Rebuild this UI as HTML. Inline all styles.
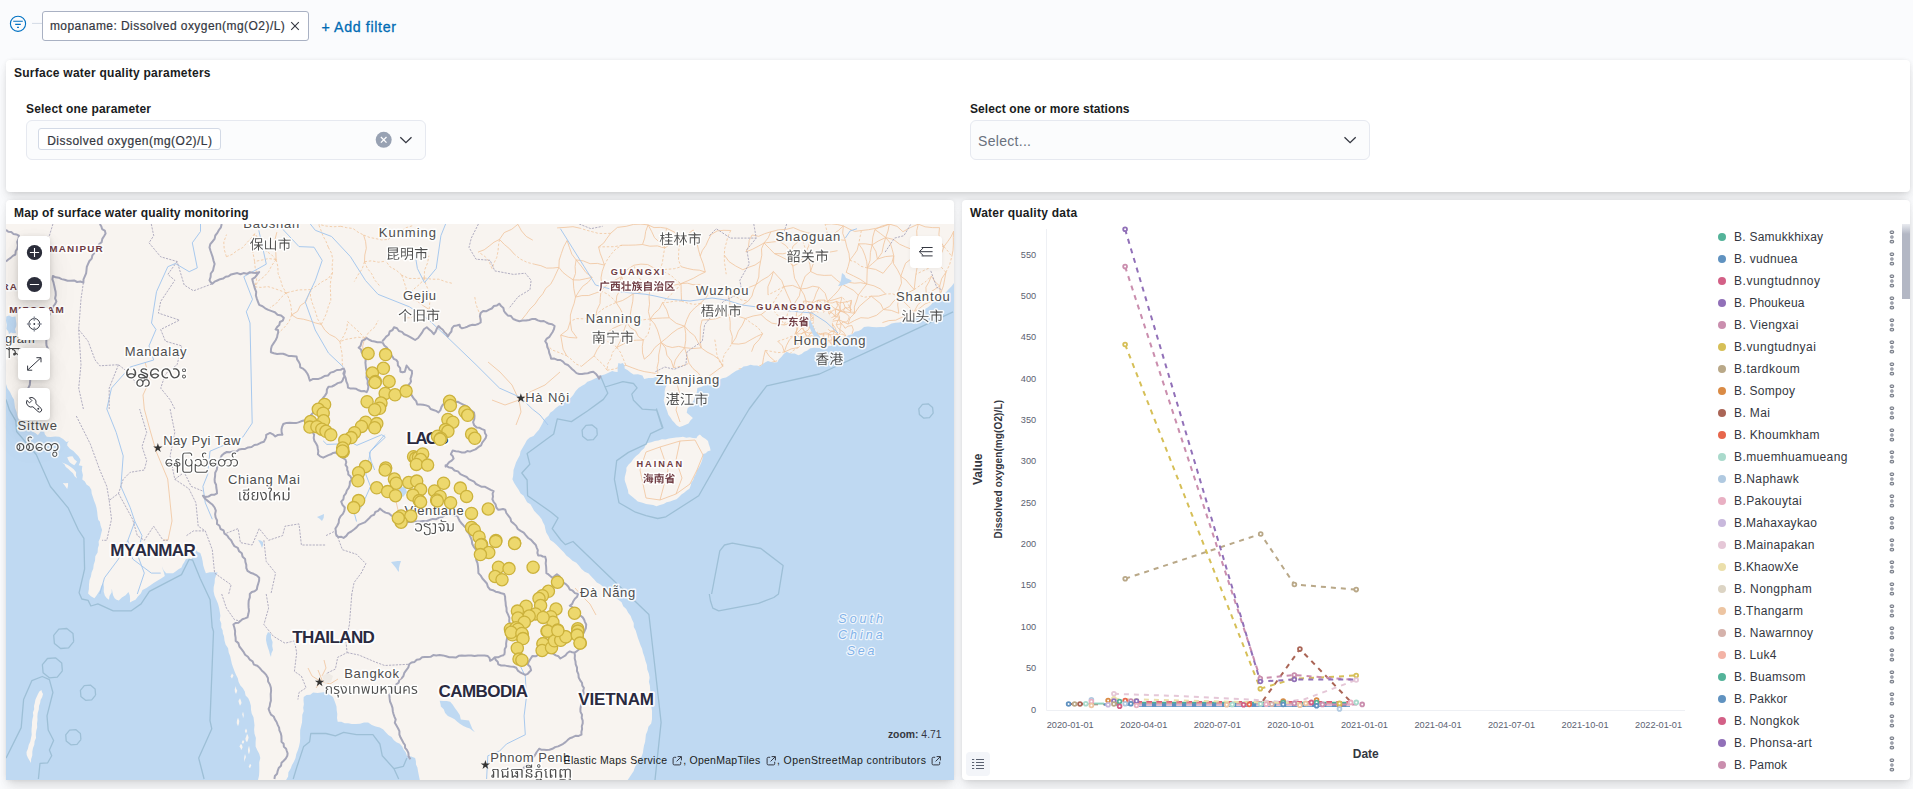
<!DOCTYPE html><html><head><meta charset="utf-8"><title>Dashboard</title><style>
html,body{margin:0;padding:0}
body{width:1913px;height:789px;overflow:hidden;background:#fafbfd;font-family:"Liberation Sans",sans-serif;color:#1a1c21;position:relative}
.abs{position:absolute}
.panel{position:absolute;background:#fff;border-radius:4px;box-shadow:0 .9px 4px -1px rgba(0,0,0,.08),0 2.6px 8px -1px rgba(0,0,0,.06),0 5.7px 12px -1px rgba(0,0,0,.05),0 15px 15px -1px rgba(0,0,0,.04)}
.ptitle{position:absolute;font-weight:700;font-size:12px;line-height:14px;white-space:nowrap;color:#1a1c21}
.lbl{position:absolute;font-weight:700;font-size:12px;line-height:14px;white-space:nowrap;color:#1a1c21}
.combo{position:absolute;height:38px;width:398px;border:1px solid #e6e9f0;border-radius:6px;background:#fbfcfd}
svg{position:absolute;left:0;top:0;overflow:hidden}
.tk{font-size:9.2px;fill:#5b6171;font-family:"Liberation Sans",sans-serif}
.axt{font-size:12px;font-weight:700;fill:#343741;font-family:"Liberation Sans",sans-serif}
.axs{font-size:10px;font-kerning:none;font-weight:700;fill:#343741;font-family:"Liberation Sans",sans-serif}
.lg{font-size:12px;fill:#343741;font-kerning:none;font-family:"Liberation Sans",sans-serif}
.mbtn{position:absolute;width:32px;height:32px;background:#fff;border-radius:4px;box-shadow:0 1px 5px rgba(0,0,0,.1),0 3.6px 13px rgba(0,0,0,.07),0 8.4px 23px rgba(0,0,0,.06),0 23px 35px rgba(0,0,0,.05)}
</style></head><body>
<svg width="60" height="50" viewBox="0 0 60 50"><circle cx="18" cy="23.8" r="7.6" fill="none" stroke="#0071c2" stroke-width="1.1"/><path d="M13.2 21.3h9.6M15.2 24.4h5.6M17.1 27.4h1.8" stroke="#0071c2" stroke-width="1.1" fill="none"/><path d="M32 23.4h10" stroke="#d3dae6" stroke-width="1"/></svg>
<div class="abs" id="fpill" style="left:42.2px;top:11.2px;width:264.6px;height:27.4px;border:1px solid #a9b1c3;border-radius:3px;background:#fff;box-sizing:content-box"><span id="fpt" class="abs" style="left:6.7px;top:7.3px;font-size:12px;line-height:15px;white-space:nowrap;color:#343741;-webkit-text-stroke:.2px #343741;letter-spacing:0.442px">mopaname: Dissolved oxygen(mg(O2)/L)</span><svg style="left:246.9px;top:9.2px" width="10" height="10" viewBox="0 0 10 10"><path d="M1.2 1.2l7.6 7.6M8.8 1.2L1.2 8.8" stroke="#343741" stroke-width="1.1"/></svg></div>
<div class="abs" id="addf" style="left:321.4px;top:18.6px;font-size:14.2px;line-height:17px;color:#006bb4;-webkit-text-stroke:.3px #006bb4;white-space:nowrap;letter-spacing:0.642px">+ Add filter</div>
<div class="panel" style="left:6px;top:60px;width:1904px;height:132px"></div>
<div class="ptitle" id="t1" style="left:14px;top:65.8px;letter-spacing:0.250px">Surface water quality parameters</div>
<div class="lbl" id="l1" style="left:26px;top:102px;letter-spacing:0.190px">Select one parameter</div>
<div class="combo" style="left:26px;top:120px"></div>
<div class="abs" style="left:38px;top:128.3px;width:181px;height:19.4px;border:1px solid #d3dae6;border-radius:3px;background:#fff"><span id="pillt" class="abs" style="left:8.2px;top:5.3px;font-size:12px;line-height:13px;white-space:nowrap;color:#343741;-webkit-text-stroke:.2px #343741;letter-spacing:0.483px">Dissolved oxygen(mg(O2)/L)</span></div>
<div class="lbl" id="l2" style="left:970px;top:102px;letter-spacing:0.081px">Select one or more stations</div>
<div class="combo" style="left:970px;top:120px"></div>
<div class="abs" id="selph" style="left:978px;top:133px;font-size:14px;line-height:17px;color:#6a717d;white-space:nowrap;letter-spacing:0.301px">Select...</div>
<svg width="1913" height="200" viewBox="0 0 1913 200"><circle cx="383.7" cy="139.8" r="8" fill="#98a2b3"/><path d="M380.9 137l5.6 5.6M386.5 137l-5.6 5.6" stroke="#fff" stroke-width="1.3"/><path d="M400.3 137.3l5.6 5.4 5.6-5.4" fill="none" stroke="#343741" stroke-width="1.3"/><path d="M1344.5 137.3l5.6 5.4 5.6-5.4" fill="none" stroke="#343741" stroke-width="1.3"/></svg>
<div class="panel" style="left:6px;top:200px;width:948px;height:580px"></div>
<div class="panel" style="left:962px;top:200px;width:948px;height:580px"></div>
<div class="ptitle" id="t2" style="left:14px;top:205.8px;letter-spacing:0.190px">Map of surface water quality monitoring</div>
<div class="ptitle" id="t3" style="left:970px;top:205.8px;letter-spacing:0.246px">Water quality data</div>
<svg width="1913" height="789" viewBox="0 0 1913 789" style="clip-path:inset(224px 959px 9px 6px)"><rect x="6" y="224" width="948" height="556" fill="#f8f4f0"/>
<path d="M898.8 296.6 906.6 293.4 914.2 289.6M898.8 296.6 903.9 301.7 908.9 306.8 914.0 311.8M898.8 296.6 893.8 301.0 889.5 306.4 883.4 309.5M898.8 296.6 898.7 289.8 901.5 283.2 900.8 276.3M898.8 296.6 897.7 305.0 898.8 313.3M595.7 315.6 597.2 309.5 600.0 303.7 600.3 297.4 601.1 291.1M684.6 347.7 679.6 353.7 675.3 360.0 673.4 367.6M684.6 347.7 685.7 340.5 685.7 333.4 684.6 326.2M684.6 347.7 678.7 346.4 672.2 347.5 666.4 346.0 661.0 342.4M684.6 347.7 686.9 355.5 689.1 363.3M684.6 347.7 692.9 348.5 701.3 347.9M730.8 230.5 723.9 230.3 717.2 230.9 711.1 234.6M702.1 320.0 709.0 319.7 715.8 318.8 722.4 316.4 729.2 315.2M702.1 320.0 700.4 327.0 700.3 333.9 700.1 340.9 701.3 347.9M610.7 233.3 607.0 238.2 603.6 243.2 598.6 246.9M610.7 233.3 617.4 227.4 626.3 226.3M364.5 261.7 364.8 255.0 366.3 248.3 365.6 241.6 363.6 235.0M558.9 267.4 556.3 273.1 553.7 278.7 550.7 284.2 545.8 288.3 542.8 293.8 538.7 298.5M558.9 267.4 552.8 268.0 546.6 268.1 540.9 265.7 534.9 264.3M558.9 267.4 562.9 272.4 567.9 276.3 573.2 279.9M558.9 267.4 559.2 260.1 561.4 253.4 563.7 246.8 567.1 240.5M837.7 334.4 834.9 327.5 830.7 321.5M837.7 334.4 831.6 334.7 825.4 333.9 819.3 334.6M783.9 286.5 786.7 293.2 789.8 299.9 792.4 306.8M783.9 286.5 792.6 285.4 800.6 289.0M783.9 286.5 781.7 280.6 777.5 276.1 773.4 271.5M842.3 284.3 848.4 282.3 854.6 283.2 860.7 282.7 866.8 284.0M842.3 284.3 836.7 279.9 831.4 275.2M842.3 284.3 838.2 290.7 833.1 296.2 827.6 301.4M842.3 284.3 848.0 287.4 853.7 290.4 858.3 295.1M939.7 286.0 934.0 289.8 928.2 293.6 924.3 299.5M939.7 286.0 934.8 281.6 931.3 276.0M939.7 286.0 941.7 278.6 945.9 272.3M939.7 286.0 940.1 292.4 937.5 298.4M792.8 266.1 799.1 263.0 803.1 257.8 806.2 251.7M792.8 266.1 787.8 260.2 781.2 256.8 774.4 253.6M792.8 266.1 790.3 259.2 790.9 252.0M792.8 266.1 793.6 272.2 794.6 278.3 797.6 283.7 800.6 289.0M806.2 251.7 808.8 245.6 810.0 238.9 815.1 234.0M806.2 251.7 808.0 258.3 810.0 264.8 810.6 271.5M806.2 251.7 813.0 253.1 819.9 253.6M633.2 293.8 627.9 297.4 622.3 300.6 616.1 302.5M633.2 293.8 641.6 292.1 649.9 289.4M633.2 293.8 632.8 301.2 631.3 308.4 630.1 315.6 626.9 322.5M633.2 293.8 628.2 288.8 623.8 283.4 621.7 276.5M364.8 338.2 362.7 345.9 363.4 353.6 365.4 361.3M321.3 324.4 315.3 322.9 309.4 320.8 303.4 319.2 297.1 318.3 291.6 314.9M321.3 324.4 324.8 330.1 329.5 334.4 335.4 337.3 340.0 341.7M310.8 289.6 308.3 295.7 305.9 301.8 300.3 305.6 297.5 311.4 291.6 314.9M848.0 324.1 854.3 320.6 860.8 317.7 868.2 318.2M848.0 324.1 850.0 318.0 854.6 313.4M848.0 324.1 839.8 320.1 830.7 321.5M924.3 299.5 917.9 304.6 914.0 311.8M924.3 299.5 926.2 293.6 925.9 287.2 929.1 281.7 931.3 276.0M924.3 299.5 930.9 298.5 937.5 298.4M644.3 359.2 650.3 354.1 654.9 347.5 661.0 342.4M644.3 359.2 642.5 352.9 642.3 346.5 643.3 340.1M868.2 318.2 876.6 315.3 883.4 309.5M532.8 240.2 526.2 236.4 521.5 230.9 517.9 224.3M660.2 269.8 653.8 267.9 647.6 264.5 640.9 264.1 633.9 265.2M276.1 259.6 275.8 252.7 274.7 245.8 275.1 239.0 276.9 232.1M893.8 255.8 892.2 249.3 890.2 242.9 885.7 237.6M893.8 255.8 891.9 262.6 887.4 267.9 883.1 273.3M893.8 255.8 893.5 263.6 897.5 269.8 900.8 276.3M893.8 255.8 885.4 256.6 877.4 259.1M642.5 244.5 635.7 245.0 628.9 245.2 622.0 245.2M642.5 244.5 644.7 238.1 645.7 231.3 648.1 224.9M642.5 244.5 649.8 246.2 657.4 245.9 664.7 248.0M729.2 315.2 730.2 322.3 730.1 329.5 732.3 336.5 731.8 343.7M729.2 315.2 737.4 316.1 745.3 318.5M729.2 315.2 729.8 308.3 729.8 301.5 728.2 294.7M729.2 315.2 735.4 310.2 741.7 305.4 748.3 301.0M729.2 315.2 723.7 312.1 717.4 311.1 711.7 308.4 706.1 305.5 700.2 303.5M577.1 338.0 571.6 330.5 570.3 321.3M577.1 338.0 568.7 337.4 560.7 335.1M762.5 364.4 763.6 357.4 765.3 350.4M762.5 364.4 756.9 367.4 751.2 369.7 744.7 368.3 738.7 369.0M762.5 364.4 768.8 363.1 775.1 361.4M762.6 333.8 759.0 339.8 754.1 345.0 751.6 351.7M762.6 333.8 756.7 336.5 750.9 339.7 745.2 343.0 738.7 344.1 731.8 343.7M854.6 313.4 847.4 312.1 840.2 311.4M854.6 313.4 859.1 306.6 865.1 301.3 871.3 296.2M854.6 313.4 854.3 307.0 856.5 301.0 858.3 295.1M681.0 283.6 681.2 292.3 681.5 301.0M681.0 283.6 674.8 285.0 668.5 285.8 662.1 286.2 656.3 289.2 649.9 289.4M681.0 283.6 687.2 281.0 693.4 278.3 699.2 274.9 705.3 272.0M681.0 283.6 687.2 283.1 693.0 284.7 699.2 284.4 704.8 287.2 710.4 289.4M650.2 319.0 654.3 313.5 659.4 308.9 662.5 302.7M650.2 319.0 654.6 324.0 657.4 329.9 659.3 336.1 661.0 342.4M650.2 319.0 648.4 311.6 649.5 304.2 649.0 296.8 649.9 289.4M650.2 319.0 656.5 318.3 662.8 318.0 669.2 317.8M756.1 284.6 758.8 277.0 759.2 269.0 760.6 261.2M756.1 284.6 761.8 280.2 768.2 276.6 773.4 271.5M756.1 284.6 749.2 287.3 742.0 289.3 734.8 291.2 728.2 294.7M756.1 284.6 753.6 290.1 752.0 296.0 748.3 301.0M761.1 314.6 753.0 316.0 745.3 318.5M761.1 314.6 766.0 310.8 771.2 307.3M761.1 314.6 766.1 319.3 771.8 323.1M576.1 259.9 583.3 260.9 590.1 263.7 597.4 263.4 604.4 265.1M576.1 259.9 575.1 266.6 575.5 273.5 573.2 279.9M576.1 259.9 581.2 266.0 585.9 272.5 592.2 277.4M576.1 259.9 571.8 254.1 569.4 247.3 567.1 240.5M673.4 367.6 671.3 360.8 666.9 355.2 665.6 348.0 661.0 342.4M866.8 284.0 867.0 275.9 867.3 267.9M866.8 284.0 860.4 279.4 853.3 275.8 846.2 272.4M866.8 284.0 862.5 289.4 858.3 295.1M866.8 284.0 873.9 285.8 880.3 288.9 885.7 294.0M861.4 230.5 868.6 229.7 875.6 228.4 882.6 226.8 889.3 224.1M861.4 230.5 854.8 231.4 849.0 228.9 843.3 225.9M557.1 227.9 565.0 227.4 573.0 226.7 580.9 228.4M684.6 326.2 677.8 329.0 672.0 333.1 666.6 338.0 661.0 342.4M684.6 326.2 689.0 331.4 694.6 335.8 697.8 341.9 701.3 347.9M684.6 326.2 686.9 319.4 689.9 313.1 694.6 308.0 700.2 303.5M684.6 326.2 676.2 323.3 669.2 317.8M724.3 255.1 729.1 261.7 735.7 266.0 742.8 269.7M745.9 251.9 748.5 246.5 749.2 240.4 752.1 235.0M745.9 251.9 752.2 249.4 758.2 246.3 764.0 243.0M885.7 237.6 893.4 239.4 899.6 244.2M885.7 237.6 878.7 240.8 872.1 244.9M885.7 237.6 888.0 231.0 889.3 224.1M885.7 237.6 880.4 233.5 874.9 229.5M885.7 237.6 883.5 245.0 882.0 252.6 877.4 259.1M700.2 256.0 703.2 263.8 705.3 272.0M700.2 256.0 698.4 249.5 697.0 242.8 696.1 236.1 693.2 229.9M700.2 256.0 702.4 250.4 705.9 245.4 708.3 239.9 711.1 234.6M616.9 347.4 620.2 341.4 622.6 335.2 624.5 328.7 626.9 322.5M616.9 347.4 623.1 344.2 629.3 340.7 636.2 340.2 643.3 340.1M815.1 234.0 807.5 232.9 800.3 230.6 793.3 227.6M815.1 234.0 822.0 234.7 828.0 238.4M602.0 336.9 607.7 332.4 613.5 328.1 620.1 325.2 626.9 322.5M602.0 336.9 601.1 343.9 597.1 349.7 594.1 355.9M917.0 237.4 916.7 230.7 918.3 224.1M840.2 311.4 840.2 304.2 841.9 297.2M840.2 311.4 833.0 307.4 827.6 301.4M840.2 311.4 836.4 317.3 830.7 321.5M616.1 302.5 620.3 308.9 623.7 315.6 626.9 322.5M616.1 302.5 616.8 295.9 620.2 289.8 619.4 282.8 621.7 276.5M666.6 228.3 674.8 232.3 679.8 240.0M666.6 228.3 660.4 227.4 654.0 227.6 648.1 224.9M899.6 244.2 905.8 247.0 912.1 249.5 918.7 251.1M793.3 227.6 785.9 229.4 778.2 229.9 770.8 231.8M849.7 260.3 849.0 253.5 846.8 246.9 845.3 240.3M849.7 260.3 848.2 266.4 846.2 272.4M849.7 260.3 853.6 255.3 857.1 250.2 858.7 243.9M765.3 350.4 769.5 356.5 775.1 361.4M883.1 273.3 875.6 269.4 867.3 267.9M872.1 244.9 870.4 252.5 870.0 260.5 867.3 267.9M872.1 244.9 872.8 237.1 874.9 229.5M872.1 244.9 875.9 251.6 877.4 259.1M872.1 244.9 865.4 243.8 858.7 243.9M722.8 366.2 717.8 369.7 713.0 373.3 708.0 376.8 701.9 378.3M722.8 366.2 719.2 359.5 713.5 355.3 707.0 352.0 701.3 347.9M931.0 242.0 937.3 244.7 943.9 246.6M601.1 291.1 594.9 293.3 588.7 295.5 581.9 295.6 575.5 297.1M601.1 291.1 601.7 284.6 601.0 277.9 602.2 271.4 604.4 265.1M601.1 291.1 605.4 286.1 610.5 282.5 616.2 279.6 621.7 276.5M662.5 302.7 666.7 309.9 669.2 317.8M819.1 287.3 816.3 292.8 814.3 298.8 811.2 304.1 806.3 308.3M819.1 287.3 812.8 286.2 806.8 288.3 800.6 289.0M819.1 287.3 825.1 293.3 827.6 301.4M731.8 343.7 735.8 337.8 738.3 331.0 742.3 325.1 745.3 318.5M752.1 235.0 758.7 236.3 764.7 233.7 770.8 231.8M939.5 227.6 932.2 227.6 925.1 226.8 918.3 224.1M939.5 227.6 938.9 234.4 940.0 240.8 943.9 246.6M499.5 239.4 504.2 232.6 511.7 229.3 517.9 224.3M499.5 239.4 494.0 242.2 489.1 246.1 484.2 249.8 478.3 252.0M499.5 239.4 504.4 244.5 509.8 249.0 514.5 254.4M661.0 342.4 660.0 348.7 658.7 354.9 658.6 361.3 657.1 367.5 658.0 373.9M914.2 289.6 915.0 281.9 915.9 274.3M914.2 289.6 910.0 284.9 906.0 280.0 900.8 276.3M770.8 231.8 768.2 237.9 764.0 243.0M538.7 298.5 535.0 304.1 530.1 308.9 526.2 314.3 521.9 319.5M934.5 262.0 929.8 257.5 924.5 253.9 918.7 251.1M934.5 262.0 937.5 256.8 942.0 252.5 943.9 246.6M792.4 306.8 795.8 301.2 799.4 295.7 800.6 289.0M792.4 306.8 785.3 305.5 778.2 304.9 771.2 307.3M760.6 261.2 761.8 255.2 761.5 248.8 764.0 243.0M760.6 261.2 755.1 265.0 748.9 267.2 742.8 269.7M797.0 321.5 790.6 322.9 784.3 325.0M797.0 321.5 797.6 328.7 794.4 335.2M797.0 321.5 802.0 326.1 804.5 332.3 807.4 338.2M774.4 253.6 782.8 253.8 790.9 252.0M774.4 253.6 769.3 248.3 764.0 243.0M679.8 240.0 686.6 235.2 693.2 229.9M679.8 240.0 671.8 243.2 664.7 248.0M626.9 322.5 630.2 327.6 635.5 330.8 638.3 336.5 643.3 340.1M815.1 321.3 810.6 314.9 806.3 308.3M701.9 378.3 698.2 372.8 693.0 368.6 689.1 363.3M810.6 271.5 805.2 276.2 802.7 282.5 800.6 289.0M810.6 271.5 817.2 274.6 824.2 275.4 831.4 275.2M810.6 271.5 812.7 265.0 816.3 259.3 819.9 253.6M806.3 308.3 806.1 301.4 804.2 295.0 800.6 289.0M867.3 267.9 872.4 263.6 877.4 259.1M867.3 267.9 866.7 261.4 864.9 255.2 862.5 249.3 858.7 243.9M790.9 252.0 793.1 246.0 797.9 241.9 801.7 237.0M790.9 252.0 786.0 245.7 779.4 241.2M575.5 297.1 573.8 288.6 573.2 279.9M575.5 297.1 574.2 303.2 572.1 309.1 570.4 315.0 570.3 321.3M575.5 297.1 578.9 291.5 582.7 286.3 588.1 282.4 592.2 277.4M914.0 311.8 908.1 315.3 901.8 317.3 895.7 320.2 888.8 320.6 882.4 322.6M914.0 311.8 919.7 308.2 925.1 303.9 931.5 301.4 937.5 298.4M828.0 238.4 836.6 239.5 845.3 240.3M828.0 238.4 833.1 234.2 838.5 230.4 843.3 225.9M784.3 352.1 782.4 345.9 777.8 341.3M784.3 352.1 791.2 348.9 798.6 347.4M784.3 352.1 786.4 345.7 789.4 339.8 794.4 335.2M883.4 309.5 880.7 303.8 876.0 300.0 871.3 296.2M883.4 309.5 891.3 310.4 898.8 313.3M633.9 265.2 626.9 269.9 621.7 276.5M705.3 272.0 699.4 270.2 693.2 269.7 687.2 268.4 681.2 266.7M604.4 265.1 602.4 259.1 600.1 253.1 598.6 246.9M773.4 271.5 771.1 279.2 767.9 286.7 768.0 294.9M918.3 224.1 911.1 222.1 903.8 220.6 896.5 222.9 889.3 224.1M918.3 224.1 910.4 227.6 902.9 231.7M429.2 309.5 423.3 305.7 417.7 301.5 411.1 298.9 404.8 295.9M594.1 355.9 587.8 361.1 581.5 366.3M918.7 251.1 912.6 257.7 905.6 263.2M918.7 251.1 919.7 259.1 917.3 266.6 915.9 274.3M798.6 347.4 803.1 343.0 807.4 338.2M943.9 246.6 947.6 241.7 951.1 236.7 953.7 231.2M871.3 296.2 878.6 296.1 885.7 294.0M905.6 263.2 903.1 269.7 900.8 276.3M710.4 289.4 706.4 297.2 700.2 303.5M625.9 365.3 632.1 367.7 638.4 370.0 644.8 371.7 651.4 372.7 658.0 373.9M845.3 240.3 842.7 233.3 843.3 225.9M573.2 279.9 579.6 280.0 585.9 278.7 592.2 277.4M648.1 224.9 651.5 231.2 654.5 237.7 659.9 242.6 664.7 248.0M648.1 224.9 640.8 224.1 633.5 224.4 626.3 226.3M945.9 272.3 944.7 279.1 943.4 285.9 941.1 292.3 937.5 298.4M570.3 321.3 567.7 329.7 560.7 335.1M784.3 325.0 778.1 324.2 771.8 323.1M841.9 297.2 834.8 299.4 827.6 301.4M566.6 355.7 563.1 349.2 561.9 342.1 560.7 335.1M953.7 231.2 953.3 237.6 953.4 244.0 953.0 250.3 951.8 256.6M827.6 301.4 827.5 308.3 829.4 314.8 830.7 321.5M801.7 237.0 794.5 239.6 787.0 240.7 779.4 241.2M889.3 224.1 897.0 226.3 902.9 231.7M889.3 224.1 881.8 226.1 874.9 229.5M843.3 225.9 837.3 224.5 831.3 223.8 825.1 224.2M819.9 253.6 828.7 252.3 837.5 250.7M764.0 243.0 771.7 242.1 779.4 241.2M805.2 331.7 805.8 334.6 808.1 336.5M805.2 331.7 801.6 333.8 799.7 337.4M805.2 331.7 808.0 330.2 809.6 327.6M805.2 331.7 800.9 333.9 796.0 333.9M805.2 331.7 808.4 332.9 811.7 332.8M805.2 331.7 803.4 329.9 802.4 327.5M831.6 322.0 829.0 325.1 827.2 328.6M831.6 322.0 832.8 326.6 834.3 331.1M831.6 322.0 828.2 320.1 825.0 317.9M831.6 322.0 828.7 322.1 826.3 323.6M808.1 336.5 803.9 337.4 799.7 337.4M808.1 336.5 808.0 340.6 810.1 344.1M808.1 336.5 811.8 335.7 815.2 337.4M808.1 336.5 809.6 334.3 811.7 332.8M841.2 323.6 843.5 325.6 845.0 328.3M841.2 323.6 839.4 320.7 839.5 317.2M841.2 323.6 838.8 324.4 836.3 324.4M841.2 323.6 843.6 321.7 846.7 322.1M841.2 323.6 840.6 326.6 839.7 329.5M824.3 310.9 823.3 308.2 823.9 305.3M824.3 310.9 822.7 314.8 818.9 316.8M824.3 310.9 820.5 309.5 817.0 311.4M824.3 310.9 820.1 309.1 816.7 306.2M824.3 310.9 827.9 310.9 831.1 312.6M796.2 317.1 799.6 319.3 802.9 321.9M796.2 317.1 796.5 313.3 797.6 309.8M796.2 317.1 799.0 316.1 801.3 314.2M796.2 317.1 797.0 319.6 796.6 322.2M828.8 303.2 830.2 307.8 831.1 312.6M828.8 303.2 832.7 302.8 836.5 301.4M828.8 303.2 826.6 301.8 824.6 300.1M840.5 310.7 838.3 313.7 839.5 317.2M840.5 310.7 843.2 309.7 845.1 307.5M840.5 310.7 838.1 309.4 835.4 309.5M840.5 310.7 839.1 305.8 836.5 301.4M840.5 310.7 842.7 311.8 845.0 313.0M840.5 310.7 837.9 313.8 834.6 316.3M809.0 301.9 808.7 305.4 806.1 307.8M809.0 301.9 810.6 304.9 811.7 308.0M809.0 301.9 806.3 301.1 803.3 301.2M809.0 301.9 813.8 302.4 818.0 300.2M851.9 334.0 853.3 329.8 851.9 325.5M845.0 328.3 848.1 326.2 851.9 325.5M823.9 305.3 821.3 302.4 818.0 300.2M823.9 305.3 825.0 302.8 824.6 300.1M849.3 316.9 848.3 319.7 846.7 322.1M849.3 316.9 847.5 314.6 845.0 313.0M803.0 342.7 800.9 340.3 799.7 337.4M803.0 342.7 806.8 342.2 810.1 344.1M803.0 342.7 799.9 343.5 796.7 344.3M821.4 325.4 818.4 323.6 815.2 322.3M821.4 325.4 821.9 320.6 818.9 316.8M821.4 325.4 824.0 327.5 827.2 328.6M821.4 325.4 818.2 328.4 817.2 332.7M821.4 325.4 823.9 324.7 826.3 323.6M815.2 322.3 816.8 319.4 818.9 316.8M815.2 322.3 811.2 323.6 809.6 327.6M815.2 322.3 812.6 320.3 809.3 319.8M838.3 335.1 836.0 333.4 834.3 331.1M838.3 335.1 835.5 337.6 832.1 339.2M838.3 335.1 842.2 334.1 845.9 335.9M838.3 335.1 839.3 337.6 838.6 340.3M838.3 335.1 840.2 332.6 839.7 329.5M828.5 333.6 831.1 331.7 834.3 331.1M828.5 333.6 830.7 336.1 832.1 339.2M828.5 333.6 826.1 332.7 823.5 333.0M828.5 333.6 828.4 336.9 827.0 339.9M802.9 321.9 799.5 324.0 797.3 327.3M802.9 321.9 801.2 318.2 801.3 314.2M802.9 321.9 805.8 325.2 809.6 327.6M802.9 321.9 806.2 321.4 809.3 319.8M802.9 321.9 799.7 321.7 796.6 322.2M802.9 321.9 801.6 324.6 802.4 327.5M818.9 316.8 819.0 313.7 817.0 311.4M818.9 316.8 814.1 316.5 810.4 313.3M818.9 316.8 813.9 317.5 809.3 319.8M797.5 304.3 796.2 307.0 797.6 309.8M827.2 328.6 830.3 331.0 834.3 331.1M806.1 307.8 808.3 310.6 810.4 313.3M806.1 307.8 801.8 308.7 797.6 309.8M806.1 307.8 809.0 306.5 811.7 308.0M806.1 307.8 803.7 311.0 801.3 314.2M806.1 307.8 804.2 304.7 803.3 301.2M815.5 342.6 812.8 343.4 810.1 344.1M815.5 342.6 816.0 340.0 815.2 337.4M815.5 342.6 817.4 344.7 819.8 346.0M815.4 327.5 814.0 330.4 811.7 332.8M799.7 337.4 799.3 341.3 796.7 344.3M799.7 337.4 797.8 335.8 796.0 333.9M839.5 317.2 837.8 320.8 836.3 324.4M839.5 317.2 837.0 316.8 834.6 316.3M834.3 331.1 833.3 335.2 832.1 339.2M817.0 311.4 813.6 311.8 810.4 313.3M817.0 311.4 814.5 309.5 811.7 308.0M845.1 307.5 844.3 304.8 842.9 302.4M845.1 307.5 848.1 309.5 850.8 311.8M845.1 307.5 843.6 310.2 845.0 313.0M845.1 307.5 847.7 308.0 850.2 306.8M842.9 302.4 847.2 301.7 851.4 300.3M842.9 302.4 839.5 302.8 836.5 301.4M810.4 313.3 811.8 310.9 811.7 308.0M810.4 313.3 810.7 316.7 809.3 319.8M810.1 344.1 814.9 345.3 819.8 346.0M797.3 327.3 796.5 330.6 796.0 333.9M797.3 327.3 797.3 324.7 796.6 322.2M797.3 327.3 799.9 326.2 802.4 327.5M832.1 339.2 830.9 341.6 831.4 344.3M832.1 339.2 835.4 339.4 838.6 340.3M832.1 339.2 829.7 340.6 827.0 339.9M817.2 332.7 820.3 333.7 823.5 333.0M817.2 332.7 819.3 336.9 821.4 341.1M817.2 332.7 815.5 334.8 815.2 337.4M817.2 332.7 814.4 333.3 811.7 332.8M825.0 317.9 827.6 314.8 831.1 312.6M825.0 317.9 825.5 320.8 826.3 323.6M825.0 317.9 830.0 318.3 834.6 316.3M831.4 344.3 835.8 343.7 838.6 340.3M831.4 344.3 829.6 341.7 827.0 339.9M823.5 333.0 823.0 337.2 821.4 341.1M823.5 333.0 823.9 337.1 827.0 339.9M845.9 335.9 842.5 338.4 838.6 340.3M845.9 335.9 843.4 332.1 839.7 329.5M851.4 300.3 849.8 306.0 850.8 311.8M851.4 300.3 851.3 303.6 850.2 306.8M835.4 309.5 832.8 310.4 831.1 312.6M835.4 309.5 837.7 305.7 836.5 301.4M835.4 309.5 835.6 312.9 834.6 316.3M811.7 308.0 814.5 307.8 816.7 306.2M821.4 341.1 823.5 343.6 826.4 345.1M821.4 341.1 821.3 343.8 819.8 346.0M816.7 306.2 817.1 303.1 818.0 300.2M818.0 300.2 821.3 300.1 824.6 300.1M809.6 327.6 809.5 323.7 809.3 319.8M809.6 327.6 806.0 327.1 802.4 327.5M836.3 324.4 837.5 327.3 839.7 329.5M831.1 312.6 833.3 313.9 834.6 316.3M850.8 311.8 850.5 309.3 850.2 306.8M826.4 345.1 827.7 342.6 827.0 339.9M826.4 345.1 823.1 345.7 819.8 346.0M796.7 344.3 795.4 339.2 796.0 333.9M796.0 333.9 797.0 328.1 796.6 322.2M796.0 333.9 799.3 330.8 802.4 327.5" fill="none" stroke="#f1c6a0" stroke-width=".85" stroke-linejoin="round"/>
<path d="M898.8 296.6 892.6 293.8 885.7 294.0M595.7 315.6 600.1 311.2 605.0 307.6 610.5 305.0 616.1 302.5M595.7 315.6 601.5 318.9 608.1 318.5 614.0 321.5 620.3 322.6 626.9 322.5M595.7 315.6 589.5 317.8 583.1 318.8 576.3 318.6 570.3 321.3M730.8 230.5 727.9 236.3 726.4 242.5 724.7 248.6 724.3 255.1M340.7 226.3 346.7 227.7 353.0 228.5 358.1 232.2 363.6 235.0M340.7 226.3 333.2 226.8 325.8 226.0 318.6 224.3M610.7 233.3 604.5 233.5 598.4 233.4 592.5 231.8 586.7 230.3 580.9 228.4M364.5 261.7 367.3 268.3 371.7 273.8 374.8 280.1 379.4 285.5M364.5 261.7 362.2 268.9 357.9 275.1 354.3 281.5M364.5 261.7 371.6 260.8 378.7 262.2 385.8 261.1M783.9 286.5 780.7 291.7 777.1 296.6 773.9 301.8 771.2 307.3M783.9 286.5 776.1 290.9 768.0 294.9M226.4 256.7 232.4 254.3 237.1 250.5 242.7 247.6 246.7 242.9 250.9 238.5 254.8 233.5M226.4 256.7 224.2 249.3 223.8 242.0 226.5 234.6M806.2 251.7 803.9 244.4 801.7 237.0M364.8 338.2 358.4 337.2 352.2 338.3 346.0 339.3 340.0 341.7M364.8 338.2 359.4 332.3 353.5 326.9 347.6 321.6M364.8 338.2 368.9 332.1 374.7 327.2 378.1 320.6M321.3 324.4 317.7 319.2 316.0 313.4 314.0 307.7 311.9 302.0 310.4 296.1 310.8 289.6M321.3 324.4 324.1 318.6 326.7 312.8 328.3 306.5 330.8 300.6M310.8 289.6 304.6 289.8 298.4 289.9 292.3 291.4 286.3 292.8M310.8 289.6 316.6 285.8 322.1 281.7 328.4 278.5 332.5 272.5M291.6 314.9 291.2 307.2 289.6 299.8 286.3 292.8M291.6 314.9 288.9 322.0 284.1 327.7 278.6 332.9M402.9 317.8 410.1 317.8 416.5 314.9 423.3 313.8 429.2 309.5M660.2 269.8 665.8 272.7 671.4 275.5 675.8 280.1 681.0 283.6M660.2 269.8 667.3 269.3 674.4 268.7 681.2 266.7M660.2 269.8 662.4 262.6 663.4 255.3 664.7 248.0M276.1 259.6 277.8 266.4 278.1 273.5 280.6 280.0 282.5 286.7 286.3 292.8M276.1 259.6 271.5 254.7 265.6 250.7 261.1 245.8 258.6 239.1 254.8 233.5M276.1 259.6 268.7 258.5 261.7 260.1 254.6 261.5M276.1 259.6 271.9 265.2 268.7 271.4 264.1 276.6 258.4 280.8 254.9 286.9M762.6 333.8 757.9 327.4 751.4 323.2 745.3 318.5M854.6 313.4 850.1 308.2 847.0 301.9 841.9 297.2M681.0 283.6 676.9 288.9 672.1 293.5 667.3 298.0 662.5 302.7M650.2 319.0 642.4 319.9 634.7 321.4 626.9 322.5M650.2 319.0 650.0 326.7 648.1 333.9 643.3 340.1M673.4 367.6 681.4 366.2 689.1 363.3M412.2 225.8 405.4 227.9 400.0 232.3 393.7 235.3 388.1 239.5M681.5 301.0 675.1 301.0 668.9 302.3 662.5 302.7M681.5 301.0 687.6 303.1 693.8 304.4 700.2 303.5M861.4 230.5 860.0 237.2 858.7 243.9M724.3 255.1 724.4 261.5 725.3 267.9 726.2 274.2M424.3 277.9 431.4 279.2 438.9 279.2 445.8 281.8 452.9 283.5M424.3 277.9 425.8 284.2 428.4 290.2 430.8 296.3 429.7 303.0 429.2 309.5M424.3 277.9 416.6 278.5 408.9 278.4 401.7 275.1M424.3 277.9 424.5 270.3 427.5 263.1 428.9 255.7M424.3 277.9 420.5 283.6 415.3 287.8 410.5 292.3 404.8 295.9M616.9 347.4 612.1 343.7 606.4 341.2 602.0 336.9M616.9 347.4 612.5 352.3 610.9 358.3 607.8 363.8 607.0 370.2M616.9 347.4 620.8 352.9 623.4 359.1 625.9 365.3M286.3 292.8 280.2 290.6 274.1 288.4 267.9 286.6 261.3 287.4 254.9 286.9M286.3 292.8 280.8 297.8 276.1 303.6 269.9 307.8M328.3 247.2 331.5 253.2 332.8 259.5 332.1 266.1 332.5 272.5M328.3 247.2 326.0 241.4 323.0 235.9 320.9 230.1 318.6 224.3M616.1 302.5 611.9 297.7 607.0 293.8 601.1 291.1M666.6 228.3 665.2 234.8 664.0 241.3 664.7 248.0M849.7 260.3 855.8 262.2 861.0 266.3 867.3 267.9M765.3 350.4 771.6 351.4 777.9 352.6 784.3 352.1M722.8 366.2 722.7 359.6 724.6 353.9 728.6 348.9 731.8 343.7M722.8 366.2 718.5 360.1 716.6 353.2 715.9 346.1 714.7 339.1M363.6 235.0 369.5 237.4 375.6 238.6 381.7 239.9 388.1 239.5M474.8 297.1 475.8 303.4 477.9 309.5 480.4 315.5 479.7 322.2M499.5 239.4 498.5 245.3 498.0 251.4 496.8 257.3 494.1 262.9 492.1 268.6M914.2 289.6 920.1 285.4 926.1 281.3 931.3 276.0M492.1 268.6 489.1 261.7 484.6 256.1 478.3 252.0M340.0 341.7 344.0 335.5 346.8 328.9 347.6 321.6M340.0 341.7 340.8 347.7 342.1 353.6 342.2 359.6 342.4 365.6M934.5 262.0 929.4 267.9 922.7 271.0 915.9 274.3M934.5 262.0 940.7 266.5 945.9 272.3M607.0 370.2 603.4 364.8 598.6 360.5 594.1 355.9M607.0 370.2 613.5 369.2 619.7 367.3 625.9 365.3M649.9 289.4 644.9 284.1 639.8 278.7 636.5 272.3 633.9 265.2M792.4 306.8 787.8 312.0 786.4 318.7 784.3 325.0M254.8 233.5 252.3 240.5 252.0 247.5 253.3 254.5 254.6 261.5M679.8 240.0 679.1 246.7 678.6 253.5 678.5 260.2 681.2 266.7M815.1 321.3 813.3 327.3 810.5 332.8 807.4 338.2M534.9 264.3 527.4 262.5 520.6 259.2 514.5 254.4M828.0 238.4 827.0 231.2 825.1 224.2M604.4 265.1 607.6 259.1 611.6 253.7 616.0 248.8 622.0 245.2M777.8 341.3 786.2 338.5 794.4 335.2M546.6 344.6 552.3 350.0 559.5 352.7 566.6 355.7M798.6 347.4 792.7 350.8 787.8 356.0 781.8 359.4 775.1 361.4M332.5 272.5 330.8 279.5 330.3 286.5 330.6 293.6 330.8 300.6M943.9 246.6 948.1 251.4 951.8 256.6M254.6 261.5 255.2 267.9 257.0 274.2 256.4 280.5 254.9 286.9M871.3 296.2 864.7 297.2 858.3 295.1M622.0 245.2 614.3 246.7 606.5 246.8 598.6 246.9M771.2 307.3 775.7 313.2 780.8 318.5 784.3 325.0M728.2 294.7 735.1 296.1 741.3 299.9 748.3 301.0M945.9 272.3 949.6 264.7 951.8 256.6M401.7 275.1 404.1 281.8 406.2 288.6 404.8 295.9M401.7 275.1 396.5 270.4 390.1 266.9 385.8 261.1M566.6 355.7 571.4 359.4 575.7 363.9 581.5 366.3M794.4 335.2 800.9 336.5 807.4 338.2" fill="none" stroke="#f1c7a1" stroke-width=".85" stroke-dasharray="2.5 1.8" stroke-linejoin="round"/>
<path d="M6 388 7.8 390.6 10.4 393.2 12 396.5 14 399.5 14.5 403.7 15 407.9 16.6 411.9 17.1 415 18 418 19.3 420.8 21.8 424 25.3 426 28 429 31.2 431.1 34.8 432.7 37.9 435 39.6 433.1 41 431 44.1 431.5 44.9 434.4 46.8 436.8 50.9 436.9 55.1 436.5 59.2 436.8 63.1 439 66.3 442.1 69 441.2 67.4 443.1 67.2 445.6 70 448.7 73.4 451 76 453.7 78.7 456.4 80.5 459.8 79.9 462.6 78.7 465.2 82.3 466.1 81.8 470.5 82.9 475 82.3 479.4 84.9 481.6 86.5 484.6 89.4 486.5 91.3 489.8 91.7 493.6 92.9 497.1 94.1 500.7 95.5 504.2 96.5 507.8 97.2 511.9 97.6 516 98.3 520 99.8 521.5 100.7 525.8 102.1 530 101 534.2 100 538.4 98.6 541.5 98.9 544.9 97.9 548.1 97.6 552.5 95.3 556.3 95 560.7 93.7 564.8 93.2 568.8 91.6 572.5 90.9 576.4 89.5 580.2 89 584.6 88.9 589 88.1 593.4 90.9 596.3 94.4 598.3 96.5 595.6 98.3 592.8 100 589.9 101.1 586.2 103.4 583 103.9 587.2 103.7 591.4 104.8 595.5 106.6 597.9 109 599.7 109.5 595.9 111.6 592.4 111.8 588.5 112.4 591.9 113.1 595.2 114.6 598.3 116.5 599.7 118.8 600.4 121.9 597.4 125.6 595.2 128.5 592 129.8 595.4 130.1 598.9 129.9 602.5 132.6 600.9 135.5 599.7 137.9 596.5 140.8 593.6 142.5 589.9 146.4 587.9 150.1 585.6 153.6 583 157.3 580.7 161.1 578.4 164.8 576 164 572.7 162.8 569.5 162 566.2 163.4 570.1 166.2 573.2 169.6 573.2 173.1 573.2 175.9 571.3 178.5 569.2 181.5 567.6 182.6 564.7 184.4 562.1 185.7 559.3 188.5 558.6 191.3 559.3 192.9 556.2 194.7 553.3 196.1 550.2 197.9 552.1 200.3 553 201.7 557 202.6 561.1 203.2 565.2 204.4 569.3 205.9 573.2 209.8 572.2 213.7 572.3 217.7 572.5 216 575.5 214.9 578.8 214.6 583 213.7 587.1 213.6 591.3 214.5 595.6 216.3 599.7 218 603.7 219.1 608 219.8 611.9 220.4 615.8 219.8 619.8 221.3 623.6 221.2 627.6 222.6 630.3 222.9 633.4 224 636.2 224.5 640.5 225.6 644.6 228.1 648.3 228.7 652.6 230.2 656.3 231 660.1 231.9 664 233.2 667.7 234.6 671.4 236.1 674.9 237.8 678.3 238.6 682 240.4 685.4 242.9 688.3 244.8 691.6 245.6 695.5 248.3 698.3 249.8 701.8 250.9 705.7 251 709.7 251.7 713.6 253.5 717.3 254 721.3 254.5 725.3 254.1 729.6 254.5 733.8 255.9 737.9 255.6 742.2 255.6 746.4 257.3 750.3 259.3 754 260.3 758.1 259.2 762.4 259.3 766.8 259.3 771.3 259 775.7 258 780 6 780ZM286.1 780 288.1 776.5 288.4 772.3 290.6 768.8 292 765.1 294 761.6 295.5 757.9 296.3 753.9 297.8 750.2 299 746.4 299.9 742.3 300.2 738.2 300.1 734.1 300.2 730 301.1 726.3 302 722.6 302.2 718.7 302.3 714.8 303.7 711.2 303.2 707.7 303.9 704.2 303.5 700.6 303.7 697.1 306.5 694.9 310.3 694.7 313.1 692.5 317.4 692.9 321.7 692.5 326 692 329.5 694.6 333 697.1 334.3 700.2 335.4 703.3 336.5 706.5 336.7 710.3 337.3 714.1 337 718 337.7 721.8 341.3 721.8 344.7 723.3 348.3 723.3 351.8 724.1 355.9 724 360 723.8 364.1 722.6 368.2 722.5 371.8 724.9 375.7 726.5 379.9 727.6 383.3 729.4 385.7 732.3 388.3 735.1 391.6 737 393.7 739.9 396.4 742.3 399.8 743.7 402.2 746.4 403.6 749.6 405.8 752.4 406.9 755.7 411.1 756.4 415.1 758.1 415.9 761.2 416 764.5 417.4 767.5 418.1 771.7 418.9 775.8 419.8 780ZM954 283 951.4 286.5 948.4 289.6 945.8 292.5 942.3 294.4 939.9 297.5 937.2 300.4 933.3 301.8 930.8 304.9 927.7 307.4 924.3 309.6 922 313.1 918.2 314.7 915.6 317.8 911.6 319.3 907.5 320.5 903.3 321.3 899.2 322.5 895.3 322.7 891.5 323.6 888 325.6 884.3 326.9 880.4 327.1 876.3 327.2 872.2 327 868.1 326.4 864 327.1 861.4 329.4 858.4 331 854.9 331.8 852.3 334.2 848.2 335.3 844.8 338 840.6 338.9 837.5 341.3 834.1 343.3 831.2 345.9 827 346.2 822.8 347.4 818.6 348 814.3 347.7 810.1 348.2 807.4 350.4 804.3 351.8 801.6 353.9 798.4 355.3 794.7 353.4 790.4 353.5 786.6 351.8 783.7 353.9 781.6 356.8 779 359.2 777.3 362.3 774.1 362.6 771 362.1 767.9 361.1 764.9 362.4 762.4 364.5 760 366.6 757 365.5 753.7 365.5 750.6 364.8 747.1 366.1 743.5 366.6 740.2 369.2 736.2 370.7 732.7 373 729.3 375.5 726 377.4 722.3 378.3 718.8 379.9 715.1 380.8 711.8 382.8 708.1 383.8 704.6 385.3 701.1 386.9 697.4 387.9 696.8 392.2 695.1 396.2 693.8 400.3 691.8 403.1 690.3 406.1 687.6 408.3 686.7 412.7 689.8 415.3 692.9 418 690.4 420.5 688.5 423.4 685.6 424.8 682.7 426.1 679.6 426.9 676.6 425.2 674.3 422.5 672.3 420.5 670.8 418 668.3 414.8 667.2 411 665.8 407.5 664.7 403.9 663.7 400.3 664.7 395.9 664.6 391.4 665.4 387.7 667.2 384.3 664.5 381.6 662.1 378.8 660.1 375.5 656.6 376.8 653 378.1 648.5 378 644.2 379 642.4 375.5 638 374.3 633.5 374.6 630.5 372.6 627.8 370.2 624.7 368.4 624.4 365.5 622.9 363.1 620.6 363.7 618.4 363.1 617.6 367.5 617.6 371.9 614.8 371.8 612.2 371 608.5 372.8 604.7 374.5 600.7 375.5 598 377.3 594.5 378.8 591 380.5 587.4 381.7 584.8 384.3 581.6 386.1 578.5 387.9 575.5 391.2 573.2 395 570.8 397.8 567.5 399.5 564.7 401.8 561.7 403.9 558.5 406 555.5 408.3 553.1 410.8 550.2 412.7 548.5 415.8 545.7 418 543.7 420.4 542.5 423.3 541 426 538.9 429.8 536 433 533.5 435.9 529.8 437.4 527 440 525 443.8 522.8 447.5 520.6 451.2 519.8 455.2 517.9 458.8 516 462.4 514.8 466.2 513.5 470 513.4 473.1 513.1 476.2 512.4 479.3 514.2 483 516.4 486.4 518.6 489.8 520.6 493.4 523.6 495.7 525.3 499 527.1 502.3 530.4 504.3 532.3 507.5 534.1 510.8 536.7 513.6 539.4 516.3 541.7 519.2 542.9 522.3 544.6 525.2 545.2 528.5 546.2 532.6 548.5 536.2 550.2 540 553.3 542.1 556.1 544.4 558.6 547.1 561.2 549.7 563.8 552.2 566.3 555.5 569.6 558 572.5 560.8 576.3 562.7 579 565.8 581.5 569.1 584.7 571.8 588.6 573.5 591.3 576.6 594.2 579.5 596.8 582.4 600.1 584.3 603.1 586.7 606.4 588.6 609.7 591 612.4 594.1 615 597.4 618.3 599.8 621.6 602.3 623.2 606.2 626.2 609.1 628.2 612.7 630.7 616 632 619.6 633.7 623.1 633.8 627.1 635.7 630.5 636.8 634.2 637.9 637.9 639.2 641.5 640.5 645.2 642.1 648.7 642.9 652.5 644.4 656.7 645.5 660.9 646.9 665.1 647.3 669.6 648.9 673.7 649.6 677.7 648.9 681.8 649.9 685.8 650.2 689.9 650.7 693.9 650.5 698 650.8 702.3 651.3 706.5 652 710.7 652 715 652 719.3 651.2 723.4 648.4 726.7 647.5 730.7 645.9 734.5 645.5 738.2 645.1 741.9 644 745.5 643.4 749.1 642.9 752.8 641.6 756.7 638.6 759.8 637.1 763.6 635 767.1 633.7 771 631.7 774 629.7 777 627.7 780 954 780ZM439.7 700.7 443.2 701 446.8 700.9 450.2 701.8 452.8 704.8 454.9 708.1 457.3 711.2 459.8 715 460.8 719.4 464.9 720.1 469 720.6 470.7 724.7 472.3 728.7 474.9 732.3 472.3 730.4 469.8 728.5 466.7 727.6 463.4 725.9 460.2 724 457.3 721.8 454.6 719.2 451.2 717.6 447.9 715.9 445.1 713.1 443.7 709.3 440.9 706.5 440.4 703.6ZM399 487 402.1 487.3 405 486 405.9 489 407 492 405 494.5 403 497 400.5 495.5 398 494 399 490.6ZM391 562 394.3 561.5 397.6 561.1 401 561 399.8 564.6 398.9 568.2 399 572 397.3 570.2 396 568 393.5 565ZM268 632 271 634 271 638.1 272.6 641.9 272.2 646 273 650 271.4 653.3 271 657 269.8 654.1 269.1 651 268 648 266.8 644 266 640 266.3 635.8ZM317 517 320.6 515.6 324 514 323.7 517.7 322 521 319.7 518.7ZM258 540 260.7 540.5 263 542 263 545.1 262 548 260.4 543.8ZM842 273 844.6 275.1 846 278 849.1 279.2 852 281 849.2 282.8 846 284 842.2 285.6 838 286 839.8 283.2 841 280 841.5 276.5ZM6.3 316.5 9 315.5 12 317 15.5 316.5 15.9 320.3 16.5 324 16.2 326.6 15 329 16 333 13.4 333.3 11 332.5 9 334 8.2 331.2 6.3 329 6.8 324.8 6 320.7ZM6 384 7.4 388.3 10 392 11.8 395.8 12.9 399.9 14 404 14.4 408.1 15.5 412 16.1 416 17 420 14.8 416.8 12 414 10.9 410 9.8 406 9 402 7.9 399.7 6 398Z" fill="#bfd9f2"/>
<path d="M624.7 480 624.8 476.9 625.6 473.9 626.4 470.8 626.4 467.7 628.6 464.6 631.3 461.9 633.5 458.8 636.1 456.1 639 453.7 641.3 450.7 644.2 448.2 645.6 445.3 647.7 442.9 651.3 442.2 654.8 440.9 658.4 440.5 661.9 439.3 665.5 439.4 669 438.5 672.5 437.9 676 437.5 679.6 437.2 683 436.8 686.3 437.8 689.7 437.3 693 438 696.4 438.3 697.7 436 699.9 434.5 702.4 436.9 705.4 438.8 708 441 708.8 444.2 709.9 447.3 710.6 450.5 707.8 451.2 705.7 453.3 703 454 702.7 456.7 702.3 459.4 701.5 462 700.2 465.1 698.6 468 696.7 470.8 695.8 474.1 694.1 477 693.2 480.1 691.3 482.7 690.6 485.8 689.4 488.7 686.7 490.6 684.1 492.7 681.4 494.6 679.1 497.1 676.5 499.2 673.3 500.3 670 501.5 666.6 502.2 663.6 503.9 660 504.9 656.5 506.3 653.1 505.1 649.6 504.5 646 504 643.3 503.1 640.6 502.2 637.8 501.6 635.6 499.4 633.2 497.4 630.7 495.5 628.4 493.4 628 490.2 626.9 487.1 626 484 625.2 482ZM41.5 690 41.9 692.1 43 694 42.2 697.1 40.6 699.9 40.1 703 39 706 38.8 709.5 37.7 712.9 37.4 716.4 37.5 720 37 723.6 37.2 727.2 36.3 730.8 35.8 734.4 36 738 34.6 741.2 34.3 744.8 33 748 32.3 751.7 32.3 755.5 31.1 759.2 31 763 29.5 760.5 28 758 26.7 755.1 26.5 752 28 748.6 28.7 745 30.3 741.6 31 738 31.7 734.8 31.5 731.6 31.6 728.4 32 725.2 32 722 32.5 718.8 33.3 715.7 32.9 712.4 34.2 709.3 34 706 34.8 702.9 35.4 699.8 36.6 696.9 38 694 39.3 691.6ZM67.2 457.2 69.8 456.4 72.5 456.3 74.3 459.3 77 461.6 75.7 463.4 74.3 465.2 72 464.1 69.9 462.5 68.3 460ZM61.9 462.5 64.6 463.4 67.8 464.9 70.8 466.9 73.7 469.3 76.1 472.3 76 475.5 77 478.5 74.6 476.2 73 473.2 70.4 471.1 68.1 468.7 65.8 466.9 64.4 464.2ZM62.8 482.9 65.4 483.3 68.1 482.9 68 486 67.2 489.1 65.1 486ZM234.7 689.3 236 686.1 236.1 688.5 237.3 690.7 236 693.9 234.9 691.7ZM238.4 701 240 698.2 240.9 700.6 241.6 703 240 705.8 239.1 703.4ZM242.2 714.2 243 711.8 243.6 713.8 243.8 715.8 243 718.2 242.8 716.2ZM236.7 723 237 720.3 238 717.7 239.3 721 238.9 723.7 238 726.3ZM244.8 730.9 246 728.4 247.2 731.1 246 733.6ZM241.7 742.3 243 740 244.3 741.7 243 744ZM248 749.3 249 745.7 249.6 748.2 250 750.7 249 754.3 248.1 751.9ZM244.1 758.9 244.4 756.4 245 754 245.9 757.1 245 759.5 245 762ZM248.7 766.7 250 763.7 251.3 765.3 250 768.3ZM230.5 676.4 232 673.5 233.5 675.6 232 678.5ZM245.4 738.5 246.3 736.2 247 733.8 248 735.6 248.6 737.5 248 739.9 247 742.2 245.7 740.6ZM239.4 746.6 241 743.7 242.2 745.4 242.6 747.4 241 750.3 240.7 748.2Z" fill="#f8f4f0"/>
<path d="M144.3 409.0 150.0 430.0 156.0 451.0 167.7 479.0 172.0 521.0 168.0 540.0 163.0 540.0M145.0 362.0 150.0 380.0 143.0 395.0 144.3 409.0M519.0 400.0 512.0 385.0 500.0 372.0 488.0 362.0M519.0 400.0 530.0 392.0 545.0 385.0 560.0 372.0M519.0 400.0 521.0 412.0 516.0 425.0M519.0 400.0 505.0 405.0 492.0 400.0M575.0 588.0 582.0 596.0 590.0 604.0 596.0 615.0M318.0 670.0 322.0 680.0 316.0 688.0M320.0 681.0 330.0 684.0 338.0 679.0M320.0 681.0 312.0 676.0 308.0 668.0M322.0 676.0 326.0 668.0 324.0 660.0M646.0 452.0 660.0 447.0 680.0 441.0 695.0 440.0M680.0 441.0 676.0 460.0 682.0 478.0 676.0 494.0M695.0 440.0 703.0 455.0 697.0 470.0 690.0 484.0 676.0 494.0 660.0 500.0 646.0 498.0M646.0 452.0 640.0 470.0 646.0 498.0M660.0 447.0 668.0 470.0 660.0 500.0M676.0 380.0 680.0 395.0 676.0 410.0 680.0 422.0M395.0 497.0 398.0 510.0 396.0 520.0" fill="none" stroke="#f1c6a0" stroke-width=".85" stroke-linejoin="round"/>
<path d="M814 314l7-2 8 2 4 6-2 7-6 5-7 1-4-7z" fill="#f4f0eb"/>
<path d="M806.500 316l2.500 1 3 7 3.500 7 5 6.500 5.500 4.500-6 1-5.500-5.500-4-8-2.500-7z" fill="#bfd9f2"/>
<path d="M322 676l6-3 5 3-2 6-6 2z" fill="#efebe6"/>
<path d="M310.3 224 315.3 230.3 331.6 236.5 350.4 256.6 365.5 280.5 378 294.3 409.4 306.8 428.2 319.3 431.5 322.5 447.9 337.7 476 364.7 499.5 388.1 520.6 397.5 532.3 409 540 415 548 425M281.4 227.8 299 246.6 314 247.2 322.2 260.4 315.3 280.5 305.2 301.8 312.8 323 315.2 330 328.5 353.1 343.6 367.3M258.8 230.3 266.3 264.1 243.8 276.7 252.5 299.3 246.3 311.8 250 323 252.2 423.1 242.8 437.1 210 451.2 207.6 474.6 202.9 486.4 205.3 502.8 212.3 519.2M200.5 224 200.5 231.5 192.3 242.8 197.3 267.9 189.2 271.7 175.4 263.5 167.8 266.7 156.5 291.7 151.5 323 156 329.5 149 345.9 153.7 360 130.2 367 111.5 388.1 106.8 409 106.8 409 116.2 432.4 123.2 455.9 120.9 486.4 130.2 507.5 134.9 521.5 127.9 540.3 118.5 559 104.5 577.8 99.8 594M134.9 521.5 142 535.6 137.3 554.3 144.3 573.1 137.3 594M127.9 540.3 132.6 559 151.3 573.1 160.7 573.1M323.2 440.9 326.8 444.4 353.4 443.5 356.9 445.3 381.8 434.7 385.3 437.3 369.3 452.4 371.1 461.3 374.7 470M384.6 434.8 370.5 451.2 365.9 474.6 370.5 486.4 361.2 507.5 354.1 512.2 356.5 521.5M520.6 666.7 525.3 676.1 526.4 697.2 524.1 715.9 525.3 734.7 506.5 744 499.5 751.1 487.8 755.8 486.6 779M646 294.3 655 296 668 299 690 301 712 298 726 300 742 305 765 308 790 311 812 313 826 322 838 333M445.6 224 440.9 235.7 436.2 268.5 424.5 282.6 417.4 268.5 415.1 254.5M560.4 228.7 583.9 266.2 595.6 285 621.4 292 646 294.3M845.3 238.1 850 231 857 228.7" fill="none" stroke="#a8c9ee" stroke-width="1" stroke-linejoin="round"/>
<path d="M151.3 224 153.7 235.7 149 242.8 160.7 256.8 177.1 261.5 184.2 285 193.5 290.8 212.3 283.8M177.1 261.5 167.8 274.4 174.8 280.3 160.7 301.4 158.4 313.1 179.5 320.1 160.7 329.5 165.4 341.2 181.8 345.9 177.1 364.7 165.4 374 160.7 388.1 170.1 399.8 174.8 409M83.4 282.6 81 299 78.7 329.5 88.1 341.2 95.1 360 99.8 365.8 118.5 364.7 130.2 374 137.3 385.8M78.7 329.5 81 364.7 78.7 388.1 83.4 409M118.5 364.7 109.2 388.1 109.2 409M52.9 224 49.4 235.7 29.4 247.4M76.3 416 90.4 444.2 99.8 470 106.8 486.4 109.2 500.4 118.5 493.4 123.2 479.3 130.2 472.3 144.3 470 146.7 460.6 142 446.5 146.7 432.4 139.6 409M109.2 500.4 111.5 519.2 106.8 540.3 102.1 540.3M118.5 493.4 132.6 519.2 137.3 535.6 144.3 540.3 153.7 526.2 163.1 540.3 167.8 540.3M170.1 409 174.8 432.4 170.1 455.9 174.8 479.3 188.9 488.7 195.9 502.8 198.2 526.2 205.3 530.9 212.3 549.7 214.6 573.1 231.1 584.8 228.7 594M186.5 535.6 193.5 530.9 205.3 530.9M174.8 479.3 184.2 472.3 191.2 486.4 202.9 491.1M226.4 533.2 238.1 528.6 240.4 542.6 252.2 545 259.2 528.6 268.6 540.3 282.6 535.6 285 526.2 299 523.9 301.4 545 326 545M263.9 540.3 266.2 561.4 275.6 573.1 270.9 594M326 535.6 335.4 530.9 342.4 549.7 356.5 554.3 365.9 563.7 361.2 573.1 354.1 582.5 351.8 594M221.7 594 226.4 608.1 234.6 619.8 240.4 621M266.2 594 268.6 608.1 263.9 624.5 273.3 636.2 285 643.2 294.4 640.9 296.7 652.6 294.4 671.4 301.4 676.1 306.1 687.8 299 692.5 297.9 699.5M351.8 594 349.4 624.5 345.9 640.9 347.1 652.6 337.7 657.3 335.4 669 326 673.7M347.1 652.6 358.8 655 375.2 662 384.6 665.5 408.1 664.3M478.4 224 471.3 238.1 469 247.4 476 259.2 490.1 260.3 494.8 270.9 513.5 274.4 525.3 273.2 531.1 280.3 530 289.6 518.2 296.7 508.9 308.4M579.2 224 590.9 228.7 602.6 226.3M753.8 224 756.2 238.1 746.8 249.8 749.2 263.9 739.8 280.3 742.1 292 723.4 301.4 704.6 324.8 702.3 341.2 687 351.8 685.9 364.7 674.1 369.3 664.8 367 655.4 371.7M709.3 235.7 716.3 228.7 730.4 238.1 756.2 238.1M930.8 270.9 936.7 287.3 941.4 289.6M885.1 252.1 894.5 238.1 903.9 235.7 910.9 224M786.7 224 784.3 231 793.7 235.7" fill="none" stroke="#a9a6bb" stroke-width=".9" stroke-dasharray="2.2 1.2" stroke-linejoin="round"/>
<path d="M953.1 311.9 880.4 345.9 819.5 374 766.7 385.8 749.2 409 728.1 444.2 698.7 495.7 665.9 516.8 657.7 518.5 646 515.7 635.5 512.2 619 502.8 614.4 479.3 616.7 460.6 628.4 452.4 646 444.2 650.7 433.6 662.9 427.8 656.5 409 661.9 426.9 656.6 410.1 642.4 409.2 633.5 400.3 631.8 394.1 637.1 387.9 633.5 383.5 622.9 381.7 605.1 387M600.7 376.4 605.1 387 607.8 393.2 603.4 399.4 587.4 411 571.4 421.6 557.3 418.9 553.7 434 527.1 453.5 529.8 464.2 521.8 473 527.1 480 527.6 495.7 551.1 512.2 558.1 518 552.2 528.6 560.8 540 565.3 544.6 573 541.5 648.9 614.5 655 667.7 661.1 722.4 655 780M597.3 434.9 593.4 439.6 587.3 440.1 582.6 436.2 582.1 430.1 586 425.4 592.1 424.9 596.8 428.8 597.3 434.9M933.2 413.2 929.5 417.6 923.8 418.2 919.4 414.5 918.8 408.8 922.5 404.4 928.2 403.8 932.6 407.5 933.2 413.2M73.7 641.6 68.6 647.8 60.6 648.5 54.4 643.4 53.7 635.4 58.8 629.2 66.8 628.5 73 633.6 73.7 641.6M62.4 670.9 57.3 677.1 49.3 677.8 43.1 672.7 42.4 664.7 47.5 658.5 55.5 657.8 61.7 662.9 62.4 670.9M95.6 695.1 91.7 699.8 85.6 700.3 80.9 696.4 80.4 690.3 84.3 685.6 90.4 685.1 95.1 689 95.6 695.1M80.9 739.6 77 744.3 70.9 744.8 66.2 740.9 65.7 734.8 69.6 730.1 75.7 729.6 80.4 733.5 80.9 739.6M711.6 594 719.8 550.8 724.5 545 732.3 543.1 760.9 548.5 783.1 565.6 778.5 594 778.5 594 773.8 597.5 758.5 603.4 718.7 610.9 712.8 608.1 710.5 601 709.3 594M78.4 530 83.9 538.4 84.6 569 79.1 592.7 81.8 599 88.1 600.4 90.9 606 97.9 603.9 113.2 610.8 131.3 610.8 141.1 603.9 149.4 591.3 181.5 574.6 189.2 559.3 192.6 560 200.3 578.8 210.1 599.7 212.2 627.6M6 399.5 9.5 410.2 15.8 420.8 16.6 431.5 36.2 454.5 50.4 486.5 68.1 507.8 78.4 530M212.3 627.5 213.5 631.5 210 720.6 211.8 728.8 198.7 758.1 204.1 779M6 758.1 21.2 727.6 23.6 699.5 31.8 680.7 42.3 676.5 49.4 679.6 52.9 692.5 47 715.9 48.2 730 53.6 740.5 49.4 749.9 51.7 755.8 47.7 762.8 40 763.3 38.4 779M326 733.5 310.8 733.5 309.6 741.7 303.7 746.4 296.7 767.5 293.2 779M326 733.5 335.4 735.8 343.6 732.3 356.5 734.7 372.9 734.7 379.9 744 382.3 755.8 394 768.7 403.4 766.3 406.9 758.1M394 768.7 398.7 779" fill="none" stroke="#9dbfd6" stroke-width="1.3" stroke-linejoin="round"/>
<path d="M99.8 224 101.3 226.3 102.1 229.1 104.8 230.6 105.6 233.4 104 236.2 102.3 238.9 101.6 242.2 99 244.3 97.8 247.3 95.7 249.8 94.4 252.8 92.4 255.3 91.7 258.6 89.4 261 88.1 263.9 86.8 266.9 86.5 270.1 86.1 273.3 84.8 276.3 83.5 279.3 83.4 282.6 80.4 281.5 77.1 282 74.1 280.4 70.9 280.8 67.6 280.8 64.6 279.8 61.6 279.1 58.8 277.7 55.7 277.3 52.9 276 52.4 279.3 53.5 282.4 54.2 285.5 54.9 288.7 55.6 291.8 55.8 295 55.1 298.3 56.4 301.4 55.1 304.2 53.2 306.6 52.2 309.6 50.5 312.1 49.3 314.9 48.2 317.8 47.4 321 47.5 324.5 46.1 327.6 45.9 331 44.7 334.2 45.9 336.9 46.4 339.7 46.3 342.6 46.5 345.5 47.7 348.2 46.4 351.1 44.4 353.4 42.3 355.7 40.4 358 37.9 359.9 35.5 361.9 34.1 364.7 33.6 368.1 32.9 371.5 31.9 374.8 30.4 378 30.1 381.5 29.8 384.9 28.3 388.1 26.9 391 25.4 393.8 24.9 397.1 23.6 400 22.6 403.1 20.8 405.8 20.1 409M6 229.9 8.3 231.7 11.3 232 13.5 233.9 16.4 234.4 18.9 235.7 18.5 238.9 17.2 241.9 17.9 245.2 17.4 248.4 15.7 251.3 15.4 254.5 12.8 255.9 10.7 257.9 8.2 259.5 6 261.5M221.7 224 220.9 227.3 218.9 230 217.4 232.9 215.3 235.5 214.6 238.9 212.5 241.5 210.3 244.1 209.5 247.4 210.5 250.7 211.6 254 212.7 257.2 213.5 260.6 214.6 263.9 213.7 267.2 213 270.6 210.8 273.5 210.6 277 209.5 280.3 210.7 282.2 212.3 283.8 214.6 281.7 217.3 280.5 220.1 279.2 223.1 278.6 225.6 276.8 228.6 276.2 231.1 274.4 234.2 273.7 237.3 273.1 240.5 274.3 243.6 273.1 246.8 273.8 249.8 272.2 253 272.7 256.1 273 259.2 272.1 257.1 274.6 255 277.3 252.2 279.1 253 282.3 254 285.5 254.9 288.7 256.2 291.9 255.9 295.4 256.8 298.6 258 301.8 259.2 304.9 262.5 306.2 265.2 308.3 268.3 309.9 271.7 311.1 274.9 312.3 277.5 314.8 281.1 315.4 283.8 317.8 282.8 320.6 279.9 322 279.3 325.1 277.1 327.1 275.6 329.5 278 330 278.2 332.4 277.5 334.7 277.1 337.1 275.6 340.2 273.7 343.1 271.8 346 271 349 270.9 352.2 273.9 353.3 277.1 353.9 280.1 353.7 283.1 353.7 286 354.8 288.5 355.9 291.3 355.9 293.9 356.2 296.6 356.6 297.1 359.4 298.8 361.8 300 364.4 300.2 367.3 303.1 368.7 305.4 370.8 307.3 373.5 308.4 375.8 309.1 378.2 309.9 380.6 312.6 379.1 315.6 378.9 318.6 378.9 321.4 377.9 324.4 376.1 328 375.5 330.5 372.6 333.9 371.7 336.9 370 340.6 369.8 343.6 368.1M343.6 368.1 344.6 370.7 343.4 373.5 344.5 376.1 343.4 378.2 342.6 380.5 341 382.3 337.7 383.1 334.9 385 331.9 386.5 328.5 386.8 326.9 389.6 326.7 392.9 325 395.6 322.9 398.1 321.4 401 320 403.6 317.7 405.6 316.6 408.4 314.2 410.3 312.9 413 310.8 415.1 309.9 417.2 308.1 418.7 306.2 420.3 303.7 420.5 301.1 421.3 298.5 422.4 295.9 423.1 293.1 423.1 289.8 422.8 286.5 422.9 283.3 424 282.2 426.6 281.5 429.3 281.6 432.1 282.4 434.7 279.9 434.7 277.5 435.1 275.3 436.4 272.9 434.3 270 432.9 268.1 433.8 266.2 434.8 266.1 437.4 265.1 439.6 263.9 441.8 260.7 442.8 257.7 444.4 254.4 445 251.6 447 248.1 447.4 245.1 448.9 242 449 238.9 449.6 236.2 451.7 233 451.5 230 452.2 226.8 452 224 453.5 221.7 455.4 220.6 458.3 218.9 460.7 217 462.9 217.3 466.3 216.8 469.6 215.2 472.7 215.1 476 214.6 479.3 214.8 482.2 216.1 484.8 216.3 487.7 216.8 490.5 217 493.4 214.2 494.8 211.1 494.8 208.4 496.6 205.3 496.9 202.9 495.7 204.8 498.5 207.4 500.6 210 502.7 212.6 504.8 214.6 507.5 215.8 510.7 215.1 514.1 215.6 517.4 217.1 520.5 217 523.9 219.5 525.8 220.5 529 223.6 530.4 224.5 533.7 227.2 535.5 228.9 538.1 231.1 540.3 232.6 543.3 234.4 546.1 237.8 547.8 239 551.1 241.8 553.2 242.6 556.7 245.1 559 245.4 562 246.3 564.9 246.3 568 247.5 570.8 250.4 572.7 253.6 573.8 256.7 575.4 259.2 577.8 259.1 580.8 258.2 583.7 257.3 586.6 256.8 589.5 254.6 591.2 251.8 592 249.8 594 249.8 597.4 248.7 600.6 248.5 604 248.6 607.4 249 610.8 248.3 614.1 247.5 617.4 245 618.4 242.4 619.2 240.4 621 238.4 622.8 235.5 623 233.4 624.5 234.4 627.7 235.1 631 235 634.3 235.6 637.6 235.7 640.9 238.4 643.1 239.4 646.5 241.5 649.1 243.5 651.8 245.1 654.7 247.9 656.8 249.8 659.6 252.6 661.3 253.9 664.6 257.3 665.7 259.6 667.9 261.7 670.4 264 672.5 266.2 674.9 267.9 677.9 268.1 681.5 269.9 684.5 270.9 687.8 271.1 691 270.7 694.2 270.8 697.5 270.9 700.7 270.1 703.4 269.7 706.3 268.6 708.9 269.7 711.8 271 714.6 273.7 716.5 274.9 719.4 276.6 722 277.7 724.9 279.1 727.6 279.4 730.4 280.7 733.1 281.4 735.9 281.5 738.8 281.5 741.7 283.6 743.7 283.9 746.8 286.1 748.7 286.8 751 287.6 753.3 287.3 755.8 285.8 758.5 283.7 760.7 281.5 762.8 281 765.8 278.7 768 277.7 770.8 277.1 773.7 274.9 776 274.4 779M343.6 368.1 344.9 371.3 344.2 374.9 345.7 378.1 346.3 381.4 347.6 384.4 348 387.6 350.6 388.6 353.5 388.5 356.2 388.8 358.7 390.3 361.3 391.3 364.1 391 366.7 392.1 367.9 389.6 368.4 386.8 367.6 383.7 367.8 380.5 366.5 377.5 366.7 374.3 366.7 371.3 366 368.4 365.7 365.5 365.4 362.5 365.8 359.6 365.8 356.6 363.6 354.7 361.7 352.6 361 349.5 358.7 347.7 360.6 345.7 361.3 343.1 362.2 340.6 364.6 339.6 366.7 338 369.1 339.7 371.7 341 374.7 341.5 377.3 342.2 380 342.2 382.6 342.4M382.3 341.2 384.4 339 386.2 336.6 388.8 334.7 389.7 331.5 392.6 330 394 327.2 397 328.2 398.9 331 402 331.9 404.2 334.3 407 335.4 409.8 336.9 412.4 338.4 415.1 340 418.1 338 420.2 335.2 422.2 332.4 423.9 329.2 426.8 327.2 429.2 329.4 431.7 331.6 433.8 334.2 435.7 331.7 436.8 328.7 438.5 326 440.5 328 442.8 329.8 444.4 332.1 446.4 334 447.9 336.5 449.4 333.9 451.4 331.5 451.9 328.4 453.8 326 456.7 325.5 459.6 324.8 460.1 327 462 328.3 464.7 327.6 467.3 326.7 469.8 325.5 472.5 324.8 475.5 324.9 478.2 324 480.7 322.5 480.7 319.4 479.9 316.2 480.7 313.1 483.1 311.1 486.5 311.2 489.1 309.7 491.8 308.5 493.9 306 497 305.4 499.5 303.7 501.1 306.1 503.4 308 504 311 505.7 313.3 507.7 315.4 511 316.1 513.2 319 516.3 320.2 519.4 321.3 522.6 320.5 525.9 320.6 529.2 320 532.3 318.9 535.3 319 537.9 320.4 540.7 321.3 543.8 321 546.4 322.5 549.1 323.8 552.1 324.2 554.6 326 554 329 552.8 331.7 551.1 334.2 549.5 336.8 546.8 338.6 545.2 341.2 546.9 343.9 547.3 347 548.7 349.8 549.2 352.9 550.4 355.8 551.1 358.8 554.3 358.6 557.3 359.9 560.4 360 563 361.6 565 363.8 567.9 365 570.1 367.1 572.2 369.3 574.4 371.1 576.5 373.1 579.2 374 582.1 374 584.9 373.4 587.8 373.2 590.5 372.3 593.3 371.7 595.7 373.7 597.6 376 599.1 378.7 599.9 377.1 600.7 375.5M382.6 342.4 384.3 345.4 387.1 347.7 387.9 351.3 390.3 353.8 392.4 356.6 393.7 358.8 396.2 359.9 397.7 361.9 397.9 365.4 400.2 368.2 400.4 371.7 402.6 372.3 404.8 371.7 405.7 368.6 406.6 365.5 408.2 367.5 409.6 369.6 411.9 370.8 412 373.5 411.4 376.1 410.5 378.7 411 381.4 409.9 383.4 408.4 385 409.3 387.6 410.1 390.3 410.4 393.2 411.9 395.6 413.7 398.5 416.2 401.1 417.2 404.5 420.2 404.4 423.2 404.7 426.1 405.4 428.8 406.4 430.6 409 433.4 410 436.1 410.9 438.5 412.5 440.4 410.1 441.4 407.1 442.9 404.5 445.4 404.1 447.3 402.4 449.2 401 452.2 400.7 455 402.1 458 401.8 460.2 403.2 462.7 404.3 465.1 405.4 467.6 406.8 469.5 409 471.7 410.8 474 412.5 474.5 415.8 474.3 419 473.1 422.2 474.2 425.3 476.7 427.6 479.6 427.8 482 429.1 484.6 430.2 484.9 433 486.4 435.5 485.6 438.2 483.9 440.5 482.2 442.7 481.1 445.3 478.2 447.2 475.5 449.4 472.2 450.6 469.9 451.6 467.3 451 465.1 452.4 461.9 452.5 458.9 451.6 455.8 451.2 452.7 450.6 451.7 452.4 450.9 454.2 452.7 456.1 453.6 458.6 451.7 460.7 449.2 462.2 447.4 464.4 445.6 466.6 445.6 465.3 448.5 467.2 452 468 454.5 470.5 458 471.4 460.4 474.2 463.5 475.6 466.7 477 468.7 479.1 471.4 480.4 474.1 481.7 476 484 478.8 485.4 481.7 486.8 485.1 486.8 487.9 488.3 490.7 489.9 493.6 491.1 492.6 493.7 493 496.6 492.4 499.3 493.7 502 495.6 504.4 496.3 507.5 498.3 509.8 500.6 509.4 503 509 505.3 509.8 506.3 513 508.3 515.6 510.4 518.3 511.2 521.5 513.8 523.6 516.2 525.9 517.8 529 520.6 530.9 523.7 532.6 525.9 535.4 528.2 538 531.1 539.9 533.4 542.5 535.8 545 536.7 547.6 537.8 550.1 537.4 552.9 538.2 555.5 540.6 555.4 542.8 556.5 545.2 556.7 546.1 559.9 545.7 563.3 546.1 566.5 546.3 569.8 546.4 573.1 548.5 574.4 550.3 576.1 552.2 577.8 554.6 576.1 556.9 574.3 559.6 576.4 561.3 579.3 562.8 582.4 565.9 584.1 568.2 586.5 569.8 589.5 572.7 590.7 574.9 593.1 578 594 577.1 596.8 574.9 598.8 573.3 601.2 572.2 603.9 569.8 605.7 572.9 607.5 574.6 610.8 577.2 613.1 580 615.2 582.7 617.4 584.1 619.6 585 622.1 586.2 624.5 585.9 628 584.5 631.2 582.9 634.3 582.4 637.7 581.3 641 580.7 644.4 580.4 647.9 578.6 649.7 576.7 651.3 574.5 652.6M308.1 418.7 309.3 421.3 310.6 423.8 310.6 426.7 311.7 429.3 312.7 432.1 314.1 434.8 313.7 438 314.4 440.9 316.1 443.5 317.4 446 317.8 448.7 318.3 451.4 317.9 454.2 320.2 456.4 323.2 457.7 325.9 456.4 328.5 455.1 330.9 454.3 333.1 452.9 335.6 452.4 338.1 454.1 340.4 456.1 342.7 458 345.4 459.5 346.3 462 345.5 464.9 347.3 467.3 347.2 470 348.2 472.2 348.3 474.6 350.6 476.6 351.8 479.3 349.9 481.8 349.7 485.1 348.7 487.9 346.8 490.5 345.9 493.4 343.9 495.9 343.4 499.2 341.2 501.6 342.5 504.8 344.8 507.5 344.3 510.9 342.9 513.9 340.5 516.4 339 519.4 338.7 522.8 337.2 525.8 335.4 528.6 335.8 530.9 335.8 533.3 336.5 535.6 338.6 537.1 341.4 536.8 343.6 537.9 346.3 535.9 348.3 533.1 351.3 531.5 353.9 529.5 356.5 527.4 358.6 524.9 361.6 523.6 364.7 522.4 367.1 520.2 369.4 518 371.3 515.9 374.1 514.8 375.3 512 378.1 510.9 379.9 508.6 382.6 510.8 385.5 512.6 389 513.5 391.6 515.7 393.5 516.9 394 519.2 396.8 520.6 400.1 520.3 403 521 405.7 522.7 408.5 522.1 411.3 522.1 414.1 521.4 417 521.4 419.8 521.5 423.1 521.1 426.4 521.2 429.6 520 432.8 518.9 436.2 519.2 439 517.6 442.2 517.2 444.7 515 447.9 514.5 451.1 514.1 454.2 515.4 457.3 515.7 458.5 518.5 459.8 521.2 461.7 523.5 463.7 525.7 465.9 527.9 466.7 530.9 469 533.7 470.4 536.9 471.8 540.1 472.2 543.8 473.8 546.9 476 549.7 477 553 476.5 556.4 476.2 559.8 477.5 563.1 478 566.4 478.3 569.7 478.4 573.1 480.7 575.6 482.4 578.5 484.7 581 486.9 583.5 487.9 586.9 490.1 589.5 493 590.2 495.6 591.7 498.5 592.3 501.3 593.3 504.2 594 505.1 596.8 505.2 599.6 505.6 602.4 505.8 605.3 506.5 608.1 506.6 611.5 508.1 614.6 509.4 617.8 509.2 621.2 510 624.5 509 627.7 508.2 631 508.1 634.4 507.2 637.6 506.5 640.9 506.1 643.7 506.2 646.6 504.7 649.3 504.7 652.2 504.2 655M504.2 655 501.1 655.9 498.1 657.3 494.8 657.3 492.7 659.3 490.1 660.8 489.6 658.1 487.8 656.1 484.5 655.6 481.2 655.5 477.9 655.5 474.6 656.1 471.3 655.4 468.2 655.4 465 655.7 461.9 655.6 458.7 655.8 455.8 657.6 452.6 657.3 449.3 657.3 446.1 656.3 442.8 655.4 439.6 655.1 436.2 655.4 433.3 655.1 430.6 656.8 427.8 657.1 424.9 657 422.1 657.3 419.8 659.2 416.7 659.7 414.6 661.9 411.5 662.5 409.2 664.3 408.3 667.5 406.3 670.2 404.3 672.9 403.4 676.1 401.7 678.2 399.4 679.8 398.6 682.7 396.3 684.3 394.8 687.1 392.9 689.6 391.3 692.4 389.3 694.8 389.6 698.2 390 701.5 391.4 704.6 392.5 707.8 392.8 711.2 393.5 714 394.5 716.8 395.7 719.5 394.8 722.7 396.3 725.3 398 728.2 399.4 731.1 399.4 734.6 400.6 737.6 402.2 740.5 403.4 742.8 405 745 405.1 747.8 406.9 749.9 408.4 752.9 408.6 756.4 410.4 759.3M494.8 657.3 495.6 659.8 497.7 661.7 498.3 664.3 501.2 665.5 504.4 665.4 507.4 666.1 510.4 666.5 513.5 666.7 516.2 667.8 517.8 670.6 520.1 672.3 522.7 673.6 525.3 674.9 527.7 673.9 529.3 672 531.1 670.2 530.1 666.8 527.6 664.3 528.9 661.4 530.6 658.8 532.3 656.1 535.6 656.3 538.5 654.6 541.6 653.9 544.8 653.8 547.9 652.7 551.1 652.6 553.6 653.9 555.8 655.4 558.5 656.3 560.4 658.5 562.9 657 565.5 655.4 567.3 653 569.8 651.4 572.1 652.2 574.5 652.6M574.5 652.6 574.9 655.5 574.7 658.5 575.5 661.4 575.7 664.3 577 667.5 577 671 578.4 674.2 578.7 677.6 580.4 680.7 582 682.8 582.3 685.7 583.9 687.8 583.2 690.8 583.8 694 581.7 696.7 581.5 699.8 581.8 702.9 580.9 705.9 580.4 708.9 580.5 711.9 582 714.7 581.7 717.8 582.7 720.6 582.7 723.4 581.8 726.2 582.1 729.1 581.4 731.8 581.5 734.7 578.7 735.9 575.5 735.8 572.7 737.2 569.8 738.2 567.6 740.1 565.5 742.1 563.2 743.8 560.7 745.1 558.1 746.4 555.1 747.1 552.4 748.8 549.5 749.8 546.4 749.9 544 749.8 541.5 749.8 539.3 748.7 537.5 751 535.9 753.4 534.4 756 532.3 758.1 530.8 760.4 529 762.4 527 764.2 525.3 766.3 523.2 768.5 522.4 771.6 520.6 774.1 518.1 776 517.1 779" fill="none" stroke="#a5a6b9" stroke-width="2" stroke-linejoin="round"/>
<g style="font-family:'Liberation Sans',sans-serif;font-kerning:none">
<text x="4.95" y="343.2" fill="#4d4d4d" style="font-size:13px;letter-spacing:0.095px;" stroke="#fff" stroke-opacity="0.85" stroke-width="3.2" stroke-linejoin="round" paint-order="stroke">gram</text>
<path d="M-2.61 350.67 -1.53 351.75 -0.59 351.48 0.76 351.48 1.30 351.88 1.30 352.69 0.63 353.37 -0.72 354.04 -0.18 355.12 0.89 354.71 1.84 354.04 2.51 352.96 2.51 351.75 1.84 350.81 0.49 350.40 -0.99 350.40 -0.05 349.33 0.63 349.06 1.70 349.06 2.78 349.60 4.40 351.48 4.26 357.00 2.91 356.33 -1.26 356.60 -2.20 355.66 -2.07 353.90 -3.01 353.77 -3.28 354.31 -3.28 355.92 -3.01 356.60 -1.80 357.54 0.09 357.68 1.30 357.41 3.32 357.41 4.26 358.21 4.40 358.62 5.47 358.62 5.47 349.19 6.82 349.06 7.63 349.19 8.71 350.54 8.71 358.08 9.78 358.08 9.78 349.19 12.07 349.06 12.07 350.13 13.42 350.27 14.23 350.94 14.77 351.88 14.77 352.69 14.09 352.83 13.15 353.50 13.15 354.85 13.69 355.39 14.77 355.52 15.57 354.98 15.98 354.17 16.65 354.31 17.46 354.85 18.54 356.33 18.54 358.08 19.61 358.08 19.61 349.33 19.88 349.06 21.37 349.06 21.37 348.11 9.92 348.11 9.38 347.04 8.71 347.04 8.57 348.92 7.49 348.11 5.61 348.11 5.07 347.04 4.40 347.04 4.26 349.86 3.32 348.79 2.51 348.25 1.57 347.98 0.36 347.98 -1.26 348.79ZM13.69 349.06 18.54 349.19 18.40 354.71 17.33 353.50 15.98 352.83 15.84 351.75 15.17 350.27 14.36 349.60 13.82 349.46 13.55 349.19ZM-22.00 348.11 -22.00 349.06 -20.38 349.19 -20.25 356.19 -19.85 357.00 -19.17 357.54 -17.15 357.54 -15.80 356.73 -14.73 355.39 -14.19 353.77 -14.19 352.69 -14.86 351.62 -18.09 350.81 -19.04 349.86 -19.17 349.19 -11.23 349.06 -11.09 354.85 -10.69 356.06 -10.15 356.60 -9.34 356.87 -7.99 356.73 -6.92 356.19 -6.65 357.27 -7.32 358.35 -7.99 358.62 -9.21 358.62 -10.42 358.08 -11.36 357.14 -12.03 355.79 -13.11 356.33 -12.71 357.14 -11.09 358.89 -10.01 359.43 -8.80 359.70 -7.05 359.43 -5.84 358.35 -5.57 356.87 -6.11 355.39 -5.17 353.50 -5.17 352.02 -5.70 351.08 -7.05 350.67 -7.72 350.94 -8.13 351.48 -8.13 352.15 -7.72 352.69 -6.24 352.69 -6.38 353.77 -6.78 354.58 -7.59 355.39 -8.40 355.79 -9.34 355.79 -9.74 355.39 -10.01 354.58 -10.01 349.33 -9.74 349.06 -4.09 349.06 -4.09 348.11 -5.97 347.98 -6.11 346.90 -6.92 345.96 -8.26 345.55 -11.36 345.42 -12.17 344.61 -12.17 343.40 -13.25 343.40 -13.25 345.02 -12.44 346.09 -10.82 346.63 -7.72 346.63 -7.05 347.17 -7.05 348.11ZM-19.04 351.21 -17.96 352.02 -16.07 352.29 -15.40 352.83 -15.40 354.04 -15.94 355.12 -16.88 356.19 -17.56 356.60 -18.50 356.60 -19.04 356.19 -19.17 355.79Z" fill="#4d4d4d" fill-rule="evenodd" stroke="#fff" stroke-opacity="0.85" stroke-width="3.2" stroke-linejoin="round" paint-order="stroke"/>
<text x="49.24" y="251.9" fill="#6f3c43" style="font-size:9.9px;letter-spacing:1.228px;font-weight:700;" stroke="#fff" stroke-opacity="0.85" stroke-width="3.2" stroke-linejoin="round" paint-order="stroke">MANIPUR</text>
<text x="9.14" y="313.1" fill="#6f3c43" style="font-size:9.9px;letter-spacing:1.222px;font-weight:700;" stroke="#fff" stroke-opacity="0.85" stroke-width="3.2" stroke-linejoin="round" paint-order="stroke">MIZORAM</text>
<text x="-33.11" y="290.2" fill="#6f3c43" style="font-size:9.9px;letter-spacing:1.012px;font-weight:700;" stroke="#fff" stroke-opacity="0.85" stroke-width="3.2" stroke-linejoin="round" paint-order="stroke">TRIPURA</text>
<text x="610.72" y="274.8" fill="#6f3c43" style="font-size:9.2px;letter-spacing:1.726px;font-weight:700;" stroke="#fff" stroke-opacity="0.85" stroke-width="3.2" stroke-linejoin="round" paint-order="stroke">GUANGXI</text>
<path d="M656.03 286.79 654.04 290.14 654.95 290.96 655.49 290.32 656.94 287.61ZM657.39 286.61 657.39 291.14 658.57 291.14 658.66 290.69 661.65 290.69 661.74 291.05 663.01 291.05 663.01 286.61ZM658.57 287.79 661.65 287.70 661.74 289.51 658.66 289.60ZM654.40 284.07 653.77 284.98 655.76 286.06 656.40 285.07ZM637.91 283.53 637.37 284.89 636.55 285.88 637.46 286.52 638.27 285.52 638.64 285.52 638.82 285.70 638.82 286.70 636.64 286.79 636.64 287.88 638.55 287.88 638.64 288.06 638.27 288.78 637.37 289.69 636.28 290.23 637.00 291.05 637.19 291.05 638.55 290.14 639.45 288.96 640.18 290.05 640.81 290.69 641.44 291.05 642.17 290.14 641.44 289.69 640.63 288.87 640.09 287.97 641.99 287.88 641.99 286.79 639.99 286.79 639.90 285.70 640.09 285.52 641.63 285.52 641.63 284.52 638.91 284.52 638.82 284.34 639.00 283.80ZM673.16 283.44 672.07 282.98 670.44 285.16 668.18 283.44 667.81 283.44 667.18 284.07 669.54 286.06 667.99 287.33 666.73 288.15 667.63 289.06 668.99 288.15 670.44 286.88 672.53 288.96 672.71 288.96 673.52 288.06 671.35 285.88 672.53 284.52ZM610.45 281.53 610.45 282.71 613.54 282.80 613.45 283.98 611.00 283.98 611.00 291.05 612.18 291.05 612.27 290.41 618.43 290.41 618.52 291.05 619.79 291.05 619.79 283.98 617.16 283.98 617.07 282.80 620.15 282.71 620.15 281.53ZM617.16 285.07 618.52 285.16 618.43 286.79 617.25 286.79 617.07 286.61ZM612.18 287.79 612.27 287.70 612.63 288.15 613.35 287.79 613.99 287.15 614.35 286.52 614.62 285.16 615.80 285.07 615.89 287.06 616.07 287.51 616.71 287.88 618.43 287.88 618.52 289.24 612.27 289.33ZM613.45 285.07 613.54 285.52 613.26 286.25 612.27 287.15 612.18 285.16ZM614.62 282.80 615.80 282.71 615.89 283.89 614.71 283.98ZM665.19 281.35 665.19 290.78 674.61 290.78 674.61 289.60 666.36 289.51 666.36 282.62 674.34 282.53 674.34 281.35ZM655.04 281.08 654.49 281.99 656.40 283.17 657.12 282.08 655.49 281.17ZM627.40 280.99 627.40 284.43 624.77 284.52 624.77 285.70 627.40 285.79 627.40 289.51 625.13 289.60 625.13 290.78 630.93 290.78 630.93 289.60 628.58 289.51 628.58 285.79 631.21 285.70 631.21 284.52 628.67 284.52 628.58 280.99ZM656.67 284.71 657.12 285.79 658.93 285.52 662.29 285.34 662.65 285.97 663.74 285.34 663.19 284.25 661.65 282.17 660.56 282.71 661.56 283.98 661.56 284.25 658.66 284.43 658.57 284.25 659.48 282.98 660.38 281.26 659.11 280.90 657.94 283.26 657.39 284.07ZM644.07 282.35 644.07 291.14 645.34 291.14 645.43 290.51 650.51 290.51 650.60 291.05 651.87 291.05 651.87 282.35 648.24 282.35 648.15 282.26 648.69 281.08 647.15 280.90 647.06 281.72 646.79 282.35ZM645.34 288.24 650.51 288.15 650.60 289.33 645.43 289.42ZM645.34 285.88 650.51 285.79 650.60 286.97 645.43 287.06ZM645.34 283.62 650.51 283.53 650.60 284.62 645.43 284.71ZM641.99 282.17 638.36 282.17 638.27 282.08 638.64 281.17 637.55 280.90 637.28 281.81 636.37 283.35 636.28 282.62 634.47 282.53 635.10 282.17 634.11 280.90 633.20 281.26 633.20 281.53 633.92 282.53 632.02 282.62 632.02 283.71 633.02 283.80 633.02 285.97 632.66 288.60 631.93 290.23 632.66 291.05 633.02 290.69 633.65 289.15 634.01 287.24 634.01 286.34 634.20 286.16 635.01 286.25 634.83 289.51 634.65 289.78 633.65 289.87 633.92 290.87 635.10 290.87 635.46 290.69 635.83 290.23 636.01 289.06 636.10 285.07 634.20 285.07 634.20 283.71 635.92 283.71 635.92 283.98 636.82 284.62 637.82 283.26 641.99 283.26ZM623.23 280.90 623.14 284.43 622.23 282.35 621.15 282.71 621.60 283.71 621.96 285.07 622.96 284.62 623.23 284.71 623.23 286.61 622.69 287.06 621.15 287.88 621.06 288.06 621.60 289.15 623.14 288.06 623.23 291.14 624.41 291.14 624.41 280.99ZM609.19 282.53 605.83 282.53 605.29 280.90 604.02 281.08 604.29 282.17 604.20 282.53 600.49 282.53 600.40 287.70 600.12 288.96 599.40 290.41 600.40 291.23 601.30 289.60 601.76 287.24 601.85 283.71 609.19 283.71Z" fill="#6f3c43" fill-rule="evenodd" stroke="#fff" stroke-opacity="0.85" stroke-width="3.2" stroke-linejoin="round" paint-order="stroke"/>
<text x="756.22" y="310.0" fill="#6f3c43" style="font-size:9.2px;letter-spacing:1.575px;font-weight:700;" stroke="#fff" stroke-opacity="0.85" stroke-width="3.2" stroke-linejoin="round" paint-order="stroke">GUANGDONG</text>
<path d="M791.61 323.13 790.37 322.87 789.93 323.84 788.69 325.44 789.66 326.15 790.99 324.46ZM795.07 323.31 796.22 324.73 797.02 325.97 798.08 325.44 797.28 324.20 796.04 322.78ZM802.33 317.37 801.09 317.11 800.56 318.17 799.41 319.41 800.47 320.12 801.45 318.97ZM803.22 316.49 803.22 320.03 801.00 320.74 798.88 321.10 799.59 322.07 800.47 321.89 800.83 321.98 800.83 326.50 801.98 326.50 802.07 326.06 806.14 326.06 806.23 326.41 807.47 326.41 807.47 321.01 804.02 320.92 806.14 319.68 806.85 318.97 807.65 319.94 808.71 319.32 808.27 318.70 806.67 317.11 806.41 317.02 805.52 317.55 806.67 318.70 806.41 318.79 805.70 318.44 805.08 319.06 804.46 319.41 804.37 316.49ZM801.98 324.73 806.14 324.64 806.23 325.08 802.07 325.17ZM801.98 323.31 806.14 323.22 806.23 323.75 802.07 323.84ZM801.98 321.98 806.14 321.89 806.23 322.34 802.07 322.43ZM787.27 318.08 783.99 318.08 783.46 316.49 782.22 316.67 782.48 317.73 782.40 318.08 778.76 318.08 778.67 323.13 778.41 324.37 777.70 325.79 778.67 326.59 779.56 324.99 780.00 322.69 780.09 319.24 787.27 319.24ZM792.23 316.40 791.52 317.91 788.78 317.91 788.78 319.06 790.90 319.15 790.19 320.21 789.31 321.01 789.75 322.25 790.19 322.07 793.21 322.16 793.21 324.99 792.85 325.26 791.70 325.17 792.05 326.41 793.03 326.41 793.91 326.15 794.36 325.61 794.36 322.16 797.28 322.07 797.28 320.92 794.45 320.92 794.36 319.59 793.21 319.59 793.12 320.92 791.17 320.83 792.50 319.06 797.81 319.06 797.81 317.91 793.21 317.91 793.12 317.82 793.56 316.93Z" fill="#6f3c43" fill-rule="evenodd" stroke="#fff" stroke-opacity="0.85" stroke-width="3.2" stroke-linejoin="round" paint-order="stroke"/>
<text x="636.48" y="467.4" fill="#6f3c43" style="font-size:9.2px;letter-spacing:1.972px;font-weight:700;" stroke="#fff" stroke-opacity="0.85" stroke-width="3.2" stroke-linejoin="round" paint-order="stroke">HAINAN</text>
<path d="M645.02 479.19 643.57 482.54 644.48 483.26 644.84 482.81 645.93 479.91ZM643.93 476.65 643.30 477.47 645.02 478.55 645.65 477.74ZM668.39 474.21 667.12 473.93 666.58 475.02 665.40 476.29 666.49 477.01 667.48 475.84ZM644.57 473.48 643.84 474.30 645.65 475.47 646.38 474.57ZM654.35 474.21 654.35 475.29 658.43 475.38 658.33 476.29 654.71 476.29 654.71 483.44 655.98 483.44 656.07 477.38 657.97 477.47 657.16 477.74 657.61 478.82 656.70 478.92 656.70 479.82 658.43 479.82 658.52 480.55 658.33 480.73 656.52 480.73 656.52 481.63 658.43 481.63 658.52 483.17 659.60 483.17 659.69 481.63 661.69 481.63 661.69 480.73 659.78 480.73 659.60 480.55 659.69 479.82 661.50 479.82 661.50 478.92 660.60 478.82 661.14 477.74 660.15 477.56 659.78 478.46 659.42 478.92 658.06 478.92 658.06 478.73 658.70 478.55 658.06 477.47 662.14 477.38 662.23 482.27 662.05 482.45 660.60 482.45 661.05 483.44 662.05 483.44 663.14 483.17 663.50 482.54 663.50 476.29 659.87 476.29 659.78 475.47 659.97 475.29 663.86 475.29 663.86 474.21 659.87 474.21 659.78 473.39 658.43 473.39 658.33 474.21ZM669.29 473.30 669.29 476.92 667.03 477.65 664.86 478.01 665.58 479.01 666.49 478.82 666.85 478.92 666.85 483.53 668.03 483.53 668.12 483.08 672.28 483.08 672.37 483.44 673.64 483.44 673.64 477.92 670.11 477.83 672.28 476.56 673.01 475.84 673.82 476.83 674.91 476.20 674.46 475.56 672.83 473.93 672.55 473.84 671.65 474.39 672.83 475.56 672.55 475.65 671.83 475.29 671.20 475.93 670.56 476.29 670.47 473.30ZM668.03 481.72 672.28 481.63 672.37 482.09 668.12 482.18ZM668.03 480.27 672.28 480.18 672.37 480.73 668.12 480.82ZM668.03 478.92 672.28 478.82 672.37 479.28 668.12 479.37ZM647.47 473.30 647.29 474.02 646.56 475.47 645.84 476.47 646.83 477.19 647.19 476.74 647.29 476.83 647.10 478.37 646.02 478.46 646.02 479.55 646.92 479.64 646.56 481.81 651.00 481.81 651.00 482.18 650.64 482.45 649.46 482.45 649.73 483.35 651.54 483.26 651.99 482.81 652.36 481.81 653.08 481.81 653.08 480.82 652.36 480.73 652.45 479.64 653.35 479.55 653.35 478.46 652.54 478.37 652.63 476.38 647.65 476.38 647.56 476.11 647.92 475.47 652.99 475.47 652.99 474.39 648.55 474.39 648.46 474.12 648.64 473.57ZM649.55 479.64 651.27 479.55 651.27 480.73 650.27 480.82 650.18 480.73 650.46 480.46ZM648.01 479.64 648.92 479.55 649.01 479.64 648.73 479.91 649.55 480.73 648.01 480.82ZM649.82 477.47 651.45 477.38 651.45 478.37 650.46 478.46 650.36 478.37 650.55 478.28 650.55 478.10ZM648.28 477.56 648.46 477.38 649.19 477.38 649.28 477.47 649.01 477.65 649.73 478.37 648.28 478.46Z" fill="#6f3c43" fill-rule="evenodd" stroke="#fff" stroke-opacity="0.85" stroke-width="3.2" stroke-linejoin="round" paint-order="stroke"/>
<text x="243.33" y="228.4" fill="#4d4d4d" style="font-size:13px;letter-spacing:0.748px;" stroke="#fff" stroke-opacity="0.85" stroke-width="3.2" stroke-linejoin="round" paint-order="stroke">Baoshan</text>
<path d="M255.00 238.30 255.00 242.71 257.90 242.71 258.02 244.46 253.95 244.57 253.95 245.39 257.32 245.50 256.63 246.55 255.11 248.06 253.60 249.11 254.18 249.81 255.00 249.34 256.74 247.71 257.90 246.20 258.02 250.50 258.95 250.50 259.07 246.20 260.23 247.83 261.74 249.34 262.55 249.81 263.14 249.11 261.97 248.29 260.35 246.67 259.53 245.50 262.79 245.39 262.79 244.57 258.95 244.46 259.07 242.71 262.09 242.71 262.09 238.30ZM255.81 239.23 261.04 239.11 261.16 241.78 255.93 241.90ZM265.11 240.62 265.11 249.34 274.88 249.34 274.99 250.39 275.92 250.39 275.92 240.62 274.99 240.62 274.88 248.41 271.04 248.29 271.04 237.83 269.99 237.83 269.88 248.41 266.04 248.29 266.04 240.62ZM253.49 237.72 251.86 240.97 250.00 243.18 250.58 244.11 251.98 242.48 252.09 242.60 252.09 250.39 252.91 250.39 252.91 240.97 254.30 238.18 254.30 237.95ZM283.94 237.60 283.36 237.95 284.17 239.46 284.06 239.69 278.25 239.69 278.25 240.62 283.94 240.74 283.83 242.60 279.64 242.60 279.64 248.76 280.57 248.76 280.57 243.64 283.83 243.53 283.94 250.39 284.87 250.39 284.99 243.53 288.48 243.64 288.48 247.71 288.01 247.95 286.15 247.83 286.50 248.76 288.36 248.76 289.06 248.53 289.41 248.06 289.41 242.60 284.99 242.60 284.87 240.74 290.68 240.62 290.68 239.69 285.45 239.69 284.29 237.60Z" fill="#4d4d4d" fill-rule="evenodd" stroke="#fff" stroke-opacity="0.85" stroke-width="3.2" stroke-linejoin="round" paint-order="stroke"/>
<text x="378.83" y="237.2" fill="#4d4d4d" style="font-size:13px;letter-spacing:0.966px;" stroke="#fff" stroke-opacity="0.85" stroke-width="3.2" stroke-linejoin="round" paint-order="stroke">Kunming</text>
<path d="M393.53 253.37 393.65 259.26 394.59 259.73 398.60 259.61 399.19 258.79 399.31 257.37 398.48 257.02 398.36 258.32 397.77 258.91 394.94 258.91 394.47 258.67 394.47 256.55 397.54 255.37 398.72 254.54 398.01 253.96 396.48 254.90 394.59 255.61 394.47 253.37ZM388.11 253.37 388.11 258.32 387.75 258.79 387.40 258.91 387.75 259.73 392.82 258.91 392.82 258.08 389.76 258.55 389.17 258.44 389.17 255.84 392.59 255.72 392.59 254.90 389.29 254.90 389.17 253.48ZM405.67 247.94 401.19 247.94 401.19 257.61 402.02 257.61 402.14 256.31 405.67 256.31ZM402.14 252.42 404.61 252.42 404.85 252.66 404.85 255.25 404.61 255.49 402.25 255.49 402.02 255.25ZM402.02 248.89 404.73 248.77 404.85 251.48 402.14 251.60ZM407.09 247.71 407.09 254.31 406.85 255.72 406.14 257.61 404.49 259.50 405.08 260.09 405.32 260.09 406.26 259.14 407.21 257.61 407.91 255.49 411.92 255.49 412.04 258.91 411.80 259.14 409.68 259.14 410.03 260.09 412.51 259.85 412.98 259.38 412.98 247.71ZM408.03 252.07 411.92 251.95 412.04 254.54 408.03 254.66ZM408.03 248.65 411.92 248.53 412.04 251.01 408.15 251.13ZM387.99 247.59 387.99 252.66 397.89 252.66 397.89 247.59ZM388.93 250.54 396.71 250.42 396.83 251.83 389.05 251.95ZM388.93 248.41 396.71 248.30 396.83 249.59 389.05 249.71ZM420.64 247.00 420.06 247.35 420.88 248.89 420.76 249.12 414.87 249.12 414.87 250.07 420.64 250.18 420.53 252.07 416.28 252.07 416.28 258.32 417.23 258.32 417.23 253.13 420.53 253.01 420.64 259.97 421.59 259.97 421.71 253.01 425.24 253.13 425.24 257.26 424.77 257.49 422.88 257.37 423.24 258.32 425.12 258.32 425.83 258.08 426.19 257.61 426.19 252.07 421.71 252.07 421.59 250.18 427.48 250.07 427.48 249.12 422.18 249.12 421.00 247.00Z" fill="#4d4d4d" fill-rule="evenodd" stroke="#fff" stroke-opacity="0.85" stroke-width="3.2" stroke-linejoin="round" paint-order="stroke"/>
<text x="403.05" y="299.9" fill="#4d4d4d" style="font-size:13px;letter-spacing:0.642px;" stroke="#fff" stroke-opacity="0.85" stroke-width="3.2" stroke-linejoin="round" paint-order="stroke">Gejiu</text>
<path d="M404.55 312.91 404.55 321.56 405.60 321.56 405.60 312.91ZM417.05 309.75 417.05 321.56 417.99 321.56 417.99 320.74 418.22 320.51 423.37 320.51 423.48 321.44 424.54 321.44 424.54 309.75ZM417.99 315.60 418.22 315.36 423.37 315.36 423.48 319.57 418.11 319.69ZM417.99 310.69 423.37 310.57 423.48 314.43 418.11 314.55ZM413.78 309.28 413.78 321.68 414.72 321.68 414.72 309.28ZM411.56 314.31 409.81 313.38 407.82 311.97 405.71 309.87 405.95 309.17 405.36 308.82 405.01 308.93 403.96 310.45 402.09 312.21 400.22 313.49 398.70 314.19 399.28 315.13 400.34 314.66 403.38 312.44 405.13 310.57 407.00 312.56 410.27 314.90 410.86 315.13ZM432.60 308.70 432.02 309.05 432.84 310.57 432.72 310.80 426.87 310.80 426.87 311.74 432.60 311.86 432.49 313.73 428.28 313.73 428.28 319.92 429.21 319.92 429.21 314.78 432.49 314.66 432.60 321.56 433.54 321.56 433.65 314.66 437.16 314.78 437.16 318.87 436.69 319.10 434.82 318.99 435.17 319.92 437.04 319.92 437.75 319.69 438.10 319.22 438.10 313.73 433.65 313.73 433.54 311.86 439.38 311.74 439.38 310.80 434.12 310.80 432.95 308.70Z" fill="#4d4d4d" fill-rule="evenodd" stroke="#fff" stroke-opacity="0.85" stroke-width="3.2" stroke-linejoin="round" paint-order="stroke"/>
<path d="M665.01 240.46 665.01 241.28 668.07 241.40 668.07 243.76 664.06 243.88 664.06 244.70 672.79 244.70 672.79 243.88 669.14 243.76 669.14 241.40 672.20 241.28 672.20 240.46 669.25 240.46 669.14 238.81 668.07 238.81 667.96 240.46ZM665.24 234.21 665.24 235.03 668.07 235.15 668.07 237.15 664.65 237.27 664.65 238.10 672.67 238.10 672.67 237.27 669.14 237.15 669.25 235.03 671.97 235.03 671.97 234.21 669.25 234.21 669.14 232.32 668.07 232.32 667.96 234.21ZM694.14 232.20 693.55 232.55 694.38 234.09 694.26 234.32 688.36 234.32 688.36 235.27 694.14 235.38 694.02 237.27 689.78 237.27 689.78 243.52 690.72 243.52 690.72 238.33 694.02 238.22 694.14 245.17 695.08 245.17 695.20 238.22 698.74 238.33 698.74 242.46 698.27 242.70 696.38 242.58 696.74 243.52 698.62 243.52 699.33 243.29 699.68 242.82 699.68 237.27 695.20 237.27 695.08 235.38 700.98 235.27 700.98 234.32 695.67 234.32 694.49 232.20ZM683.05 232.20 683.05 235.15 682.82 235.38 680.46 235.38 680.46 236.21 682.82 236.33 681.52 239.51 679.52 242.23 679.99 243.05 680.58 242.58 681.64 241.05 682.94 238.33 683.05 245.17 684.00 245.17 684.00 238.45 684.23 238.45 684.82 240.22 686.36 242.82 687.06 242.11 685.41 239.51 684.23 236.33 686.71 236.21 686.71 235.38 684.12 235.38 684.00 232.20ZM676.80 232.20 676.80 235.27 674.21 235.38 674.21 236.21 676.45 236.21 676.57 236.56 675.51 239.28 673.97 241.75 674.44 242.58 675.62 240.81 676.68 238.33 676.80 245.17 677.75 245.17 677.75 237.98 677.98 237.98 679.40 239.98 679.99 239.28 677.75 236.56 677.75 236.33 679.75 236.21 679.75 235.38 677.75 235.27 677.75 232.20ZM662.06 232.20 662.06 234.79 661.82 235.03 660.17 235.03 660.17 235.86 661.94 235.97 660.76 239.51 659.70 241.40 660.17 242.34 661.12 240.57 661.82 238.45 662.06 238.45 662.06 245.17 662.88 245.17 662.88 237.98 663.12 237.98 663.95 239.75 664.54 239.04 662.88 236.56 662.88 235.97 664.54 235.86 664.54 235.03 662.88 234.91 662.88 232.20Z" fill="#4d4d4d" fill-rule="evenodd" stroke="#fff" stroke-opacity="0.85" stroke-width="3.2" stroke-linejoin="round" paint-order="stroke"/>
<text x="775.61" y="240.9" fill="#4d4d4d" style="font-size:13px;letter-spacing:0.765px;" stroke="#fff" stroke-opacity="0.85" stroke-width="3.2" stroke-linejoin="round" paint-order="stroke">Shaoguan</text>
<path d="M793.93 256.82 793.93 262.60 794.76 262.60 794.87 261.90 798.30 261.90 798.41 262.49 799.36 262.49 799.36 256.82ZM794.76 257.76 798.30 257.65 798.41 260.95 794.87 261.07ZM787.91 256.47 787.91 262.49 788.73 262.49 788.73 262.01 788.97 261.78 792.39 261.78 792.39 256.47ZM788.73 259.53 791.45 259.42 791.57 260.95 788.85 261.07ZM788.73 257.29 791.45 257.17 791.57 258.59 788.85 258.71ZM787.20 254.34 787.20 255.17 792.98 255.17 792.98 254.34 791.33 254.22 792.04 252.45 791.92 252.22 791.33 252.10 791.10 252.33 790.51 254.34 788.85 254.22 789.56 253.87 788.85 252.10 788.14 252.33 788.73 254.22ZM793.46 250.33 793.46 251.15 795.58 251.27 795.35 252.57 794.76 253.87 793.57 255.17 793.10 255.40 793.69 256.11 794.28 255.76 795.46 254.46 796.05 253.28 796.41 251.39 796.64 251.15 798.77 251.27 798.53 254.58 797.94 255.05 796.53 254.93 796.76 255.76 798.65 255.76 799.24 255.28 799.60 253.51 799.71 250.33ZM811.75 249.85 810.81 249.62 809.98 251.39 809.16 252.57 805.50 252.57 805.50 252.33 806.21 251.98 805.62 250.80 804.79 249.74 803.96 250.09 805.38 252.45 802.55 252.57 802.55 253.51 807.15 253.51 807.27 256.11 801.72 256.23 801.72 257.17 807.03 257.29 806.44 258.59 805.03 260.01 802.66 261.31 801.48 261.66 802.19 262.49 803.61 262.01 805.85 260.71 807.39 259.18 807.98 258.00 808.92 259.42 810.46 260.95 812.46 262.13 813.41 262.49 813.64 262.37 814.23 261.54 812.70 261.07 810.93 260.01 809.39 258.47 808.69 257.29 813.88 257.17 813.88 256.23 808.33 256.11 808.57 253.51 813.17 253.51 813.17 252.57 810.34 252.45 811.75 250.21ZM821.43 249.50 820.84 249.85 821.67 251.39 821.55 251.62 815.65 251.62 815.65 252.57 821.43 252.69 821.32 254.58 817.07 254.58 817.07 260.83 818.01 260.83 818.01 255.64 821.32 255.52 821.43 262.49 822.38 262.49 822.50 255.52 826.04 255.64 826.04 259.77 825.57 260.01 823.68 259.89 824.03 260.83 825.92 260.83 826.63 260.60 826.98 260.12 826.98 254.58 822.50 254.58 822.38 252.69 828.28 252.57 828.28 251.62 822.97 251.62 821.79 249.50ZM787.44 251.15 787.44 251.86 792.87 251.86 792.87 251.15 790.98 251.15 790.27 249.50 789.44 249.74 789.80 250.68 789.68 251.15Z" fill="#4d4d4d" fill-rule="evenodd" stroke="#fff" stroke-opacity="0.85" stroke-width="3.2" stroke-linejoin="round" paint-order="stroke"/>
<text x="695.94" y="295.3" fill="#4d4d4d" style="font-size:13px;letter-spacing:0.946px;" stroke="#fff" stroke-opacity="0.85" stroke-width="3.2" stroke-linejoin="round" paint-order="stroke">Wuzhou</text>
<path d="M706.37 312.32 706.37 317.02 707.17 317.02 707.40 316.33 711.76 316.33 711.87 316.90 712.79 316.90 712.79 312.32ZM707.29 313.24 711.76 313.12 711.87 315.41 707.40 315.53ZM718.97 308.31 719.78 310.37 720.00 311.63 720.81 311.40 720.81 311.06 719.78 308.08ZM722.98 308.20 722.98 308.42 723.79 309.91 724.36 311.52 724.59 311.52 725.16 311.17 723.67 307.97ZM716.80 307.97 715.99 307.97 715.88 308.88 714.85 311.40 715.65 311.63 716.45 309.80ZM721.61 304.99 721.61 315.99 722.52 315.99 722.52 304.99ZM725.62 304.64 725.62 316.67 726.53 316.79 726.53 304.64ZM718.51 304.64 717.60 304.64 717.48 311.75 717.03 313.47 716.45 314.61 715.19 316.10 715.88 316.90 717.25 315.18 718.29 312.43 718.51 310.95ZM734.44 304.30 733.87 304.64 734.67 306.13 734.55 306.36 728.83 306.36 728.83 307.28 734.44 307.39 734.33 309.23 730.20 309.23 730.20 315.30 731.12 315.30 731.12 310.26 734.33 310.14 734.44 316.90 735.36 316.90 735.47 310.14 738.91 310.26 738.91 314.27 738.45 314.50 736.62 314.38 736.96 315.30 738.79 315.30 739.48 315.07 739.83 314.61 739.83 309.23 735.47 309.23 735.36 307.39 741.09 307.28 741.09 306.36 735.93 306.36 734.78 304.30ZM713.24 304.87 705.91 304.87 705.91 305.67 708.43 305.79 708.09 307.28 706.26 307.28 706.26 308.08 707.97 308.20 707.63 310.14 705.45 310.37 704.08 308.54 704.08 307.97 705.68 307.85 705.68 307.05 704.08 306.94 704.08 304.30 703.28 304.30 703.28 306.82 703.05 307.05 701.33 307.05 701.33 307.85 703.16 307.97 702.25 310.95 701.10 313.01 701.44 313.81 701.67 313.81 702.47 312.21 702.93 310.72 703.16 310.49 703.28 310.60 703.28 316.90 704.08 316.90 704.19 309.80 704.88 310.95 705.45 310.37 705.57 311.06 713.70 311.06 713.70 310.26 712.33 310.14 712.56 307.28 709.12 307.16 709.23 306.02 709.46 305.67 713.36 305.67ZM708.89 308.20 711.53 308.08 711.64 308.31 711.41 310.14 708.66 310.26 708.55 309.68Z" fill="#4d4d4d" fill-rule="evenodd" stroke="#fff" stroke-opacity="0.85" stroke-width="3.2" stroke-linejoin="round" paint-order="stroke"/>
<text x="585.63" y="322.5" fill="#4d4d4d" style="font-size:13px;letter-spacing:1.096px;" stroke="#fff" stroke-opacity="0.85" stroke-width="3.2" stroke-linejoin="round" paint-order="stroke">Nanning</text>
<path d="M607.05 336.40 607.05 337.23 612.50 337.35 612.50 342.44 612.26 342.68 609.89 342.68 610.25 343.63 612.74 343.51 613.33 343.16 613.56 337.23 619.13 337.23 619.13 336.40ZM596.27 336.05 597.10 337.71 595.56 337.83 595.56 338.54 598.17 338.54 598.29 340.08 595.21 340.19 595.21 340.90 598.17 340.90 598.29 343.39 599.23 343.39 599.35 340.90 602.43 340.90 602.43 340.19 599.35 340.19 599.23 338.65 602.19 338.54 602.19 337.83 600.42 337.71 601.36 336.17 600.77 335.81 600.54 335.81 599.59 337.83 597.34 337.83 597.34 337.59 597.81 337.47 597.46 336.40 596.98 335.81ZM626.71 330.60 626.12 330.96 626.95 332.50 626.83 332.73 620.91 332.73 620.91 333.68 626.71 333.80 626.59 335.69 622.33 335.69 622.33 341.97 623.28 341.97 623.28 336.76 626.59 336.64 626.71 343.63 627.66 343.63 627.78 336.64 631.33 336.76 631.33 340.90 630.86 341.14 628.96 341.02 629.32 341.97 631.21 341.97 631.92 341.73 632.28 341.26 632.28 335.69 627.78 335.69 627.66 333.80 633.58 333.68 633.58 332.73 628.25 332.73 627.07 330.60ZM607.41 332.73 607.41 335.34 608.35 335.34 608.47 333.68 617.59 333.68 617.71 335.34 618.66 335.34 618.66 332.73 613.09 332.73 613.09 332.50 613.92 332.26 613.09 330.60 612.14 330.84 612.97 332.38 612.85 332.73ZM592.60 332.14 592.60 332.97 598.29 333.09 598.17 334.63 593.43 334.63 593.43 343.75 594.38 343.75 594.50 335.46 603.14 335.46 603.26 342.68 603.02 342.92 601.01 343.04 601.36 343.75 603.02 343.75 604.09 343.39 604.33 342.56 604.33 334.63 599.47 334.63 599.35 333.09 605.04 332.97 605.04 332.14 599.47 332.14 599.35 330.60 598.29 330.60 598.29 331.90 598.05 332.14Z" fill="#4d4d4d" fill-rule="evenodd" stroke="#fff" stroke-opacity="0.85" stroke-width="3.2" stroke-linejoin="round" paint-order="stroke"/>
<text x="896.01" y="300.5" fill="#4d4d4d" style="font-size:13px;letter-spacing:0.903px;" stroke="#fff" stroke-opacity="0.85" stroke-width="3.2" stroke-linejoin="round" paint-order="stroke">Shantou</text>
<path d="M923.04 318.97 925.26 320.26 927.95 322.24 928.54 321.54 926.20 319.79 923.63 318.38ZM905.04 317.10 902.47 321.54 903.29 322.24 905.62 317.92 905.62 317.68ZM902.47 313.59 902.00 314.29 904.46 315.81 905.04 314.99ZM916.96 313.36 920.00 315.23 920.59 314.53 919.30 313.59 917.55 312.77ZM918.13 310.90 920.24 311.84 921.17 312.54 921.76 311.96 921.76 311.72 921.29 311.37 918.83 310.20 918.60 310.20ZM923.86 309.73 922.81 309.73 922.81 313.94 922.58 315.70 922.34 316.05 916.26 316.05 916.26 316.87 921.99 316.87 922.22 317.10 921.41 318.62 920.00 320.02 918.60 320.84 916.26 321.54 916.85 322.36 919.54 321.42 920.82 320.61 922.11 319.32 923.39 316.87 928.54 316.87 928.54 316.05 923.51 315.93 923.74 314.18ZM909.83 309.73 909.83 320.61 907.38 320.61 907.38 312.89 906.44 312.89 906.44 321.54 913.22 321.54 913.34 322.36 914.28 322.36 914.28 312.77 913.34 312.77 913.34 320.49 913.11 320.72 910.88 320.72 910.77 309.73ZM902.82 310.32 905.27 311.96 905.86 311.25 905.62 310.90 903.40 309.73ZM935.90 309.50 935.32 309.85 936.14 311.37 936.02 311.60 930.17 311.60 930.17 312.54 935.90 312.66 935.79 314.53 931.58 314.53 931.58 320.72 932.51 320.72 932.51 315.58 935.79 315.46 935.90 322.36 936.84 322.36 936.95 315.46 940.46 315.58 940.46 319.67 939.99 319.90 938.12 319.79 938.47 320.72 940.34 320.72 941.05 320.49 941.40 320.02 941.40 314.53 936.95 314.53 936.84 312.66 942.68 312.54 942.68 311.60 937.42 311.60 936.25 309.50Z" fill="#4d4d4d" fill-rule="evenodd" stroke="#fff" stroke-opacity="0.85" stroke-width="3.2" stroke-linejoin="round" paint-order="stroke"/>
<text x="793.53" y="345.2" fill="#4d4d4d" style="font-size:13px;letter-spacing:0.869px;" stroke="#fff" stroke-opacity="0.85" stroke-width="3.2" stroke-linejoin="round" paint-order="stroke">Hong Kong</text>
<path d="M818.24 359.86 818.24 365.23 819.05 365.23 819.29 364.77 825.48 364.77 825.60 365.23 826.53 365.23 826.53 359.86ZM819.05 362.78 825.48 362.66 825.60 363.95 819.17 364.06ZM819.05 360.68 825.48 360.56 825.60 361.84 819.17 361.96ZM830.38 356.35 829.92 357.06 831.09 357.64 832.14 358.46 832.72 357.64ZM830.73 352.97 830.62 353.32 831.79 353.90 832.72 354.72 832.95 354.72 833.42 354.02 831.32 352.62ZM835.52 352.50 835.41 354.14 833.66 354.14 833.66 354.95 835.52 355.07 835.52 356.59 833.07 356.71 833.07 357.52 835.41 357.52 835.52 357.76 834.71 359.04 833.07 360.56 832.72 360.21 832.37 360.21 830.27 364.53 831.09 365.12 832.95 361.14 833.19 361.03 833.66 361.38 835.17 359.98 835.29 364.30 835.64 364.88 836.23 365.12 841.25 365.00 841.83 364.18 841.95 363.13 841.13 362.78 841.01 363.95 840.55 364.30 836.46 364.30 836.11 363.95 836.11 362.31 840.43 362.20 840.55 359.74 842.18 361.26 842.88 360.56 841.13 359.04 840.31 357.76 840.43 357.52 842.77 357.52 842.77 356.71 840.20 356.59 840.20 355.07 842.30 354.95 842.30 354.14 840.43 354.14 840.20 353.90 840.20 352.50 839.38 352.50 839.38 353.90 839.15 354.14 836.58 354.14 836.46 352.50ZM836.11 359.98 839.38 359.86 839.50 361.38 836.23 361.49ZM835.76 359.04 836.69 357.52 839.26 357.52 840.08 358.92 839.96 359.16ZM836.46 355.07 839.26 354.95 839.38 356.59 836.58 356.71ZM828.40 355.65 822.79 355.54 822.91 353.90 826.88 353.32 826.18 352.50 822.67 353.20 817.30 353.55 817.54 354.37 821.62 354.14 821.74 355.54 816.13 355.65 816.13 356.47 820.57 356.59 818.94 358.11 817.07 359.27 815.90 359.74 816.48 360.44 817.89 359.86 819.87 358.46 821.62 356.71 821.74 359.27 822.79 359.27 822.91 356.71 824.78 358.46 826.76 359.74 828.05 360.33 828.63 359.51 826.30 358.46 823.96 356.59 828.40 356.47Z" fill="#4d4d4d" fill-rule="evenodd" stroke="#fff" stroke-opacity="0.85" stroke-width="3.2" stroke-linejoin="round" paint-order="stroke"/>
<text x="655.79" y="384.3" fill="#4d4d4d" style="font-size:13px;letter-spacing:0.782px;" stroke="#fff" stroke-opacity="0.85" stroke-width="3.2" stroke-linejoin="round" paint-order="stroke">Zhanjiang</text>
<path d="M668.82 400.72 666.56 404.78 667.27 405.37 667.51 405.25 669.42 401.44 669.42 401.20ZM683.72 400.37 681.10 404.66 681.10 404.90 681.81 405.49 684.32 401.08 684.32 400.84ZM680.50 397.39 683.01 398.94 683.60 398.10 681.34 396.79 680.98 396.79ZM666.68 396.67 666.20 397.39 668.70 398.82 669.18 397.98ZM685.27 393.93 685.27 394.88 688.37 395.00 688.37 403.70 684.56 403.82 684.56 404.78 693.50 404.78 693.50 403.82 689.44 403.70 689.44 395.00 692.66 394.88 692.66 393.93ZM681.81 392.74 681.34 393.45 683.72 395.12 684.32 394.29ZM667.27 392.74 666.80 393.45 669.18 394.88 669.66 394.17ZM671.68 392.62 671.56 394.05 670.01 394.05 670.13 394.88 671.68 395.00 671.68 400.01 669.66 400.13 669.66 400.96 670.73 401.08 670.73 405.02 678.95 405.02 678.95 404.18 671.68 404.06 671.80 400.96 674.07 401.08 672.52 403.59 672.99 403.94 673.23 403.94 674.78 401.56 674.07 401.08 674.19 400.96 676.21 400.96 676.33 401.08 675.74 401.56 677.29 403.94 678.00 403.47 676.33 401.08 679.19 400.96 679.19 400.13 677.40 400.01 677.40 395.00 679.07 394.88 679.07 394.05 677.52 394.05 677.40 392.62 676.45 392.62 676.33 394.05 672.76 394.05 672.64 392.62ZM672.64 398.94 676.33 398.82 676.45 400.01 672.76 400.13ZM672.64 396.91 676.33 396.79 676.45 397.98 672.76 398.10ZM672.64 395.00 676.33 394.88 676.45 395.96 672.76 396.08ZM700.77 392.50 700.17 392.86 701.01 394.41 700.89 394.65 694.93 394.65 694.93 395.60 700.77 395.72 700.65 397.63 696.36 397.63 696.36 403.94 697.31 403.94 697.31 398.70 700.65 398.58 700.77 405.61 701.72 405.61 701.84 398.58 705.42 398.70 705.42 402.87 704.94 403.11 703.03 402.99 703.39 403.94 705.30 403.94 706.01 403.70 706.37 403.23 706.37 397.63 701.84 397.63 701.72 395.72 707.68 395.60 707.68 394.65 702.32 394.65 701.12 392.50Z" fill="#4d4d4d" fill-rule="evenodd" stroke="#fff" stroke-opacity="0.85" stroke-width="3.2" stroke-linejoin="round" paint-order="stroke"/>
<text x="525.13" y="402.4" fill="#4d4d4d" style="font-size:13px;letter-spacing:0.841px;" stroke="#fff" stroke-opacity="0.85" stroke-width="3.2" stroke-linejoin="round" paint-order="stroke">Hà Nội</text>
<path d="M520.85 393.20 519.90 396.37 519.58 396.69 516.20 396.69 519.05 398.80 518.00 402.18 520.85 400.07 523.80 402.18 522.75 399.11 522.75 398.69 525.49 396.69 522.11 396.69 521.90 396.47Z" fill="#333" fill-rule="evenodd"/>
<text x="124.63" y="355.5" fill="#4d4d4d" style="font-size:13px;letter-spacing:0.789px;" stroke="#fff" stroke-opacity="0.85" stroke-width="3.2" stroke-linejoin="round" paint-order="stroke">Mandalay</text>
<path d="M136.33 382.04 136.33 383.72 136.63 384.79 137.55 386.01 139.08 386.77 140.60 386.77 142.28 386.01 142.89 385.40 143.50 384.18 143.66 381.74 144.73 380.67 145.64 380.21 146.71 380.21 147.93 381.12 148.39 382.04 148.54 383.26 148.08 384.64 147.47 385.25 146.41 385.70 145.03 385.40 144.57 386.47 145.34 386.77 147.47 386.62 148.85 385.70 149.76 384.03 149.76 382.19 149.15 380.67 148.08 379.60 146.71 379.14 144.88 379.29 143.96 379.75 143.05 380.67 141.21 379.29 138.62 379.29 136.94 380.67ZM139.38 380.21 140.45 380.21 141.52 380.82 142.28 382.19 142.28 383.87 141.98 384.48 141.06 385.40 140.30 385.70 138.77 385.40 138.01 384.64 137.55 383.41 138.01 381.28ZM182.89 374.86 182.13 375.78 182.28 377.61 183.50 378.38 185.03 378.22 185.95 377.00 185.79 375.63 184.73 374.71ZM183.66 375.48 184.27 375.48 185.03 376.09 185.03 376.85 184.57 377.46 183.50 377.46 183.05 377.00 183.05 376.09ZM182.74 368.76 182.13 369.52 182.28 371.35 183.20 372.12 184.73 372.12 185.49 371.66 185.95 370.74 185.79 369.37 185.18 368.76 184.42 368.45ZM183.50 369.37 184.42 369.37 185.03 369.98 184.88 370.90 184.27 371.35 183.66 371.35 183.05 370.74 182.89 370.28ZM161.37 372.12 161.37 374.56 162.13 376.54 163.20 377.61 165.18 378.38 167.02 378.38 168.24 377.92 167.78 376.85 167.02 377.15 165.49 377.15 164.42 376.70 163.35 375.63 162.89 374.41 162.89 372.12 163.35 371.05 164.57 369.83 165.49 369.52 167.17 369.67 168.54 370.74 169.46 372.27 170.83 376.09 172.21 377.61 172.97 378.07 174.04 378.38 176.94 378.07 178.62 376.85 179.69 374.71 179.69 371.96 178.92 370.13 177.40 368.76 176.02 368.30 174.04 368.30 172.82 368.76 173.28 369.83 174.04 369.52 175.41 369.52 176.63 369.98 177.55 370.74 178.01 371.66 178.31 373.34 177.86 375.32 176.48 376.85 174.50 377.15 173.58 376.85 172.36 375.78 170.07 370.28 168.08 368.61 167.02 368.30 165.34 368.30 163.35 369.06 162.13 370.28ZM154.04 368.30 152.05 369.06 150.83 370.28 149.92 372.42 149.92 374.10 150.53 375.93 152.05 377.61 153.89 378.38 155.87 378.38 157.70 377.61 158.62 376.70 159.38 375.02 157.25 373.64 155.87 373.34 153.89 373.49 151.75 374.56 151.44 374.10 151.44 372.42 151.75 371.51 152.51 370.44 154.34 369.52 155.57 369.52 156.79 369.98 157.55 370.74 158.01 371.66 159.23 371.20 158.62 369.98 157.70 369.06 155.87 368.30ZM152.21 375.93 152.66 375.32 154.50 374.56 156.63 374.71 157.70 375.32 156.94 376.54 155.57 377.15 153.58 377.00ZM141.37 368.91 140.45 370.28 140.45 371.20 140.76 371.81 141.37 372.42 146.10 374.41 146.71 375.17 146.56 376.24 146.10 376.39 144.42 375.02 142.59 374.10 140.15 373.80 138.92 374.25 138.16 375.02 138.01 376.24 138.31 377.00 139.38 377.92 141.37 378.38 144.88 378.38 145.95 378.07 146.86 378.38 147.78 377.92 147.32 377.46 148.08 376.24 148.08 374.56 147.78 373.95 146.25 372.88 142.59 371.66 141.83 370.90 141.98 370.13 142.89 369.52 144.73 369.52 146.25 370.44 146.56 370.44 147.32 369.52 145.49 368.45 142.89 368.30ZM139.23 375.93 140.15 375.02 141.21 375.02 142.89 375.63 144.73 377.00 140.91 377.15 139.69 376.70ZM128.24 368.30 126.71 370.13 126.10 371.96 126.10 374.41 126.86 376.24 128.08 377.46 129.61 378.22 131.90 378.38 133.73 377.77 135.41 376.24 136.18 374.41 136.18 371.96 135.41 369.98 133.89 368.30 132.97 369.37 134.04 370.44 134.50 371.35 134.50 374.41 133.12 373.49 131.75 373.19 129.61 373.34 127.78 374.41 127.63 371.81 127.93 370.90 129.15 369.37ZM128.24 375.63 128.85 375.02 130.22 374.41 132.21 374.41 132.97 374.71 134.04 375.63 133.43 376.39 131.90 377.15 129.92 377.00 128.85 376.39Z" fill="#4d4d4d" fill-rule="evenodd" stroke="#fff" stroke-opacity="0.85" stroke-width="3.2" stroke-linejoin="round" paint-order="stroke"/>
<text x="163.13" y="445.3" fill="#4d4d4d" style="font-size:13px;letter-spacing:0.427px;" stroke="#fff" stroke-opacity="0.85" stroke-width="3.2" stroke-linejoin="round" paint-order="stroke">Nay Pyi Taw</text>
<path d="M217.95 462.10 218.06 463.82 218.75 465.19 219.90 466.11 221.16 466.45 222.30 466.45 223.45 466.11 224.70 465.08 225.39 463.59 225.39 461.42 226.54 460.27 227.57 459.81 228.60 459.81 229.28 460.04 230.09 460.73 230.54 461.76 230.66 463.13 230.31 464.28 229.28 465.31 228.71 465.54 227.45 465.54 226.77 465.31 226.42 466.11 226.88 466.34 228.94 466.45 230.31 465.88 231.12 465.08 231.69 463.71 231.80 462.22 231.46 460.96 232.49 460.16 233.52 459.81 234.78 459.81 235.58 460.16 236.27 460.73 236.84 461.87 236.84 463.48 236.50 464.39 235.70 465.19 234.89 465.54 233.75 465.54 233.18 465.31 232.72 466.11 233.75 466.45 235.12 466.45 235.92 466.22 237.07 465.42 237.99 463.59 237.99 461.87 237.41 460.50 236.50 459.58 234.78 458.90 233.41 458.90 232.49 459.13 230.89 460.16 230.20 459.47 228.71 458.90 227.45 458.90 225.85 459.47 224.82 460.50 224.02 459.58 223.22 459.13 222.30 458.90 221.04 458.90 219.55 459.47 218.87 460.04 218.18 461.19ZM221.16 459.81 222.19 459.81 222.87 460.04 223.67 460.73 224.25 461.99 224.25 463.48 224.02 464.16 223.10 465.19 222.19 465.54 221.38 465.54 220.35 465.19 219.32 464.05 219.09 463.25 219.09 462.10 219.32 461.30 220.01 460.39ZM212.45 458.90 211.65 459.13 210.74 459.70 209.94 460.61 209.48 461.76 209.48 463.59 210.28 465.19 211.42 466.11 212.45 466.45 213.94 466.45 214.86 466.11 216.00 465.08 216.46 463.82 215.20 463.02 213.83 462.67 212.34 462.79 210.74 463.59 210.51 462.67 210.74 461.42 211.65 460.27 212.68 459.81 213.60 459.81 214.74 460.27 215.55 461.53 216.35 461.07 216.35 460.84 215.89 460.04 215.09 459.35 213.83 458.90ZM211.08 464.51 211.65 464.05 212.80 463.59 214.40 463.71 215.32 464.28 214.52 465.19 213.71 465.54 212.11 465.42ZM195.85 459.58 195.05 460.39 194.71 461.07 195.62 461.53 195.97 460.84 196.54 460.27 197.23 459.93 198.95 459.93 199.40 460.16 200.20 461.07 200.55 462.90 200.09 464.39 199.29 465.19 198.49 465.54 197.57 465.54 196.77 465.19 195.97 464.51 195.62 463.82 194.71 464.28 194.71 470.35 194.94 471.38 195.40 472.06 196.08 472.52 196.88 472.75 205.81 472.75 206.73 472.41 207.65 471.26 207.76 469.89 206.73 469.89 206.50 471.15 205.70 471.83 196.88 471.83 196.43 471.61 195.85 470.69 195.85 465.88 195.97 465.77 197.00 466.34 198.72 466.45 200.20 465.88 201.12 464.85 201.92 465.77 203.07 466.34 204.67 466.45 206.27 465.88 207.30 464.85 207.88 463.02 207.65 461.19 206.96 459.93 206.27 459.35 205.01 458.90 203.52 458.90 202.61 459.24 202.95 460.04 203.64 459.81 204.67 459.81 205.59 460.16 206.39 461.07 206.73 462.10 206.62 463.59 206.04 464.74 205.13 465.42 203.64 465.54 202.72 465.19 201.69 464.05 201.58 461.53 201.12 460.50 200.32 459.58 198.72 458.90 197.34 458.90ZM168.49 458.90 167.23 459.35 166.09 460.39 165.40 462.22 165.51 463.59 166.20 465.08 167.23 466.00 168.38 466.45 169.98 466.45 170.90 466.11 171.93 465.19 172.50 463.82 171.24 463.02 169.87 462.67 168.38 462.79 166.77 463.59 166.54 463.02 166.66 461.64 167.00 460.96 167.80 460.16 168.72 459.81 169.64 459.81 170.55 460.16 171.24 460.84 171.47 461.42 172.38 460.96 171.81 459.93 170.67 459.13 169.87 458.90ZM167.12 464.51 167.69 464.05 168.83 463.59 169.98 463.59 171.24 464.16 171.12 464.62 170.55 465.19 169.64 465.54 168.15 465.42ZM177.19 458.78 176.39 459.01 175.59 459.70 175.36 460.16 175.36 461.19 175.59 461.64 176.28 462.22 178.91 463.36 179.37 463.93 179.25 464.96 178.91 465.31 178.11 465.54 177.54 463.59 176.85 462.90 176.16 462.67 175.25 462.67 174.33 463.13 173.76 463.93 173.64 464.62 173.76 465.19 174.56 466.11 176.85 466.57 176.85 472.75 177.99 472.75 177.99 466.45 179.02 466.22 180.17 465.42 180.40 464.85 180.40 463.59 179.94 462.79 179.48 462.45 177.08 461.53 176.39 460.96 176.39 460.27 177.08 459.70 178.22 459.81 179.14 460.50 179.83 459.81 178.80 459.01ZM174.67 464.16 175.36 463.59 176.16 463.71 176.73 464.39 176.85 465.42 175.70 465.54 175.13 465.31 174.67 464.85ZM235.35 452.83 234.55 452.60 233.29 452.71 232.60 453.06 231.92 453.86 231.69 454.66 231.80 455.92 232.15 456.72 233.18 457.64 233.75 456.95 232.83 455.92 232.83 454.20 233.86 453.40 234.55 453.40 235.47 454.20 236.15 453.74 236.15 453.52ZM205.59 452.83 204.78 452.60 203.52 452.71 202.84 453.06 202.15 453.86 201.92 454.66 202.04 455.92 202.38 456.72 203.41 457.64 203.98 456.95 203.07 455.92 203.07 454.20 204.10 453.40 204.78 453.40 205.70 454.20 206.39 453.74 206.39 453.52ZM183.83 452.71 182.69 453.63 182.34 454.43 182.23 455.46 182.23 469.89 182.46 471.26 183.26 472.29 184.41 472.75 190.01 472.75 190.82 472.52 191.73 471.83 192.19 470.69 192.19 464.39 192.53 463.48 192.53 461.64 192.30 460.84 191.73 459.81 190.82 458.90 190.13 459.70 190.93 460.50 191.27 461.19 191.39 463.36 191.05 464.28 190.47 464.96 189.33 465.54 188.30 465.54 187.04 464.96 186.47 464.28 186.12 463.36 186.12 461.53 186.35 460.84 187.27 459.70 186.69 458.90 185.78 459.70 185.32 460.50 184.98 461.64 184.98 463.48 185.55 464.85 186.47 465.77 187.27 466.22 188.18 466.45 189.33 466.45 190.24 466.22 190.93 465.77 191.16 465.88 191.16 470.35 190.93 471.15 190.01 471.83 184.41 471.83 183.49 470.92 183.37 454.89 183.60 454.20 184.41 453.52 190.01 453.52 190.93 454.20 191.16 455.81 192.19 455.81 192.08 454.20 191.27 453.06 190.01 452.60Z" fill="#4d4d4d" fill-rule="evenodd" stroke="#fff" stroke-opacity="0.85" stroke-width="3.2" stroke-linejoin="round" paint-order="stroke"/>
<path d="M157.85 443.00 156.90 446.17 156.58 446.49 153.20 446.49 156.05 448.60 155.00 451.98 157.85 449.87 160.80 451.98 159.75 448.91 159.75 448.49 162.49 446.49 159.11 446.49 158.90 446.27Z" fill="#333" fill-rule="evenodd"/>
<text x="17.61" y="429.6" fill="#4d4d4d" style="font-size:13px;letter-spacing:0.793px;" stroke="#fff" stroke-opacity="0.85" stroke-width="3.2" stroke-linejoin="round" paint-order="stroke">Sittwe</text>
<path d="M53.74 451.73 52.91 452.32 52.32 453.39 52.20 454.21 52.55 455.63 53.03 456.22 53.85 456.70 55.74 456.70 56.81 455.87 57.28 455.04 57.16 453.15 56.93 452.68 55.86 451.73ZM54.44 452.44 55.15 452.44 55.63 452.68 56.34 453.86 56.34 454.69 55.98 455.39 55.15 455.99 53.97 455.75 53.50 455.28 53.26 454.69 53.26 453.74 53.50 453.15ZM44.40 446.06 44.40 447.95 44.99 449.37 46.17 450.43 47.59 450.90 48.77 450.90 49.72 450.67 51.25 449.60 51.84 448.54 52.08 447.59 51.96 445.82 53.14 444.52 54.21 444.05 55.74 444.17 56.93 445.11 57.40 446.17 57.40 447.83 57.16 448.54 56.22 449.60 55.51 449.96 54.09 449.96 53.50 449.72 53.14 450.31 53.26 450.67 54.09 450.90 55.63 450.90 56.93 450.43 57.75 449.72 58.58 447.95 58.58 446.17 58.11 444.87 56.81 443.57 55.39 443.10 54.09 443.10 52.91 443.46 52.20 443.93 51.49 444.76 51.02 444.17 49.72 443.34 48.77 443.10 47.00 443.22 45.82 443.81 45.11 444.52ZM47.71 444.05 48.65 444.05 49.60 444.40 50.43 445.23 50.90 446.77 50.78 448.07 50.31 449.01 49.60 449.60 48.65 449.96 47.00 449.72 46.05 448.89 45.58 447.95 45.58 446.17 45.82 445.47 46.76 444.40ZM38.72 443.10 37.19 443.69 36.24 444.64 35.53 446.29 35.53 447.59 36.00 449.01 37.19 450.31 38.60 450.90 40.14 450.90 41.56 450.31 42.27 449.60 42.86 448.30 41.21 447.24 40.14 447.00 38.60 447.12 36.95 447.95 36.71 447.59 36.71 446.29 36.95 445.58 37.54 444.76 38.96 444.05 39.91 444.05 40.85 444.40 41.44 444.99 41.80 445.70 42.74 445.35 42.27 444.40 41.56 443.69 40.14 443.10ZM37.30 449.01 37.66 448.54 39.08 447.95 40.73 448.07 41.56 448.54 40.97 449.48 39.91 449.96 38.37 449.84ZM28.68 443.22 27.49 443.81 26.31 445.35 26.07 446.06 26.07 447.95 26.67 449.37 27.49 450.19 28.32 450.67 29.38 450.90 30.57 450.90 31.51 450.67 32.69 449.96 33.64 448.66 33.88 447.83 33.88 446.17 33.64 445.35 33.17 444.52 31.87 443.46 30.68 443.10ZM27.97 444.87 28.44 445.35 28.91 446.65 28.79 447.95 28.08 449.13 27.49 448.66 27.02 447.36 27.26 445.82ZM28.91 444.17 30.92 444.17 31.75 444.64 32.58 445.82 32.58 448.18 32.10 449.01 31.04 449.84 29.50 449.96 28.91 449.72 29.62 448.66 29.98 447.36 29.86 446.06 29.50 445.23 28.79 444.40ZM19.10 443.22 17.92 443.81 16.74 445.35 16.50 446.06 16.50 447.95 17.09 449.37 17.92 450.19 18.75 450.67 19.81 450.90 20.99 450.90 21.94 450.67 23.12 449.96 24.07 448.66 24.30 447.83 24.30 446.17 24.07 445.35 23.59 444.52 22.29 443.46 21.11 443.10ZM18.39 444.87 18.86 445.35 19.34 446.65 19.22 447.95 18.51 449.13 17.92 448.66 17.45 447.36 17.68 445.82ZM19.34 444.17 21.35 444.17 22.17 444.64 23.00 445.82 23.00 448.18 22.53 449.01 21.46 449.84 19.93 449.96 19.34 449.72 20.05 448.66 20.40 447.36 20.28 446.06 19.93 445.23 19.22 444.40ZM31.16 436.84 30.33 436.60 29.03 436.72 28.20 437.19 27.61 438.02 27.61 440.26 28.08 441.09 28.91 441.80 29.38 441.45 29.50 441.09 28.56 439.91 28.56 438.49 28.79 438.02 29.62 437.43 30.33 437.43 31.39 438.25 32.10 437.66Z" fill="#4d4d4d" fill-rule="evenodd" stroke="#fff" stroke-opacity="0.85" stroke-width="3.2" stroke-linejoin="round" paint-order="stroke"/>
<text x="228.04" y="483.5" fill="#4d4d4d" style="font-size:13px;letter-spacing:0.676px;" stroke="#fff" stroke-opacity="0.85" stroke-width="3.2" stroke-linejoin="round" paint-order="stroke">Chiang Mai</text>
<path d="M282.67 491.99 282.67 500.20 283.70 500.32 283.96 499.04 284.85 500.07 286.01 500.45 287.04 500.45 288.32 500.07 289.09 499.30 289.47 498.02 289.47 491.99 288.19 491.99 288.19 498.02 287.93 498.66 287.42 499.17 286.78 499.43 285.11 499.17 284.34 498.40 283.96 497.25 283.96 491.99ZM273.70 491.99 273.70 500.32 274.98 500.32 274.98 497.12 276.65 495.45 277.80 495.58 278.70 496.35 278.96 497.25 278.96 500.32 280.11 500.32 280.11 496.48 279.85 495.84 278.96 494.94 277.67 494.43 279.98 491.99 278.57 491.99 275.11 495.58 274.98 492.12ZM259.72 492.12 262.16 500.20 263.82 500.32 265.36 499.68 266.26 498.66 266.90 496.86 266.90 494.94 266.39 493.40 265.87 492.76 264.72 492.12 262.54 492.12 262.80 493.14 263.95 493.01 265.23 493.91 265.75 495.84 265.49 497.37 264.98 498.40 264.34 499.04 263.31 499.30 262.93 498.66 261.00 492.25ZM239.20 491.99 239.20 499.55 239.71 500.20 240.23 500.45 241.76 500.32 241.64 499.43 240.74 499.43 240.35 498.91 240.35 491.99ZM252.92 491.99 251.77 492.89 251.51 493.66 251.51 494.30 251.90 495.19 252.92 495.84 251.77 496.73 251.64 498.79 252.15 499.68 253.44 500.32 256.51 500.32 257.80 499.43 258.18 498.53 258.31 491.99 257.03 491.99 257.03 498.02 256.64 498.91 255.62 499.43 254.20 499.43 253.56 499.17 252.92 498.53 252.79 497.50 253.05 496.86 253.95 496.35 254.85 496.35 254.97 495.45 254.08 495.45 253.18 495.07 252.79 494.55 252.79 493.78 253.31 493.01 255.10 493.01 255.23 492.50 255.10 491.99ZM242.92 492.12 243.18 493.01 244.07 492.89 244.59 493.53 243.18 496.22 243.18 498.14 243.69 499.55 244.59 500.20 245.61 500.45 246.89 500.45 248.05 500.07 248.69 499.43 249.07 498.53 249.07 495.19 248.82 494.68 248.18 494.17 249.07 493.27 249.20 491.99 248.05 491.99 247.92 493.01 247.15 493.78 246.64 493.78 246.64 494.55 247.15 494.55 247.79 495.32 247.79 498.53 247.15 499.30 246.77 499.43 245.23 499.30 244.46 498.27 244.46 496.22 245.61 494.17 245.74 493.53 245.36 492.25 244.33 491.86ZM249.20 488.40 248.05 488.40 247.92 489.68 243.69 489.68 242.79 490.06 242.79 490.58 249.20 490.58ZM288.19 487.50 288.19 490.58 289.47 490.58 289.47 487.50ZM269.34 487.50 268.18 487.88 268.18 488.91 269.08 488.53 270.11 488.53 270.75 489.04 270.75 489.94 269.59 491.48 269.21 492.37 269.21 499.30 269.47 499.94 269.98 500.32 271.39 500.45 271.90 500.20 271.77 499.43 270.88 499.43 270.49 499.04 270.49 492.37 271.90 490.19 272.03 489.04 271.65 488.14 271.13 487.76Z" fill="#4d4d4d" fill-rule="evenodd" stroke="#fff" stroke-opacity="0.85" stroke-width="3.2" stroke-linejoin="round" paint-order="stroke"/>
<text x="404.44" y="515.0" fill="#4d4d4d" style="font-size:13px;letter-spacing:0.628px;" stroke="#fff" stroke-opacity="0.85" stroke-width="3.2" stroke-linejoin="round" paint-order="stroke">Vientiane</text>
<path d="M446.31 523.30 446.31 524.17 447.18 524.17 447.43 524.42 447.43 529.54 446.68 530.91 447.56 531.53 448.31 530.41 449.43 531.29 450.18 531.53 451.43 531.53 452.68 531.04 453.43 530.16 453.68 529.41 453.68 523.30 452.55 523.30 452.55 528.79 452.30 529.66 451.18 530.54 449.93 530.54 448.81 529.54 448.68 524.42 448.43 523.67 447.68 523.17ZM438.82 523.42 438.20 523.79 438.20 524.79 439.82 524.17 441.57 524.17 442.31 524.42 443.06 525.17 443.44 526.29 443.31 529.04 442.94 529.79 441.94 530.41 441.32 530.29 441.07 528.29 440.69 527.17 439.82 526.67 438.82 526.67 438.44 526.92 438.69 527.66 439.44 527.66 439.94 528.29 440.32 531.29 441.94 531.41 443.31 530.91 444.06 530.16 444.56 528.91 444.69 526.92 444.19 524.79 443.19 523.67 442.31 523.30 440.19 523.17ZM433.33 523.17 432.33 523.55 432.45 524.17 434.08 524.17 434.82 524.79 434.82 532.03 434.57 532.53 433.83 533.03 432.70 533.03 431.45 532.53 431.45 533.66 432.70 534.03 434.20 534.03 435.32 533.53 435.95 532.53 436.07 524.67 435.82 523.92 435.07 523.30ZM425.09 523.17 423.84 523.92 423.59 524.79 423.84 525.92 424.46 526.54 425.46 527.04 428.46 528.04 429.21 528.79 429.46 529.54 429.46 532.66 429.33 533.16 428.58 533.91 427.96 534.16 426.46 534.16 425.71 533.91 425.21 533.41 425.21 532.16 424.09 531.66 423.84 532.28 423.84 533.16 424.34 534.16 425.46 534.91 426.34 535.16 428.58 535.03 429.46 534.66 430.21 533.91 430.58 533.16 430.58 528.91 430.21 528.16 429.46 527.42 425.21 525.79 424.84 525.29 424.84 524.54 425.34 524.17 426.21 524.17 428.58 525.17 429.58 525.17 430.46 524.54 430.58 523.30 429.46 523.30 429.21 524.17 428.46 524.17 426.71 523.30ZM415.47 523.67 415.35 524.79 417.10 524.17 418.85 524.17 419.97 524.67 420.47 525.29 420.84 526.29 420.84 528.41 420.34 529.66 419.47 530.41 417.47 530.54 416.47 529.91 416.22 529.41 416.35 528.66 415.22 528.29 415.10 529.79 415.35 530.29 416.60 531.29 417.60 531.53 419.22 531.53 420.72 530.91 421.72 529.66 422.09 528.04 421.97 525.79 421.34 524.42 420.34 523.55 418.85 523.17 417.22 523.17ZM440.57 520.17 440.69 521.30 441.57 521.80 446.31 521.80 446.31 520.92 442.19 520.92 441.69 520.42 441.82 519.80 440.69 519.80Z" fill="#4d4d4d" fill-rule="evenodd" stroke="#fff" stroke-opacity="0.85" stroke-width="3.2" stroke-linejoin="round" paint-order="stroke"/>
<text x="580.01" y="597.1" fill="#4d4d4d" style="font-size:13px;letter-spacing:0.653px;" stroke="#fff" stroke-opacity="0.85" stroke-width="3.2" stroke-linejoin="round" paint-order="stroke">Đà Nẵng</text>
<text x="344.13" y="678.4" fill="#4d4d4d" style="font-size:13px;letter-spacing:0.726px;" stroke="#fff" stroke-opacity="0.85" stroke-width="3.2" stroke-linejoin="round" paint-order="stroke">Bangkok</text>
<path d="M337.12 694.83 337.12 695.66 337.48 695.54 337.71 695.78 337.71 697.44 338.78 697.44 338.78 695.42 338.54 694.94 337.95 694.71ZM394.60 686.04 394.60 691.14 394.72 692.21 395.07 692.93 395.90 693.64 397.92 693.88 399.23 693.28 399.71 692.57 399.94 692.93 399.94 693.76 400.89 693.76 400.89 686.04 399.71 686.04 399.59 691.50 398.64 692.69 397.92 692.93 396.74 692.81 395.90 691.98 395.79 686.04ZM380.58 686.04 380.58 693.76 381.77 693.76 381.77 690.91 383.32 689.24 384.39 689.36 385.22 690.08 385.45 690.67 385.45 693.76 386.64 693.76 386.64 690.91 386.40 689.84 385.69 688.89 384.27 688.29 386.52 686.04 385.10 686.04 381.89 689.36 381.77 686.04ZM371.92 686.04 371.92 693.76 372.75 693.76 372.98 692.45 373.82 693.52 374.88 693.88 375.95 693.88 377.38 693.28 378.09 691.86 378.09 686.04 376.90 686.04 376.90 691.74 376.55 692.45 375.72 692.93 374.41 692.81 373.93 692.57 373.22 691.74 372.98 690.67 372.98 686.04ZM361.35 686.04 362.65 693.76 363.84 693.76 365.62 687.82 367.28 693.64 368.47 693.76 369.90 686.04 368.71 686.04 367.76 691.98 366.10 686.04 365.03 686.16 363.60 691.74 363.37 691.98 362.53 686.16ZM349.23 686.04 349.23 693.04 349.71 693.64 350.18 693.88 351.61 693.76 351.49 692.93 350.66 692.93 350.30 692.45 350.30 686.04ZM340.21 686.16 342.58 693.76 344.01 693.76 345.31 693.28 346.26 692.21 346.86 690.67 346.86 688.65 346.15 686.99 344.84 686.16 342.82 686.16 343.06 687.11 344.13 686.99 344.72 687.23 345.43 687.94 345.79 689.13 345.67 690.67 345.31 691.62 344.48 692.57 343.53 692.81 341.39 686.16ZM413.24 686.04 411.94 686.87 411.70 687.34 411.70 688.53 411.94 689.01 412.77 689.72 415.50 690.79 416.09 691.50 416.09 692.09 415.74 692.57 414.91 692.93 413.48 692.93 411.94 692.45 411.58 693.40 413.36 693.88 415.62 693.76 416.92 692.93 417.28 691.98 417.16 690.91 416.33 689.96 415.74 689.60 413.24 688.65 412.89 688.29 412.77 687.82 412.89 687.46 413.72 686.87 415.62 686.87 416.81 687.34 416.81 686.28 415.50 685.92ZM387.95 686.28 387.83 687.34 389.02 686.87 390.09 686.87 390.92 687.46 391.04 693.76 392.22 693.76 392.22 687.46 391.99 686.87 391.39 686.28 390.09 685.92 389.25 685.92ZM353.27 686.04 353.27 693.76 354.34 693.76 354.46 688.41 355.29 687.23 356.12 686.87 357.31 686.99 358.14 687.70 358.26 693.76 359.45 693.76 359.45 688.06 358.85 686.63 357.43 685.92 356.24 685.92 355.05 686.39 354.34 687.23 353.98 686.04ZM335.46 686.04 334.15 686.87 333.91 687.34 333.91 688.53 334.15 689.01 334.98 689.72 337.71 690.79 338.31 691.50 338.31 692.09 337.95 692.57 337.12 692.93 335.69 692.93 334.15 692.45 333.79 693.40 335.58 693.88 337.83 693.76 339.14 692.93 339.49 691.98 339.38 690.91 338.54 689.96 337.95 689.60 335.46 688.65 335.10 688.29 334.98 687.82 335.10 687.46 335.93 686.87 337.83 686.87 339.02 687.34 339.02 686.28 337.71 685.92ZM326.31 686.63 325.60 687.70 325.60 688.53 327.14 689.24 326.19 689.72 325.84 690.19 325.72 693.76 326.91 693.76 326.91 690.55 327.62 689.72 328.21 689.60 328.33 689.01 327.03 688.41 326.79 687.94 327.50 687.11 328.21 686.87 329.28 686.87 330.47 687.58 330.83 688.65 330.83 693.76 331.89 693.76 331.89 687.94 331.66 687.23 330.83 686.39 329.04 685.92 327.14 686.16ZM404.46 686.28 403.74 686.99 403.39 688.06 403.39 693.64 404.57 693.64 404.57 691.62 405.29 690.67 406.00 690.43 407.07 690.43 407.07 689.48 405.52 689.60 404.69 690.31 404.57 690.19 404.69 687.70 405.17 687.11 406.00 686.75 407.07 686.75 408.26 687.46 408.61 688.77 408.61 693.64 409.68 693.64 409.68 687.94 409.09 686.63 408.14 686.04 406.83 685.80 405.29 685.92Z" fill="#4d4d4d" fill-rule="evenodd" stroke="#fff" stroke-opacity="0.85" stroke-width="3.2" stroke-linejoin="round" paint-order="stroke"/>
<path d="M319.55 677.20 318.60 680.37 318.28 680.69 314.90 680.69 317.75 682.80 316.70 686.18 319.55 684.07 322.50 686.18 321.45 683.11 321.45 682.69 324.19 680.69 320.81 680.69 320.60 680.47Z" fill="#333" fill-rule="evenodd"/>
<text x="490.23" y="762.3" fill="#4d4d4d" style="font-size:13px;letter-spacing:0.550px;" stroke="#fff" stroke-opacity="0.85" stroke-width="3.2" stroke-linejoin="round" paint-order="stroke">Phnom Penh</text>
<path d="M570.87 778.63 568.57 778.63 568.57 779.40 569.72 779.52 569.72 779.91 568.95 780.67 567.42 780.55 565.37 779.52 563.45 779.14 559.49 779.14 559.49 779.91 564.09 779.91 565.12 780.16 567.67 781.44 568.83 781.44 569.72 781.19 570.49 780.55 570.87 779.65ZM542.09 779.27 541.32 779.27 541.19 778.63 540.04 778.63 540.04 779.01 539.79 779.27 536.59 779.27 535.69 779.65 535.56 780.80 536.33 781.31 539.91 781.19 540.55 781.83 541.32 781.83 541.70 781.31 541.70 780.93 541.19 780.42 541.19 779.91 542.09 779.78ZM536.59 780.29 536.84 779.91 539.79 779.78 540.04 780.04 540.04 780.42 539.40 780.67 536.97 780.67ZM536.33 771.59 535.56 772.87 535.56 774.15 536.08 776.33 535.56 776.58 535.05 775.94 534.54 776.07 534.41 776.58 534.80 777.35 535.44 777.73 536.33 777.73 536.97 777.35 537.35 776.58 537.35 775.56 536.84 774.15 536.84 773.00 537.87 771.98 539.40 771.85 540.17 772.10 540.81 772.74 540.81 777.73 542.09 777.73 542.09 772.62 541.70 771.85 540.68 771.21 539.79 770.95 538.12 770.95ZM550.40 769.16 549.76 770.06 549.89 777.48 550.40 777.73 551.43 777.73 551.94 777.48 552.58 776.58 552.45 775.17 551.94 774.66 551.04 774.41 551.04 770.31 551.43 769.93 551.81 769.93 552.83 770.82 553.22 770.82 554.11 769.93 554.63 769.93 555.01 770.44 555.01 777.73 556.29 777.73 556.29 770.18 556.03 769.55 555.26 768.91 553.99 769.03 553.09 769.80 551.68 768.91 550.92 768.91ZM551.17 775.43 551.81 775.94 551.81 776.33 551.30 776.84 551.04 776.71ZM545.16 768.91 544.26 770.06 544.26 770.57 545.29 771.85 545.29 777.35 545.93 777.73 547.72 777.73 547.72 776.84 546.95 776.84 546.57 776.58 546.57 771.59 545.16 769.93 546.95 769.80 546.95 768.91ZM535.56 768.91 535.56 769.80 542.09 769.80 542.09 768.91ZM526.86 769.29 526.22 769.80 525.84 770.57 525.97 772.23 526.35 772.74 527.63 773.51 530.57 774.28 531.21 775.05 531.21 776.07 530.57 776.84 530.06 776.84 528.91 775.81 527.76 775.30 527.12 775.30 526.99 774.15 525.71 774.15 525.71 777.73 526.99 777.73 527.12 776.20 527.89 776.33 529.81 777.73 530.83 777.73 531.47 777.48 532.11 776.97 532.49 776.20 532.49 774.92 532.24 774.28 530.96 773.38 529.04 773.00 527.76 772.49 527.25 771.98 526.99 771.21 527.25 770.44 527.89 769.93 529.93 769.80 530.57 770.06 531.09 770.57 531.09 771.08 530.57 771.59 530.32 771.59 530.32 772.36 530.96 772.36 531.73 772.10 532.24 771.59 532.24 770.06 531.60 769.42 530.06 768.91 528.02 768.91ZM511.00 770.06 510.87 770.82 511.64 771.98 511.64 777.73 513.18 777.73 514.84 776.20 516.63 777.73 518.17 777.73 518.04 771.46 517.14 771.08 516.25 771.21 515.73 771.46 515.22 772.23 515.22 773.00 515.48 773.51 516.12 773.89 516.89 774.02 516.89 776.33 516.63 776.45 515.09 774.92 514.84 774.92 513.05 776.58 512.92 771.72 511.77 770.31 512.02 769.80 520.98 769.93 521.36 770.57 521.36 777.73 522.64 777.73 522.64 770.18 522.13 769.16 521.62 768.91 512.02 768.91ZM516.76 771.98 516.89 772.87 516.37 773.00 516.12 772.74 516.12 772.36ZM492.84 768.91 491.94 770.31 492.96 771.72 492.96 774.41 491.94 774.79 491.30 775.69 491.30 776.58 491.56 777.22 492.58 777.73 493.60 777.73 494.24 777.22 494.24 771.46 492.84 769.93 496.80 769.80 497.44 770.44 497.44 777.73 498.72 777.73 498.72 770.06 498.46 769.42 497.70 768.91ZM492.71 775.43 492.96 775.56 492.84 776.84 492.20 776.33 492.32 775.69ZM570.62 769.80 569.98 769.16 568.70 768.78 567.29 768.78 565.75 769.55 564.99 768.91 564.22 768.91 563.32 769.29 562.81 769.80 561.53 768.91 560.64 768.91 560.13 769.16 559.49 770.18 559.49 777.22 560.13 777.73 561.15 777.73 561.92 777.35 562.30 776.71 562.17 775.17 561.66 774.66 560.77 774.41 560.77 770.31 561.15 769.93 561.66 769.93 562.56 770.82 562.94 770.82 563.84 769.93 564.35 769.93 564.73 770.31 564.73 777.73 566.01 777.73 566.01 770.44 567.29 769.67 568.44 769.67 569.21 770.06 569.59 770.70 569.59 777.73 570.87 777.73 570.87 770.44ZM560.89 775.43 561.53 775.81 561.53 776.33 561.02 776.84 560.77 776.71ZM508.44 767.63 507.16 767.63 507.16 768.65 506.78 768.91 502.30 768.91 501.15 770.31 501.15 770.95 501.92 771.98 501.92 777.73 503.45 777.73 505.12 776.20 506.91 777.73 508.44 777.73 508.44 770.95 507.16 770.95 507.16 776.45 507.04 776.58 505.24 774.92 503.33 776.45 503.20 771.72 502.05 770.44 502.05 770.06 502.30 769.80 507.80 769.67 508.44 769.03ZM532.11 764.43 531.21 764.43 531.09 765.71 529.04 764.81 526.86 764.94 526.10 765.58 525.84 766.09 525.84 767.11 526.22 767.63 532.11 767.63ZM526.86 766.22 527.63 765.58 528.53 765.58 530.32 766.35 530.57 766.73 526.99 766.86ZM538.51 764.30 537.87 764.56 537.35 765.07 537.10 765.96 537.48 766.99 538.38 767.63 539.27 767.63 540.17 766.99 540.42 766.47 540.42 765.45 539.79 764.56ZM538.63 765.07 539.27 765.20 539.66 765.71 539.53 766.47 538.89 766.86 538.38 766.73 537.99 766.35 537.99 765.58Z" fill="#4d4d4d" fill-rule="evenodd" stroke="#fff" stroke-opacity="0.85" stroke-width="3.2" stroke-linejoin="round" paint-order="stroke"/>
<path d="M485.35 760.00 484.40 763.17 484.08 763.49 480.70 763.49 483.55 765.60 482.50 768.98 485.35 766.87 488.30 768.98 487.25 765.91 487.25 765.49 489.99 763.49 486.61 763.49 486.40 763.27Z" fill="#333" fill-rule="evenodd"/>
<text x="406.46" y="444.2" fill="#2a2a40" style="font-size:17px;letter-spacing:-1.707px;font-weight:700;" stroke="#fff" stroke-opacity="0.9" stroke-width="3.6" stroke-linejoin="round" paint-order="stroke">LAOS</text>
<text x="110.36" y="555.5" fill="#2a2a40" style="font-size:17px;letter-spacing:-0.564px;font-weight:700;" stroke="#fff" stroke-opacity="0.9" stroke-width="3.6" stroke-linejoin="round" paint-order="stroke">MYANMAR</text>
<text x="292.31" y="643.2" fill="#2a2a40" style="font-size:17px;letter-spacing:-0.624px;font-weight:700;" stroke="#fff" stroke-opacity="0.9" stroke-width="3.6" stroke-linejoin="round" paint-order="stroke">THAILAND</text>
<text x="438.50" y="696.7" fill="#2a2a40" style="font-size:17px;letter-spacing:-0.564px;font-weight:700;" stroke="#fff" stroke-opacity="0.9" stroke-width="3.6" stroke-linejoin="round" paint-order="stroke">CAMBODIA</text>
<text x="578.28" y="705.3" fill="#2a2a40" style="font-size:17px;letter-spacing:-0.124px;font-weight:700;" stroke="#fff" stroke-opacity="0.9" stroke-width="3.6" stroke-linejoin="round" paint-order="stroke">VIETNAM</text>
<text x="838.35" y="623.3" fill="#7fb2ea" style="font-size:12.4px;letter-spacing:3.029px;font-style:italic;" stroke="#fff" stroke-opacity="0.75" stroke-width="2.4" stroke-linejoin="round" paint-order="stroke">South</text>
<text x="838.02" y="638.7" fill="#7fb2ea" style="font-size:12.4px;letter-spacing:3.077px;font-style:italic;" stroke="#fff" stroke-opacity="0.75" stroke-width="2.4" stroke-linejoin="round" paint-order="stroke">China</text>
<text x="846.75" y="654.5" fill="#7fb2ea" style="font-size:12.4px;letter-spacing:2.756px;font-style:italic;" stroke="#fff" stroke-opacity="0.75" stroke-width="2.4" stroke-linejoin="round" paint-order="stroke">Sea</text>
</g>
<g fill="#edd86d" stroke="#ccb23c" stroke-width="1.3"><circle cx="368.1" cy="353.5" r="6.1"/><circle cx="385.6" cy="354.6" r="6.1"/><circle cx="383.4" cy="368.3" r="6.1"/><circle cx="372.4" cy="373.0" r="6.1"/><circle cx="375.4" cy="381.5" r="6.1"/><circle cx="375.0" cy="382.5" r="6.1"/><circle cx="389.1" cy="381.5" r="6.1"/><circle cx="385.2" cy="393.4" r="6.1"/><circle cx="395.0" cy="394.8" r="6.1"/><circle cx="406.1" cy="391.1" r="6.1"/><circle cx="367.1" cy="401.7" r="6.1"/><circle cx="381.0" cy="403.0" r="6.1"/><circle cx="379.6" cy="408.3" r="6.1"/><circle cx="374.7" cy="409.7" r="6.1"/><circle cx="324.6" cy="404.4" r="6.1"/><circle cx="318.3" cy="409.3" r="6.1"/><circle cx="323.2" cy="413.2" r="6.1"/><circle cx="310.6" cy="421.5" r="6.1"/><circle cx="323.6" cy="420.8" r="6.1"/><circle cx="309.9" cy="427.1" r="6.1"/><circle cx="316.9" cy="426.7" r="6.1"/><circle cx="321.8" cy="429.2" r="6.1"/><circle cx="326.0" cy="431.3" r="6.1"/><circle cx="330.8" cy="434.8" r="6.1"/><circle cx="365.7" cy="422.2" r="6.1"/><circle cx="376.8" cy="423.6" r="6.1"/><circle cx="361.5" cy="426.4" r="6.1"/><circle cx="374.7" cy="427.8" r="6.1"/><circle cx="354.5" cy="432.7" r="6.1"/><circle cx="351.1" cy="437.6" r="6.1"/><circle cx="344.8" cy="440.3" r="6.1"/><circle cx="342.7" cy="448.0" r="6.1"/><circle cx="449.6" cy="401.3" r="6.1"/><circle cx="450.4" cy="405.5" r="6.1"/><circle cx="464.9" cy="411.8" r="6.1"/><circle cx="467.7" cy="415.3" r="6.1"/><circle cx="447.9" cy="419.4" r="6.1"/><circle cx="452.8" cy="422.2" r="6.1"/><circle cx="445.4" cy="429.6" r="6.1"/><circle cx="447.9" cy="431.3" r="6.1"/><circle cx="437.5" cy="436.2" r="6.1"/><circle cx="440.9" cy="438.3" r="6.1"/><circle cx="471.6" cy="434.1" r="6.1"/><circle cx="474.8" cy="438.3" r="6.1"/><circle cx="343.2" cy="451.8" r="6.1"/><circle cx="342.5" cy="450.9" r="6.1"/><circle cx="440.1" cy="439.3" r="6.1"/><circle cx="413.6" cy="456.7" r="6.1"/><circle cx="415.7" cy="458.1" r="6.1"/><circle cx="418.5" cy="457.4" r="6.1"/><circle cx="422.7" cy="453.9" r="6.1"/><circle cx="420.6" cy="459.5" r="6.1"/><circle cx="416.4" cy="464.4" r="6.1"/><circle cx="427.6" cy="465.1" r="6.1"/><circle cx="365.5" cy="466.5" r="6.1"/><circle cx="358.6" cy="472.8" r="6.1"/><circle cx="357.9" cy="480.8" r="6.1"/><circle cx="385.7" cy="467.9" r="6.1"/><circle cx="385.1" cy="470.0" r="6.1"/><circle cx="394.4" cy="479.0" r="6.1"/><circle cx="396.2" cy="483.2" r="6.1"/><circle cx="376.7" cy="487.8" r="6.1"/><circle cx="387.6" cy="491.6" r="6.1"/><circle cx="395.5" cy="495.7" r="6.1"/><circle cx="358.6" cy="500.6" r="6.1"/><circle cx="353.7" cy="507.6" r="6.1"/><circle cx="408.7" cy="482.5" r="6.1"/><circle cx="416.7" cy="481.1" r="6.1"/><circle cx="420.6" cy="489.5" r="6.1"/><circle cx="412.9" cy="495.1" r="6.1"/><circle cx="419.2" cy="500.6" r="6.1"/><circle cx="420.6" cy="502.0" r="6.1"/><circle cx="434.5" cy="490.9" r="6.1"/><circle cx="440.1" cy="496.4" r="6.1"/><circle cx="436.6" cy="499.9" r="6.1"/><circle cx="437.3" cy="500.9" r="6.1"/><circle cx="443.6" cy="483.2" r="6.1"/><circle cx="450.6" cy="502.7" r="6.1"/><circle cx="460.3" cy="488.1" r="6.1"/><circle cx="466.6" cy="496.4" r="6.1"/><circle cx="488.2" cy="509.0" r="6.1"/><circle cx="471.5" cy="513.4" r="6.1"/><circle cx="401.1" cy="516.0" r="6.1"/><circle cx="410.8" cy="516.0" r="6.1"/><circle cx="401.1" cy="522.2" r="6.1"/><circle cx="398.3" cy="518.0" r="6.1"/><circle cx="471.5" cy="527.4" r="6.1"/><circle cx="474.3" cy="529.9" r="6.1"/><circle cx="479.1" cy="536.9" r="6.1"/><circle cx="481.6" cy="544.5" r="6.1"/><circle cx="495.9" cy="540.6" r="6.1"/><circle cx="514.7" cy="543.1" r="6.1"/><circle cx="481.1" cy="544.9" r="6.1"/><circle cx="495.7" cy="541.4" r="6.1"/><circle cx="514.6" cy="543.5" r="6.1"/><circle cx="488.8" cy="552.5" r="6.1"/><circle cx="480.4" cy="554.6" r="6.1"/><circle cx="498.5" cy="567.2" r="6.1"/><circle cx="509.0" cy="568.6" r="6.1"/><circle cx="533.1" cy="567.2" r="6.1"/><circle cx="495.1" cy="576.5" r="6.1"/><circle cx="502.0" cy="579.7" r="6.1"/><circle cx="557.5" cy="582.2" r="6.1"/><circle cx="548.4" cy="591.3" r="6.1"/><circle cx="542.4" cy="595.7" r="6.1"/><circle cx="539.0" cy="598.5" r="6.1"/><circle cx="540.6" cy="605.5" r="6.1"/><circle cx="526.1" cy="606.2" r="6.1"/><circle cx="517.4" cy="611.1" r="6.1"/><circle cx="556.0" cy="609.0" r="6.1"/><circle cx="535.5" cy="613.9" r="6.1"/><circle cx="518.0" cy="618.0" r="6.1"/><circle cx="529.2" cy="616.0" r="6.1"/><circle cx="550.8" cy="616.7" r="6.1"/><circle cx="552.9" cy="622.2" r="6.1"/><circle cx="543.1" cy="617.4" r="6.1"/><circle cx="574.5" cy="613.2" r="6.1"/><circle cx="524.3" cy="622.2" r="6.1"/><circle cx="510.4" cy="629.2" r="6.1"/><circle cx="516.0" cy="627.8" r="6.1"/><circle cx="518.0" cy="629.2" r="6.1"/><circle cx="522.2" cy="634.1" r="6.1"/><circle cx="522.2" cy="637.6" r="6.1"/><circle cx="512.5" cy="634.8" r="6.1"/><circle cx="547.0" cy="631.3" r="6.1"/><circle cx="557.8" cy="629.9" r="6.1"/><circle cx="577.7" cy="628.8" r="6.1"/><circle cx="577.3" cy="634.8" r="6.1"/><circle cx="565.4" cy="636.9" r="6.1"/><circle cx="560.6" cy="639.7" r="6.1"/><circle cx="554.3" cy="640.3" r="6.1"/><circle cx="580.3" cy="643.1" r="6.1"/><circle cx="543.1" cy="643.8" r="6.1"/><circle cx="511.1" cy="632.3" r="6.1"/><circle cx="521.9" cy="633.4" r="6.1"/><circle cx="523.0" cy="638.6" r="6.1"/><circle cx="517.3" cy="648.2" r="6.1"/><circle cx="519.0" cy="659.1" r="6.1"/><circle cx="521.9" cy="660.2" r="6.1"/><circle cx="543.0" cy="643.7" r="6.1"/><circle cx="542.1" cy="650.5" r="6.1"/><circle cx="551.5" cy="647.7" r="6.1"/><circle cx="554.4" cy="640.8" r="6.1"/><circle cx="560.7" cy="640.3" r="6.1"/><circle cx="565.8" cy="636.8" r="6.1"/><circle cx="547.5" cy="631.1" r="6.1"/><circle cx="577.8" cy="631.1" r="6.1"/><circle cx="577.2" cy="635.1" r="6.1"/><circle cx="580.0" cy="643.1" r="6.1"/><circle cx="557.8" cy="630.6" r="6.1"/></g></svg>
<div class="mbtn" style="left:18px;top:236px;height:64px"></div><div class="mbtn" style="left:18px;top:308px"></div><div class="mbtn" style="left:18px;top:348px"></div><div class="mbtn" style="left:18px;top:388px"></div><div class="mbtn" style="left:910px;top:236px;box-shadow:0 1px 4px rgba(0,0,0,.05)"></div>
<svg width="1913" height="789" viewBox="0 0 1913 789" style="pointer-events:none">
<g fill="#2b2d3a"><circle cx="34.5" cy="252.5" r="7.6"/><circle cx="34.5" cy="284.5" r="7.6"/></g>
<path d="M29.9 252.5h9.2M34.5 247.9v9.2M29.9 284.5h9.2" stroke="#fff" stroke-width="1.1" fill="none"/>
<g fill="none" stroke="#343741" stroke-width="1">
<circle cx="34.3" cy="324" r="5.5"/>
<path d="M34.3 316.6v4.1M34.3 327.3v4.1M26.9 324h4.1M37.600 324h4.1" stroke="#8e939e" stroke-width="1.5"/>
<path d="M27.7 370L40.9 357.8M36.4 357.7h4.6v4.6M27.6 365.6v4.6h4.6"/>
<path d="M29.3 397.9A4.8 4.8 0 0 1 35.9 403.6L41.1 408.4A2.2 2.2 0 0 1 38.1 411.6L32.9 406.8A4.8 4.8 0 0 1 26.9 400.3L29.5 402.9L31.9 400.5Z" stroke-linejoin="round"/>
<path d="M921.6 247.5h11M919.4 251.7h13.200M921.600 255.900h11M923.300 247.900l-4 3.800 4 3.800"/>
</g>
<circle cx="34.3" cy="324" r=".9" fill="#343741"/><circle cx="38.3" cy="408.7" r=".95" fill="#343741"/>
</svg>

<div class="abs" id="zoomt" style="left:800px;top:727.7px;width:141.6px;text-align:right;font-size:10.4px;line-height:14px;color:#343741;white-space:nowrap"><b>zoom:</b> 4.71</div>
<div class="abs" id="attr1" style="left:563.6px;top:753.2px;font-size:10.5px;line-height:14px;color:#1a1c21;white-space:nowrap;letter-spacing:0.318px">Elastic Maps Service</div>
<div class="abs" id="attr2" style="left:683.2px;top:753.2px;font-size:10.5px;line-height:14px;color:#1a1c21;white-space:nowrap;letter-spacing:0.251px">, OpenMapTiles</div>
<div class="abs" id="attr3" style="left:776.9px;top:753.2px;font-size:10.5px;line-height:14px;color:#1a1c21;white-space:nowrap;letter-spacing:0.420px">, OpenStreetMap contributors</div>
<div class="abs" style="left:672.4px;top:756.1px;width:10px;height:10px;line-height:0"><svg style="position:static;vertical-align:-1px" width="10" height="10" viewBox="0 0 10 10"><path d="M4.2 1.3H2.3a1.2 1.2 0 0 0-1.2 1.2v5.2a1.2 1.2 0 0 0 1.200 1.200h5.200a1.200 1.200 0 0 0 1.200-1.200V5.800M5.600.600h3.800v3.800M9.200.800L4.600 5.400" fill="none" stroke="#343741" stroke-width="1"/></svg></div>
<div class="abs" style="left:765.9px;top:756.1px;width:10px;height:10px;line-height:0"><svg style="position:static;vertical-align:-1px" width="10" height="10" viewBox="0 0 10 10"><path d="M4.2 1.3H2.3a1.2 1.2 0 0 0-1.2 1.2v5.2a1.2 1.2 0 0 0 1.200 1.200h5.200a1.200 1.200 0 0 0 1.200-1.200V5.800M5.600.600h3.800v3.800M9.200.800L4.600 5.400" fill="none" stroke="#343741" stroke-width="1"/></svg></div>
<div class="abs" style="left:931.3px;top:756.1px;width:10px;height:10px;line-height:0"><svg style="position:static;vertical-align:-1px" width="10" height="10" viewBox="0 0 10 10"><path d="M4.2 1.3H2.3a1.2 1.2 0 0 0-1.2 1.2v5.2a1.2 1.2 0 0 0 1.200 1.200h5.200a1.200 1.200 0 0 0 1.200-1.200V5.800M5.600.600h3.800v3.800M9.200.800L4.600 5.400" fill="none" stroke="#343741" stroke-width="1"/></svg></div>
<svg width="1913" height="789" viewBox="0 0 1913 789" style="clip-path:inset(224px 3px 9px 962px)"><path d="M1046.5 229V710.5H1685" fill="none" stroke="#eef0f4" stroke-width="1"/>
<path d="M1068.6 704H1091M1093 704.2H1104" fill="none" stroke="#aa6556" stroke-width="2" stroke-dasharray="5 5"/>
<path d="M1094 703.6H1104" fill="none" stroke="#8fd0bd" stroke-width="2"/>
<path d="M1104 704.5H1140" fill="none" stroke="#6092c0" stroke-width="2.4" stroke-dasharray="5 5"/>
<path d="M1108 703H1140" fill="none" stroke="#e7664c" stroke-width="1.6" stroke-dasharray="5 5" stroke-dashoffset="5"/>
<path d="M1136.3 706.5H1350" fill="none" stroke="#7ba5cc" stroke-width="1"/>
<path d="M1136.3 704.1H1350" fill="none" stroke="#eaaabb" stroke-width="3.4" stroke-dasharray="5.7 4.3"/>
<path d="M1136.3 703.4H1350" fill="none" stroke="#d9a38d" stroke-width=".9" stroke-dasharray="5.7 4.3"/>
<path d="M1136.3 704.6H1350" fill="none" stroke="#c3b6dc" stroke-width=".8" stroke-dasharray="5.7 4.3"/>
<path d="M1136.3 701.9H1350" fill="none" stroke="#db5d72" stroke-width="1.7" stroke-dasharray="5.7 4.3"/>
<path d="M1142.0 704.9H1350" fill="none" stroke="#5b8fc0" stroke-width="3.6" stroke-dasharray="4.3 5.7"/>
<path d="M1142.0 702.5H1350" fill="none" stroke="#4fb096" stroke-width="1.7" stroke-dasharray="4.3 5.7"/>
<path d="M1322 704.6H1362" fill="none" stroke="#ca8eae" stroke-width="2" stroke-dasharray="5 5"/>
<path d="M1113.9 693.8 L1180.0 696.0 L1250.0 699.5 L1283.0 702.0 L1304.5 699.3 L1356.2 680.0" fill="none" stroke="#e5c7d7" stroke-width="2" stroke-dasharray="5 5"/>
<path d="M1113.9 698.8 L1180.0 700.5 L1240.0 702.0 L1300.0 703.0" fill="none" stroke="#ebdfab" stroke-width="2" stroke-dasharray="5 5"/>
<path d="M1125.2 578.7 L1260.7 534.0 L1294.4 584.5 L1356.2 589.6" fill="none" stroke="#b9a888" stroke-width="2" stroke-dasharray="5 5"/>
<path d="M1262.9 700.8 L1299.9 649.1 L1350.0 701.0" fill="none" stroke="#aa6556" stroke-width="2" stroke-dasharray="5 5"/>
<path d="M1125.1 344.5 L1260.3 688.7 L1294.3 678.7 L1356.2 675.5" fill="none" stroke="#d6bf57" stroke-width="2" stroke-dasharray="5 5"/>
<path d="M1125.1 266.6 L1260.3 678.5 L1294.3 675.0 L1356.2 680.0" fill="none" stroke="#ca8eae" stroke-width="2" stroke-dasharray="5 5"/>
<path d="M1125.1 229.3 L1260.3 681.5 L1294.3 679.5 L1356.2 679.5" fill="none" stroke="#9170b8" stroke-width="2" stroke-dasharray="5 5"/>
<circle cx="1125.2" cy="578.7" r="1.9" fill="#fff" stroke="#b9a888" stroke-width="1.8"/>
<circle cx="1260.7" cy="534.0" r="1.9" fill="#fff" stroke="#b9a888" stroke-width="1.8"/>
<circle cx="1294.4" cy="584.5" r="1.9" fill="#fff" stroke="#b9a888" stroke-width="1.8"/>
<circle cx="1356.2" cy="589.6" r="1.9" fill="#fff" stroke="#b9a888" stroke-width="1.8"/>
<circle cx="1299.9" cy="649.1" r="1.9" fill="#fff" stroke="#aa6556" stroke-width="1.8"/>
<circle cx="1125.1" cy="344.5" r="1.9" fill="#fff" stroke="#d6bf57" stroke-width="1.8"/>
<circle cx="1260.3" cy="688.7" r="1.9" fill="#fff" stroke="#d6bf57" stroke-width="1.8"/>
<circle cx="1294.3" cy="678.7" r="1.9" fill="#fff" stroke="#d6bf57" stroke-width="1.8"/>
<circle cx="1356.2" cy="675.5" r="1.9" fill="#fff" stroke="#d6bf57" stroke-width="1.8"/>
<circle cx="1125.1" cy="266.6" r="1.9" fill="#fff" stroke="#ca8eae" stroke-width="1.8"/>
<circle cx="1260.3" cy="678.5" r="1.9" fill="#fff" stroke="#ca8eae" stroke-width="1.8"/>
<circle cx="1294.3" cy="675.0" r="1.9" fill="#fff" stroke="#ca8eae" stroke-width="1.8"/>
<circle cx="1125.1" cy="229.3" r="1.9" fill="#fff" stroke="#9170b8" stroke-width="1.8"/>
<circle cx="1260.3" cy="681.5" r="1.9" fill="#fff" stroke="#9170b8" stroke-width="1.8"/>
<circle cx="1294.3" cy="679.5" r="1.9" fill="#fff" stroke="#9170b8" stroke-width="1.8"/>
<circle cx="1356.2" cy="680.0" r="1.9" fill="#fff" stroke="#e5c7d7" stroke-width="1.8"/>
<circle cx="1113.9" cy="693.8" r="1.9" fill="#fff" stroke="#e5c7d7" stroke-width="1.8"/>
<circle cx="1113.9" cy="698.8" r="1.9" fill="#fff" stroke="#ebdfab" stroke-width="1.8"/>
<circle cx="1068.6" cy="704.0" r="1.9" fill="#fff" stroke="#6092c0" stroke-width="1.8"/>
<circle cx="1074.6" cy="704.0" r="1.9" fill="#fff" stroke="#b9a888" stroke-width="1.8"/>
<circle cx="1080.0" cy="704.0" r="1.9" fill="#fff" stroke="#aa6556" stroke-width="1.8"/>
<circle cx="1085.8" cy="703.7" r="1.9" fill="#fff" stroke="#aadacc" stroke-width="1.8"/>
<circle cx="1091.4" cy="699.7" r="1.9" fill="#fff" stroke="#b0c9e0" stroke-width="1.8"/>
<circle cx="1091.4" cy="701.5" r="1.9" fill="#fff" stroke="#e9b0c3" stroke-width="1.8"/>
<circle cx="1091.4" cy="705.5" r="1.9" fill="#fff" stroke="#edc5a2" stroke-width="1.8"/>
<circle cx="1108.1" cy="700.5" r="1.9" fill="#fff" stroke="#da8b45" stroke-width="1.8"/>
<circle cx="1108.1" cy="704.7" r="1.9" fill="#fff" stroke="#c8b8dc" stroke-width="1.8"/>
<circle cx="1113.9" cy="701.0" r="1.9" fill="#fff" stroke="#9170b8" stroke-width="1.8"/>
<circle cx="1113.9" cy="704.0" r="1.9" fill="#fff" stroke="#b9a888" stroke-width="1.8"/>
<circle cx="1119.6" cy="701.5" r="1.9" fill="#fff" stroke="#54b399" stroke-width="1.8"/>
<circle cx="1119.6" cy="706.3" r="1.9" fill="#fff" stroke="#d36086" stroke-width="1.8"/>
<circle cx="1125.2" cy="700.5" r="1.9" fill="#fff" stroke="#e7664c" stroke-width="1.8"/>
<circle cx="1125.2" cy="703.8" r="1.9" fill="#fff" stroke="#b0c9e0" stroke-width="1.8"/>
<circle cx="1130.9" cy="701.0" r="1.9" fill="#fff" stroke="#ca8eae" stroke-width="1.8"/>
<circle cx="1130.9" cy="703.8" r="1.9" fill="#fff" stroke="#6092c0" stroke-width="1.8"/>
<circle cx="1136.5" cy="701.0" r="1.9" fill="#fff" stroke="#9170b8" stroke-width="1.8"/>
<circle cx="1136.5" cy="705.5" r="1.9" fill="#fff" stroke="#e9b0c3" stroke-width="1.8"/>
<circle cx="1226.7" cy="704.7" r="1.9" fill="#fff" stroke="#edc5a2" stroke-width="1.8"/>
<circle cx="1232.3" cy="704.4" r="1.9" fill="#fff" stroke="#aadacc" stroke-width="1.8"/>
<circle cx="1243.6" cy="704.7" r="1.9" fill="#fff" stroke="#d36086" stroke-width="1.8"/>
<circle cx="1249.3" cy="704.5" r="1.9" fill="#fff" stroke="#e7664c" stroke-width="1.8"/>
<circle cx="1260.6" cy="704.0" r="1.9" fill="#fff" stroke="#aadacc" stroke-width="1.8"/>
<circle cx="1266.2" cy="704.3" r="1.9" fill="#fff" stroke="#e9b0c3" stroke-width="1.8"/>
<circle cx="1271.9" cy="704.3" r="1.9" fill="#fff" stroke="#d5b2ab" stroke-width="1.8"/>
<circle cx="1283.2" cy="701.0" r="1.9" fill="#fff" stroke="#da8b45" stroke-width="1.8"/>
<circle cx="1283.2" cy="702.5" r="1.9" fill="#fff" stroke="#54b399" stroke-width="1.8"/>
<circle cx="1283.2" cy="704.5" r="1.9" fill="#fff" stroke="#6092c0" stroke-width="1.8"/>
<circle cx="1294.3" cy="703.4" r="1.9" fill="#fff" stroke="#ca8eae" stroke-width="1.8"/>
<circle cx="1299.9" cy="705.3" r="1.9" fill="#fff" stroke="#edc5a2" stroke-width="1.8"/>
<circle cx="1305.8" cy="703.4" r="1.9" fill="#fff" stroke="#edc5a2" stroke-width="1.8"/>
<circle cx="1311.4" cy="702.4" r="1.9" fill="#fff" stroke="#d36086" stroke-width="1.8"/>
<circle cx="1316.6" cy="700.0" r="1.9" fill="#fff" stroke="#da8b45" stroke-width="1.8"/>
<circle cx="1316.6" cy="702.6" r="1.9" fill="#fff" stroke="#54b399" stroke-width="1.8"/>
<circle cx="1316.6" cy="705.8" r="1.9" fill="#fff" stroke="#6092c0" stroke-width="1.8"/>
<circle cx="1322.5" cy="704.4" r="1.9" fill="#fff" stroke="#ca8eae" stroke-width="1.8"/>
<circle cx="1339.5" cy="705.5" r="1.9" fill="#fff" stroke="#da8b45" stroke-width="1.8"/>
<circle cx="1339.5" cy="703.4" r="1.9" fill="#fff" stroke="#d6bf57" stroke-width="1.8"/>
<circle cx="1339.5" cy="708.9" r="1.9" fill="#fff" stroke="#b0c9e0" stroke-width="1.8"/>
<circle cx="1350.7" cy="702.4" r="1.9" fill="#fff" stroke="#e9b0c3" stroke-width="1.8"/>
<circle cx="1356.3" cy="702.4" r="1.9" fill="#fff" stroke="#aadacc" stroke-width="1.8"/>
<circle cx="1362.2" cy="704.4" r="1.9" fill="#fff" stroke="#ca8eae" stroke-width="1.8"/>
<text x="1036.2" y="712.5" text-anchor="end" class="tk">0</text>
<text x="1036.2" y="671.1" text-anchor="end" class="tk">50</text>
<text x="1036.2" y="629.8" text-anchor="end" class="tk">100</text>
<text x="1036.2" y="588.4" text-anchor="end" class="tk">150</text>
<text x="1036.2" y="547.0" text-anchor="end" class="tk">200</text>
<text x="1036.2" y="505.7" text-anchor="end" class="tk">250</text>
<text x="1036.2" y="464.3" text-anchor="end" class="tk">300</text>
<text x="1036.2" y="422.9" text-anchor="end" class="tk">350</text>
<text x="1036.2" y="381.6" text-anchor="end" class="tk">400</text>
<text x="1036.2" y="340.2" text-anchor="end" class="tk">450</text>
<text x="1036.2" y="298.8" text-anchor="end" class="tk">500</text>
<text x="1036.2" y="257.5" text-anchor="end" class="tk">550</text>
<text x="1070.2" y="728" text-anchor="middle" class="tk">2020-01-01</text>
<text x="1143.8" y="728" text-anchor="middle" class="tk">2020-04-01</text>
<text x="1217.3" y="728" text-anchor="middle" class="tk">2020-07-01</text>
<text x="1290.8" y="728" text-anchor="middle" class="tk">2020-10-01</text>
<text x="1364.4" y="728" text-anchor="middle" class="tk">2021-01-01</text>
<text x="1438.0" y="728" text-anchor="middle" class="tk">2021-04-01</text>
<text x="1511.5" y="728" text-anchor="middle" class="tk">2021-07-01</text>
<text x="1585.1" y="728" text-anchor="middle" class="tk">2021-10-01</text>
<text x="1658.6" y="728" text-anchor="middle" class="tk">2022-01-01</text>
<text x="1365.8" y="758" text-anchor="middle" class="axt">Date</text>
<text transform="translate(982.2 469.3) rotate(-90)" text-anchor="middle" class="axt">Value</text>
<text transform="translate(1001.8 538.57) rotate(-90)" class="axs" style="letter-spacing:0.120px">Dissolved oxygen(mg(O2)/L)</text>
<circle cx="1722" cy="237" r="4" fill="#54b399"/><text x="1734.12" y="241.2" class="lg" style="letter-spacing:0.229px">B. Samukkhixay</text>
<g stroke="#5a606c" stroke-width=".9" fill="#d3d6dc"><rect x="1890.2" y="231" width="3.4" height="2.5" rx=".7"/><rect x="1890.2" y="240.4" width="3.4" height="2.5" rx=".7"/></g><circle cx="1891.9" cy="237" r="1.55" fill="#a2a6b0" stroke="#8a8f9a" stroke-width=".5"/>
<circle cx="1722" cy="259" r="4" fill="#6092c0"/><text x="1734.12" y="263.2" class="lg" style="letter-spacing:0.297px">B. vudnuea</text>
<g stroke="#5a606c" stroke-width=".9" fill="#d3d6dc"><rect x="1890.2" y="253" width="3.4" height="2.5" rx=".7"/><rect x="1890.2" y="262.4" width="3.4" height="2.5" rx=".7"/></g><circle cx="1891.9" cy="259" r="1.55" fill="#a2a6b0" stroke="#8a8f9a" stroke-width=".5"/>
<circle cx="1722" cy="281" r="4" fill="#d36086"/><text x="1734.12" y="285.2" class="lg" style="letter-spacing:0.487px">B.vungtudnnoy</text>
<g stroke="#5a606c" stroke-width=".9" fill="#d3d6dc"><rect x="1890.2" y="275" width="3.4" height="2.5" rx=".7"/><rect x="1890.2" y="284.4" width="3.4" height="2.5" rx=".7"/></g><circle cx="1891.9" cy="281" r="1.55" fill="#a2a6b0" stroke="#8a8f9a" stroke-width=".5"/>
<circle cx="1722" cy="303" r="4" fill="#9170b8"/><text x="1734.12" y="307.2" class="lg" style="letter-spacing:0.157px">B. Phoukeua</text>
<g stroke="#5a606c" stroke-width=".9" fill="#d3d6dc"><rect x="1890.2" y="297" width="3.4" height="2.5" rx=".7"/><rect x="1890.2" y="306.4" width="3.4" height="2.5" rx=".7"/></g><circle cx="1891.9" cy="303" r="1.55" fill="#a2a6b0" stroke="#8a8f9a" stroke-width=".5"/>
<circle cx="1722" cy="325" r="4" fill="#ca8eae"/><text x="1734.12" y="329.2" class="lg" style="letter-spacing:0.349px">B. Viengxai</text>
<g stroke="#5a606c" stroke-width=".9" fill="#d3d6dc"><rect x="1890.2" y="319" width="3.4" height="2.5" rx=".7"/><rect x="1890.2" y="328.4" width="3.4" height="2.5" rx=".7"/></g><circle cx="1891.9" cy="325" r="1.55" fill="#a2a6b0" stroke="#8a8f9a" stroke-width=".5"/>
<circle cx="1722" cy="347" r="4" fill="#d6bf57"/><text x="1734.12" y="351.2" class="lg" style="letter-spacing:0.470px">B.vungtudnyai</text>
<g stroke="#5a606c" stroke-width=".9" fill="#d3d6dc"><rect x="1890.2" y="341" width="3.4" height="2.5" rx=".7"/><rect x="1890.2" y="350.4" width="3.4" height="2.5" rx=".7"/></g><circle cx="1891.9" cy="347" r="1.55" fill="#a2a6b0" stroke="#8a8f9a" stroke-width=".5"/>
<circle cx="1722" cy="369" r="4" fill="#b9a888"/><text x="1734.12" y="373.2" class="lg" style="letter-spacing:0.480px">B.tardkoum</text>
<g stroke="#5a606c" stroke-width=".9" fill="#d3d6dc"><rect x="1890.2" y="363" width="3.4" height="2.5" rx=".7"/><rect x="1890.2" y="372.4" width="3.4" height="2.5" rx=".7"/></g><circle cx="1891.9" cy="369" r="1.55" fill="#a2a6b0" stroke="#8a8f9a" stroke-width=".5"/>
<circle cx="1722" cy="391" r="4" fill="#da8b45"/><text x="1734.12" y="395.2" class="lg" style="letter-spacing:0.264px">B. Sompoy</text>
<g stroke="#5a606c" stroke-width=".9" fill="#d3d6dc"><rect x="1890.2" y="385" width="3.4" height="2.5" rx=".7"/><rect x="1890.2" y="394.4" width="3.4" height="2.5" rx=".7"/></g><circle cx="1891.9" cy="391" r="1.55" fill="#a2a6b0" stroke="#8a8f9a" stroke-width=".5"/>
<circle cx="1722" cy="413" r="4" fill="#aa6556"/><text x="1734.12" y="417.2" class="lg" style="letter-spacing:0.337px">B. Mai</text>
<g stroke="#5a606c" stroke-width=".9" fill="#d3d6dc"><rect x="1890.2" y="407" width="3.4" height="2.5" rx=".7"/><rect x="1890.2" y="416.4" width="3.4" height="2.5" rx=".7"/></g><circle cx="1891.9" cy="413" r="1.55" fill="#a2a6b0" stroke="#8a8f9a" stroke-width=".5"/>
<circle cx="1722" cy="435" r="4" fill="#e7664c"/><text x="1734.12" y="439.2" class="lg" style="letter-spacing:0.313px">B. Khoumkham</text>
<g stroke="#5a606c" stroke-width=".9" fill="#d3d6dc"><rect x="1890.2" y="429" width="3.4" height="2.5" rx=".7"/><rect x="1890.2" y="438.4" width="3.4" height="2.5" rx=".7"/></g><circle cx="1891.9" cy="435" r="1.55" fill="#a2a6b0" stroke="#8a8f9a" stroke-width=".5"/>
<circle cx="1722" cy="457" r="4" fill="#aadacc"/><text x="1734.12" y="461.2" class="lg" style="letter-spacing:0.371px">B.muemhuamueang</text>
<g stroke="#5a606c" stroke-width=".9" fill="#d3d6dc"><rect x="1890.2" y="451" width="3.4" height="2.5" rx=".7"/><rect x="1890.2" y="460.4" width="3.4" height="2.5" rx=".7"/></g><circle cx="1891.9" cy="457" r="1.55" fill="#a2a6b0" stroke="#8a8f9a" stroke-width=".5"/>
<circle cx="1722" cy="479" r="4" fill="#b0c9e0"/><text x="1734.12" y="483.2" class="lg" style="letter-spacing:0.400px">B.Naphawk</text>
<g stroke="#5a606c" stroke-width=".9" fill="#d3d6dc"><rect x="1890.2" y="473" width="3.4" height="2.5" rx=".7"/><rect x="1890.2" y="482.4" width="3.4" height="2.5" rx=".7"/></g><circle cx="1891.9" cy="479" r="1.55" fill="#a2a6b0" stroke="#8a8f9a" stroke-width=".5"/>
<circle cx="1722" cy="501" r="4" fill="#e9b0c3"/><text x="1734.12" y="505.2" class="lg" style="letter-spacing:0.346px">B.Pakouytai</text>
<g stroke="#5a606c" stroke-width=".9" fill="#d3d6dc"><rect x="1890.2" y="495" width="3.4" height="2.5" rx=".7"/><rect x="1890.2" y="504.4" width="3.4" height="2.5" rx=".7"/></g><circle cx="1891.9" cy="501" r="1.55" fill="#a2a6b0" stroke="#8a8f9a" stroke-width=".5"/>
<circle cx="1722" cy="523" r="4" fill="#c8b8dc"/><text x="1734.12" y="527.2" class="lg" style="letter-spacing:0.310px">B.Mahaxaykao</text>
<g stroke="#5a606c" stroke-width=".9" fill="#d3d6dc"><rect x="1890.2" y="517" width="3.4" height="2.5" rx=".7"/><rect x="1890.2" y="526.4" width="3.4" height="2.5" rx=".7"/></g><circle cx="1891.9" cy="523" r="1.55" fill="#a2a6b0" stroke="#8a8f9a" stroke-width=".5"/>
<circle cx="1722" cy="545" r="4" fill="#e5c7d7"/><text x="1734.12" y="549.2" class="lg" style="letter-spacing:0.332px">B.Mainapakan</text>
<g stroke="#5a606c" stroke-width=".9" fill="#d3d6dc"><rect x="1890.2" y="539" width="3.4" height="2.5" rx=".7"/><rect x="1890.2" y="548.4" width="3.4" height="2.5" rx=".7"/></g><circle cx="1891.9" cy="545" r="1.55" fill="#a2a6b0" stroke="#8a8f9a" stroke-width=".5"/>
<circle cx="1722" cy="567" r="4" fill="#ebdfab"/><text x="1734.12" y="571.2" class="lg" style="letter-spacing:0.214px">B.KhaowXe</text>
<g stroke="#5a606c" stroke-width=".9" fill="#d3d6dc"><rect x="1890.2" y="561" width="3.4" height="2.5" rx=".7"/><rect x="1890.2" y="570.4" width="3.4" height="2.5" rx=".7"/></g><circle cx="1891.9" cy="567" r="1.55" fill="#a2a6b0" stroke="#8a8f9a" stroke-width=".5"/>
<circle cx="1722" cy="589" r="4" fill="#dcd4c4"/><text x="1734.12" y="593.2" class="lg" style="letter-spacing:0.420px">B. Nongpham</text>
<g stroke="#5a606c" stroke-width=".9" fill="#d3d6dc"><rect x="1890.2" y="583" width="3.4" height="2.5" rx=".7"/><rect x="1890.2" y="592.4" width="3.4" height="2.5" rx=".7"/></g><circle cx="1891.9" cy="589" r="1.55" fill="#a2a6b0" stroke="#8a8f9a" stroke-width=".5"/>
<circle cx="1722" cy="611" r="4" fill="#edc5a2"/><text x="1734.12" y="615.2" class="lg" style="letter-spacing:0.327px">B.Thangarm</text>
<g stroke="#5a606c" stroke-width=".9" fill="#d3d6dc"><rect x="1890.2" y="605" width="3.4" height="2.5" rx=".7"/><rect x="1890.2" y="614.4" width="3.4" height="2.5" rx=".7"/></g><circle cx="1891.9" cy="611" r="1.55" fill="#a2a6b0" stroke="#8a8f9a" stroke-width=".5"/>
<circle cx="1722" cy="633" r="4" fill="#d5b2ab"/><text x="1734.12" y="637.2" class="lg" style="letter-spacing:0.313px">B. Nawarnnoy</text>
<g stroke="#5a606c" stroke-width=".9" fill="#d3d6dc"><rect x="1890.2" y="627" width="3.4" height="2.5" rx=".7"/><rect x="1890.2" y="636.4" width="3.4" height="2.5" rx=".7"/></g><circle cx="1891.9" cy="633" r="1.55" fill="#a2a6b0" stroke="#8a8f9a" stroke-width=".5"/>
<circle cx="1722" cy="655" r="4" fill="#f3b3a6"/><text x="1734.12" y="659.2" class="lg" style="letter-spacing:0.274px">B. Luk4</text>
<g stroke="#5a606c" stroke-width=".9" fill="#d3d6dc"><rect x="1890.2" y="649" width="3.4" height="2.5" rx=".7"/><rect x="1890.2" y="658.4" width="3.4" height="2.5" rx=".7"/></g><circle cx="1891.9" cy="655" r="1.55" fill="#a2a6b0" stroke="#8a8f9a" stroke-width=".5"/>
<circle cx="1722" cy="677" r="4" fill="#54b399"/><text x="1734.12" y="681.2" class="lg" style="letter-spacing:0.298px">B. Buamsom</text>
<g stroke="#5a606c" stroke-width=".9" fill="#d3d6dc"><rect x="1890.2" y="671" width="3.4" height="2.5" rx=".7"/><rect x="1890.2" y="680.4" width="3.4" height="2.5" rx=".7"/></g><circle cx="1891.9" cy="677" r="1.55" fill="#a2a6b0" stroke="#8a8f9a" stroke-width=".5"/>
<circle cx="1722" cy="699" r="4" fill="#6092c0"/><text x="1734.12" y="703.2" class="lg" style="letter-spacing:0.146px">B. Pakkor</text>
<g stroke="#5a606c" stroke-width=".9" fill="#d3d6dc"><rect x="1890.2" y="693" width="3.4" height="2.5" rx=".7"/><rect x="1890.2" y="702.4" width="3.4" height="2.5" rx=".7"/></g><circle cx="1891.9" cy="699" r="1.55" fill="#a2a6b0" stroke="#8a8f9a" stroke-width=".5"/>
<circle cx="1722" cy="721" r="4" fill="#d36086"/><text x="1734.12" y="725.2" class="lg" style="letter-spacing:0.337px">B. Nongkok</text>
<g stroke="#5a606c" stroke-width=".9" fill="#d3d6dc"><rect x="1890.2" y="715" width="3.4" height="2.5" rx=".7"/><rect x="1890.2" y="724.4" width="3.4" height="2.5" rx=".7"/></g><circle cx="1891.9" cy="721" r="1.55" fill="#a2a6b0" stroke="#8a8f9a" stroke-width=".5"/>
<circle cx="1722" cy="743" r="4" fill="#9170b8"/><text x="1734.12" y="747.2" class="lg" style="letter-spacing:0.358px">B. Phonsa-art</text>
<g stroke="#5a606c" stroke-width=".9" fill="#d3d6dc"><rect x="1890.2" y="737" width="3.4" height="2.5" rx=".7"/><rect x="1890.2" y="746.4" width="3.4" height="2.5" rx=".7"/></g><circle cx="1891.9" cy="743" r="1.55" fill="#a2a6b0" stroke="#8a8f9a" stroke-width=".5"/>
<circle cx="1722" cy="765" r="4" fill="#ca8eae"/><text x="1734.12" y="769.2" class="lg" style="letter-spacing:0.135px">B. Pamok</text>
<g stroke="#5a606c" stroke-width=".9" fill="#d3d6dc"><rect x="1890.2" y="759" width="3.4" height="2.5" rx=".7"/><rect x="1890.2" y="768.4" width="3.4" height="2.5" rx=".7"/></g><circle cx="1891.9" cy="765" r="1.55" fill="#a2a6b0" stroke="#8a8f9a" stroke-width=".5"/></svg>
<div class="abs" style="left:1902px;top:224px;width:8px;height:75px;background:linear-gradient(#e9ebf0 0,#b3b7c4 10px,#b3b7c4 100%)"></div>
<div class="abs" style="left:966px;top:752px;width:24px;height:24px;border-radius:4px;background:#f3f5f9"></div><svg width="1913" height="789" viewBox="0 0 1913 789" style="pointer-events:none"><path d="M972 759.5h2.2M976 759.5h8M972 762.5h2.2M976 762.5h8M972 765.5h2.2M976 765.5h8M972 768.5h2.2M976 768.5h8" stroke="#5a6170" stroke-width="1.1"/></svg>
</body></html>
